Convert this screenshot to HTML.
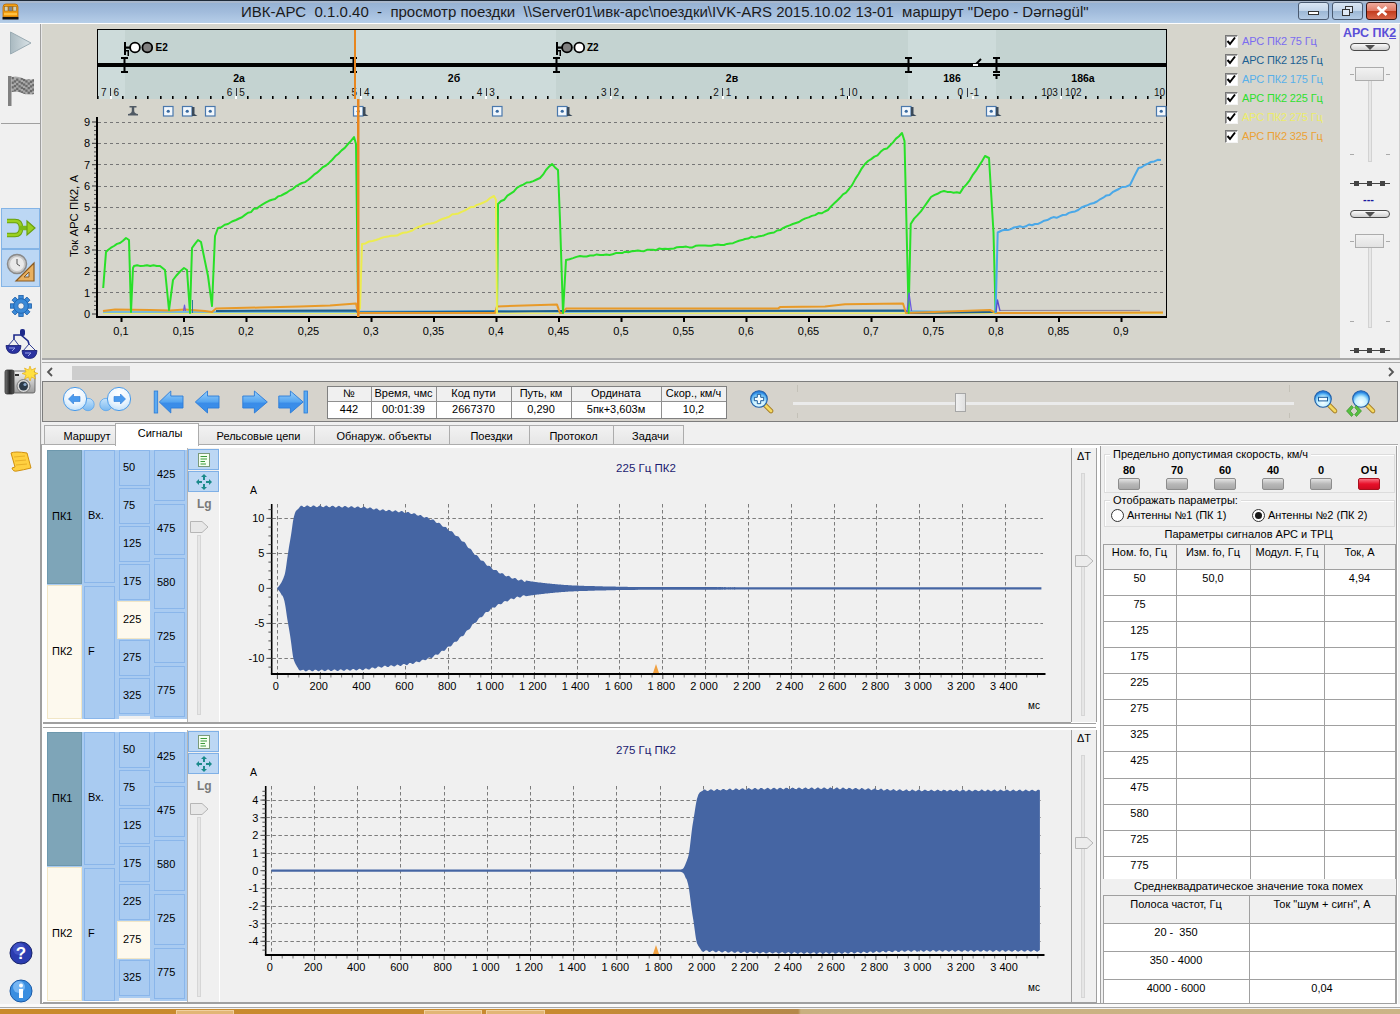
<!DOCTYPE html>
<html><head><meta charset="utf-8">
<style>
*{margin:0;padding:0;box-sizing:border-box}
html,body{width:1400px;height:1014px;overflow:hidden;background:#f0f0f0;font-family:"Liberation Sans",sans-serif;font-size:11px;color:#000}
.a{position:absolute}
.t{position:absolute;white-space:nowrap;line-height:1}
svg{position:absolute;overflow:visible}
</style></head><body>

<div class="a" style="left:0;top:0;width:1400px;height:23px;background:linear-gradient(#a9b8cc 0px,#a9b8cc 2px,#96b2d3 2px,#a2bcdc 50%,#b6cee8 100%);border-top:1px solid #1e2a38"></div>
<div class="a" style="left:0;top:23px;width:1400px;height:1px;background:#fdfdfd"></div>
<div class="t" style="left:241px;top:4px;font-size:15px;color:#1b1b1b;letter-spacing:0">ИВК-АРС&nbsp; 0.1.0.40&nbsp; -&nbsp; просмотр поездки&nbsp; \\Server01\ивк-арс\поездки\IVK-ARS 2015.10.02 13-01&nbsp; маршрут "Depo - Dərnəgül"</div>
<div class="a" style="left:1298px;top:2px;width:31px;height:18px;border:1px solid #4a5a70;border-radius:3px;background:linear-gradient(#d9e6f4,#c3d5e9 48%,#9db8d5 52%,#b4cbe4)"><div class="a" style="left:9px;top:8px;width:11px;height:4px;background:#fff;border:1px solid #333"></div></div>
<div class="a" style="left:1332px;top:2px;width:31px;height:18px;border:1px solid #4a5a70;border-radius:3px;background:linear-gradient(#d9e6f4,#c3d5e9 48%,#9db8d5 52%,#b4cbe4)"><div class="a" style="left:12px;top:3px;width:8px;height:7px;border:1.5px solid #333;background:#dfe9f5"></div><div class="a" style="left:9px;top:6px;width:8px;height:7px;border:1.5px solid #333;background:#dfe9f5"></div></div>
<div class="a" style="left:1366px;top:2px;width:31px;height:18px;border:1px solid #3a1410;border-radius:3px;background:linear-gradient(#eeaa9c,#e07a66 48%,#c23c1e 52%,#d8664a)"><svg class="a" style="left:9px;top:3px" width="12" height="10"><path d="M1.5 1 L10.5 9 M10.5 1 L1.5 9" stroke="#fff" stroke-width="2.6"/></svg></div>
<svg class="a" style="left:2px;top:3px" width="17" height="17" viewBox="0 0 17 17"><path d="M1 4 Q1 1 4 1 L13 1 Q16 1 16 4 L16 14 L1 14 Z" fill="#f5a010" stroke="#b86a08" stroke-width="0.8"/><rect x="2.5" y="3.5" width="3.5" height="4.5" fill="#d8d0b0" stroke="#8a5a10" stroke-width="0.5"/><rect x="6.8" y="3.5" width="3.5" height="4.5" fill="#808890" stroke="#8a5a10" stroke-width="0.5"/><rect x="11" y="3.5" width="3.5" height="4.5" fill="#d8d0b0" stroke="#8a5a10" stroke-width="0.5"/><rect x="2" y="10" width="13" height="2" fill="#ffc040"/><rect x="0.5" y="14" width="16" height="2.5" fill="#111"/></svg>
<div class="a" style="left:0;top:24px;width:40px;height:990px;background:#f0f0f0"></div>
<div class="a" style="left:40px;top:24px;width:1px;height:984px;background:#a0a0a0"></div><div class="a" style="left:41px;top:24px;width:1px;height:984px;background:#e8e8e8"></div>
<div class="a" style="left:1px;top:123px;width:39px;height:1px;background:#a0a0a0"></div>
<svg class="a" style="left:10px;top:31px" width="22" height="24" viewBox="0 0 22 24"><defs><linearGradient id="pl" x1="0" x2="1"><stop offset="0" stop-color="#a9b9c0"/><stop offset="1" stop-color="#dbe4e8"/></linearGradient></defs><path d="M0.5 1 L21 12 L0.5 23 Z" fill="url(#pl)" stroke="#9aabb3"/></svg>
<svg class="a" style="left:8px;top:76px" width="27" height="31" viewBox="0 0 27 31"><defs><clipPath id="fc"><path d="M3.5 1 Q9 -0.5 14 2 Q19 4.5 26 3 L26 18 Q19 19.5 14 17 Q9 14.5 3.5 16 Z"/></clipPath></defs><rect x="0" y="0" width="3.5" height="30" fill="#808080"/><g clip-path="url(#fc)"><rect x="3" y="0" width="24" height="20" fill="#a9a9a9"/><rect x="3.5" y="1.0" width="2.3" height="2.3" fill="#6a6a6a"/><rect x="8.1" y="2.5" width="2.3" height="2.3" fill="#6a6a6a"/><rect x="12.7" y="1.5" width="2.3" height="2.3" fill="#6a6a6a"/><rect x="17.3" y="-0.3" width="2.3" height="2.3" fill="#6a6a6a"/><rect x="21.9" y="0.1" width="2.3" height="2.3" fill="#6a6a6a"/><rect x="5.8" y="4.3" width="2.3" height="2.3" fill="#6a6a6a"/><rect x="10.4" y="4.6" width="2.3" height="2.3" fill="#6a6a6a"/><rect x="15.0" y="2.8" width="2.3" height="2.3" fill="#6a6a6a"/><rect x="19.6" y="1.8" width="2.3" height="2.3" fill="#6a6a6a"/><rect x="24.2" y="3.3" width="2.3" height="2.3" fill="#6a6a6a"/><rect x="3.5" y="5.6" width="2.3" height="2.3" fill="#6a6a6a"/><rect x="8.1" y="7.1" width="2.3" height="2.3" fill="#6a6a6a"/><rect x="12.7" y="6.1" width="2.3" height="2.3" fill="#6a6a6a"/><rect x="17.3" y="4.3" width="2.3" height="2.3" fill="#6a6a6a"/><rect x="21.9" y="4.7" width="2.3" height="2.3" fill="#6a6a6a"/><rect x="5.8" y="8.9" width="2.3" height="2.3" fill="#6a6a6a"/><rect x="10.4" y="9.2" width="2.3" height="2.3" fill="#6a6a6a"/><rect x="15.0" y="7.4" width="2.3" height="2.3" fill="#6a6a6a"/><rect x="19.6" y="6.4" width="2.3" height="2.3" fill="#6a6a6a"/><rect x="24.2" y="7.9" width="2.3" height="2.3" fill="#6a6a6a"/><rect x="3.5" y="10.2" width="2.3" height="2.3" fill="#6a6a6a"/><rect x="8.1" y="11.7" width="2.3" height="2.3" fill="#6a6a6a"/><rect x="12.7" y="10.7" width="2.3" height="2.3" fill="#6a6a6a"/><rect x="17.3" y="8.9" width="2.3" height="2.3" fill="#6a6a6a"/><rect x="21.9" y="9.3" width="2.3" height="2.3" fill="#6a6a6a"/><rect x="5.8" y="13.5" width="2.3" height="2.3" fill="#6a6a6a"/><rect x="10.4" y="13.8" width="2.3" height="2.3" fill="#6a6a6a"/><rect x="15.0" y="12.0" width="2.3" height="2.3" fill="#6a6a6a"/><rect x="19.6" y="11.0" width="2.3" height="2.3" fill="#6a6a6a"/><rect x="24.2" y="12.5" width="2.3" height="2.3" fill="#6a6a6a"/><rect x="3.5" y="14.8" width="2.3" height="2.3" fill="#6a6a6a"/><rect x="8.1" y="16.3" width="2.3" height="2.3" fill="#6a6a6a"/><rect x="12.7" y="15.3" width="2.3" height="2.3" fill="#6a6a6a"/><rect x="17.3" y="13.5" width="2.3" height="2.3" fill="#6a6a6a"/><rect x="21.9" y="13.9" width="2.3" height="2.3" fill="#6a6a6a"/><rect x="5.8" y="18.1" width="2.3" height="2.3" fill="#6a6a6a"/><rect x="10.4" y="18.4" width="2.3" height="2.3" fill="#6a6a6a"/><rect x="15.0" y="16.6" width="2.3" height="2.3" fill="#6a6a6a"/><rect x="19.6" y="15.6" width="2.3" height="2.3" fill="#6a6a6a"/><rect x="24.2" y="17.1" width="2.3" height="2.3" fill="#6a6a6a"/></g></svg>
<div class="a" style="left:1px;top:208px;width:39px;height:41px;background:#bcd7f4;border:1px solid #84b4e6"></div>
<div class="a" style="left:1px;top:249px;width:39px;height:38px;background:#bcd7f4;border:1px solid #84b4e6"></div>
<svg class="a" style="left:5px;top:213px" width="32" height="30" viewBox="0 0 32 30"><path d="M2 8 L10 8 Q16 8 16 15 Q16 22 10 22 L2 22" fill="none" stroke="#6aa010" stroke-width="4.5"/><path d="M2 8 L10 8 Q16 8 16 15 Q16 22 10 22 L2 22" fill="none" stroke="#9ad020" stroke-width="2.5"/><path d="M15 15 L24 15" stroke="#7ab818" stroke-width="4.5"/><path d="M22 8 L30 15 L22 22 Z" fill="#9ad020" stroke="#6aa010" stroke-width="1.2"/></svg>
<svg class="a" style="left:6px;top:253px" width="30" height="30" viewBox="0 0 30 30"><circle cx="11" cy="11" r="9.5" fill="#c8c8c8" stroke="#8a8a8a" stroke-width="1.5"/><circle cx="11" cy="11" r="7" fill="#eaeaea"/><path d="M11 6 L11 11 L14 13" stroke="#555" stroke-width="1" fill="none"/><path d="M28 10 L28 28 L10 28 Z" fill="#e8b060" stroke="#8a5a20" stroke-width="1.2"/><path d="M23 19 L23 24 L18 24 Z" fill="#bcd7f4" stroke="#8a5a20" stroke-width="1"/></svg>
<svg class="a" style="left:10px;top:295px" width="22" height="22" viewBox="-11 -11 22 22"><g fill="#3a8ad8" stroke="#1d5ea8" stroke-width="0.8"><rect x="-2.2" y="-10.5" width="4.4" height="5" transform="rotate(0)"/><rect x="-2.2" y="-10.5" width="4.4" height="5" transform="rotate(45)"/><rect x="-2.2" y="-10.5" width="4.4" height="5" transform="rotate(90)"/><rect x="-2.2" y="-10.5" width="4.4" height="5" transform="rotate(135)"/><rect x="-2.2" y="-10.5" width="4.4" height="5" transform="rotate(180)"/><rect x="-2.2" y="-10.5" width="4.4" height="5" transform="rotate(225)"/><rect x="-2.2" y="-10.5" width="4.4" height="5" transform="rotate(270)"/><rect x="-2.2" y="-10.5" width="4.4" height="5" transform="rotate(315)"/><circle r="7.3"/></g><circle r="3.2" fill="#f0f0f0" stroke="#1d5ea8" stroke-width="0.8"/></svg>
<svg class="a" style="left:0;top:320px" width="42" height="50" viewBox="0 320 42 50"><rect x="20" y="329" width="5" height="7" rx="2" fill="#1e2a8a"/><path d="M14 339 L14 335 L21 335 L28 341 L29 344" fill="none" stroke="#1e2a8a" stroke-width="1.6"/><path d="M14 339 L7 347 M14 339 L20 347 M29 344 L23 351 M29 344 L36 351" stroke="#1e2a8a" stroke-width="0.9"/><path d="M6 345.5 L21 345.5 Q20.5 353.5 13.5 353.5 Q6.5 353.5 6 345.5 Z" fill="#2a32a0" stroke="#141c70" stroke-width="0.8"/><path d="M22 350.5 L37 350.5 Q36.5 358.5 29.5 358.5 Q22.5 358.5 22 350.5 Z" fill="#2a32a0" stroke="#141c70" stroke-width="0.8"/><path d="M9 348 L15 348 L12 351" fill="none" stroke="#9aa4e8" stroke-width="1"/><path d="M25 353 L31 353 L28 356" fill="none" stroke="#9aa4e8" stroke-width="1"/></svg>
<svg class="a" style="left:0;top:362px" width="42" height="36" viewBox="0 362 42 36"><defs><linearGradient id="cbody" x1="0" y1="0" x2="0" y2="1"><stop offset="0" stop-color="#f0f0f0"/><stop offset="0.5" stop-color="#c8c8c8"/><stop offset="1" stop-color="#9a9a9a"/></linearGradient><linearGradient id="cgrip" x1="0" y1="0" x2="1" y2="0"><stop offset="0" stop-color="#777"/><stop offset="0.5" stop-color="#2a2a2a"/><stop offset="1" stop-color="#555"/></linearGradient></defs><rect x="12" y="371" width="23" height="22" rx="2" fill="url(#cbody)" stroke="#555" stroke-width="0.8"/><rect x="5" y="370" width="9" height="24" rx="2" fill="url(#cgrip)" stroke="#333" stroke-width="0.8"/><rect x="15" y="374" width="4" height="2" fill="#333"/><circle cx="23.5" cy="386" r="6.5" fill="#d8d8d8" stroke="#666" stroke-width="0.8"/><circle cx="23.5" cy="386" r="4.5" fill="#2c3a48"/><circle cx="25" cy="384.5" r="1.6" fill="#8aa8c8"/><path d="M30 366 L31.5 370 L35.5 368 L34 372 L38 373.5 L34 375 L35.5 379 L31.5 377 L30 381 L28.5 377 L24.5 379 L26 375 L22 373.5 L26 372 L24.5 368 L28.5 370 Z" fill="#ffe040" stroke="#e0a810" stroke-width="0.6"/></svg>
<svg class="a" style="left:9px;top:450px" width="24" height="24" viewBox="0 0 24 24"><path d="M2 3 Q6 1 18 3 L22 18 Q14 20 8 21 Q4 22 3 18 L6 17 Z" fill="#ffd040" stroke="#d09010" stroke-width="1"/><path d="M5 7 L16 6 M6 11 L17 10 M7 15 L18 14" stroke="#e8b028" stroke-width="1"/></svg>
<svg class="a" style="left:9px;top:941px" width="24" height="24" viewBox="0 0 24 24"><circle cx="12" cy="12" r="11" fill="#2b3cb0" stroke="#18246a"/><circle cx="10" cy="8" r="6" fill="#5868d8" opacity="0.5"/><text x="12" y="18" font-size="17" font-weight="bold" fill="#fff" text-anchor="middle" font-family="Liberation Sans">?</text></svg>
<svg class="a" style="left:9px;top:979px" width="24" height="24" viewBox="0 0 24 24"><circle cx="12" cy="12" r="11" fill="#3a8ee0" stroke="#1a5aa8"/><circle cx="10" cy="8" r="6" fill="#9ed0ff" opacity="0.6"/><circle cx="12" cy="6.5" r="2" fill="#fff"/><rect x="10" y="10" width="4" height="9" fill="#fff"/></svg>
<div class="a" style="left:42px;top:24px;width:1298px;height:334px;background:#d6d5cc"></div>
<div class="a" style="left:1340px;top:24px;width:60px;height:334px;background:#f0f0f0"></div>
<div class="a" style="left:42px;top:358px;width:1358px;height:2px;background:#a9a9a9"></div>
<div class="a" style="left:42px;top:362px;width:1358px;height:1px;background:#a9a9a9"></div>
<div class="a" style="left:42px;top:363px;width:1358px;height:18px;background:#f0f0f0"></div>
<div class="a" style="left:72px;top:366px;width:58px;height:14px;background:#cdcdcd"></div>
<div class="a" style="left:42px;top:381px;width:1356px;height:41px;background:#d6d3cc;border:1px solid #7d7d7d"></div>
<svg class="a" style="left:46px;top:367px" width="8" height="10"><path d="M6 1 L2 5 L6 9" fill="none" stroke="#555" stroke-width="1.8"/></svg>
<svg class="a" style="left:1387px;top:367px" width="8" height="10"><path d="M2 1 L6 5 L2 9" fill="none" stroke="#555" stroke-width="1.8"/></svg>
<svg class="a" style="left:0;top:0" width="1" height="1"><defs><radialGradient id="cgL" cx="0.5" cy="0.25" r="0.8"><stop offset="0" stop-color="#ffffff"/><stop offset="0.6" stop-color="#eaf4fd"/><stop offset="1" stop-color="#b8dcfa"/></radialGradient><linearGradient id="bgL" x1="0" y1="0" x2="0" y2="1"><stop offset="0" stop-color="#c8e4fb"/><stop offset="1" stop-color="#78b8f0"/></linearGradient></defs><circle cx="88" cy="404.5" r="6.2" fill="url(#bgL)" stroke="#5aa4ec" stroke-width="0.8"/><circle cx="75" cy="399" r="11.6" fill="url(#cgL)" stroke="#4a9ae8" stroke-width="1"/><path d="M68.5 399 L73.5 394 L73.5 396.5 L80 396.5 L80 401.5 L73.5 401.5 L73.5 404 Z" fill="#4a9aee" stroke="#2a7ad8" stroke-width="0.6"/></svg>
<svg class="a" style="left:0;top:0" width="1" height="1"><defs><radialGradient id="cgR" cx="0.5" cy="0.25" r="0.8"><stop offset="0" stop-color="#ffffff"/><stop offset="0.6" stop-color="#eaf4fd"/><stop offset="1" stop-color="#b8dcfa"/></radialGradient><linearGradient id="bgR" x1="0" y1="0" x2="0" y2="1"><stop offset="0" stop-color="#c8e4fb"/><stop offset="1" stop-color="#78b8f0"/></linearGradient></defs><circle cx="106" cy="404.5" r="6.2" fill="url(#bgR)" stroke="#5aa4ec" stroke-width="0.8"/><circle cx="119" cy="399" r="11.6" fill="url(#cgR)" stroke="#4a9ae8" stroke-width="1"/><path d="M125.5 399 L120.5 394 L120.5 396.5 L114 396.5 L114 401.5 L120.5 401.5 L120.5 404 Z" fill="#4a9aee" stroke="#2a7ad8" stroke-width="0.6"/></svg>
<svg class="a" style="left:0;top:0" width="1" height="1"><defs><linearGradient id="ag1" x1="0" y1="0" x2="0" y2="1"><stop offset="0" stop-color="#9ad0fa"/><stop offset="0.5" stop-color="#54a4f0"/><stop offset="0.55" stop-color="#3a8ce8"/><stop offset="1" stop-color="#3a90ea"/></linearGradient></defs><path d="M159.3 402 L170.8 391 L170.8 396 L183 396 L183 408 L170.8 408 L170.8 413 Z" fill="url(#ag1)" stroke="#2a7ad8" stroke-width="0.9" stroke-linejoin="miter"/><rect x="154.2" y="391" width="3.5" height="22" fill="#5aaaf2" stroke="#2a7ad8" stroke-width="0.8"/></svg>
<svg class="a" style="left:0;top:0" width="1" height="1"><defs><linearGradient id="ag2" x1="0" y1="0" x2="0" y2="1"><stop offset="0" stop-color="#9ad0fa"/><stop offset="0.5" stop-color="#54a4f0"/><stop offset="0.55" stop-color="#3a8ce8"/><stop offset="1" stop-color="#3a90ea"/></linearGradient></defs><path d="M195.3 402 L207.5 391 L207.5 396 L219 396 L219 408 L207.5 408 L207.5 413 Z" fill="url(#ag2)" stroke="#2a7ad8" stroke-width="0.9" stroke-linejoin="miter"/></svg>
<svg class="a" style="left:0;top:0" width="1" height="1"><defs><linearGradient id="ag3" x1="0" y1="0" x2="0" y2="1"><stop offset="0" stop-color="#9ad0fa"/><stop offset="0.5" stop-color="#54a4f0"/><stop offset="0.55" stop-color="#3a8ce8"/><stop offset="1" stop-color="#3a90ea"/></linearGradient></defs><path d="M267.3 402 L254.4 391 L254.4 396 L242.8 396 L242.8 408 L254.4 408 L254.4 413 Z" fill="url(#ag3)" stroke="#2a7ad8" stroke-width="0.9" stroke-linejoin="miter"/></svg>
<svg class="a" style="left:0;top:0" width="1" height="1"><defs><linearGradient id="ag4" x1="0" y1="0" x2="0" y2="1"><stop offset="0" stop-color="#9ad0fa"/><stop offset="0.5" stop-color="#54a4f0"/><stop offset="0.55" stop-color="#3a8ce8"/><stop offset="1" stop-color="#3a90ea"/></linearGradient></defs><path d="M303.2 402 L290.4 391 L290.4 396 L278.8 396 L278.8 408 L290.4 408 L290.4 413 Z" fill="url(#ag4)" stroke="#2a7ad8" stroke-width="0.9" stroke-linejoin="miter"/><rect x="304" y="391" width="3.5" height="22" fill="#5aaaf2" stroke="#2a7ad8" stroke-width="0.8"/></svg>
<div class="a" style="left:327px;top:386px;width:400px;height:33px;background:#fff;border:1px solid #808080"></div>
<div class="a" style="left:328px;top:387px;width:398px;height:14px;background:#f0f0f0"></div>
<div class="a" style="left:328px;top:401px;width:398px;height:1px;background:#909090"></div>
<div class="a" style="left:371px;top:387px;width:1px;height:31px;background:#909090"></div>
<div class="a" style="left:436px;top:387px;width:1px;height:31px;background:#909090"></div>
<div class="a" style="left:511px;top:387px;width:1px;height:31px;background:#909090"></div>
<div class="a" style="left:571px;top:387px;width:1px;height:31px;background:#909090"></div>
<div class="a" style="left:661px;top:387px;width:1px;height:31px;background:#909090"></div>
<div class="t" style="left:327px;width:44px;text-align:center;top:388px;font-size:11px">№</div>
<div class="t" style="left:327px;width:44px;text-align:center;top:404px;font-size:11px">442</div>
<div class="t" style="left:371px;width:65px;text-align:center;top:388px;font-size:11px">Время, чмс</div>
<div class="t" style="left:371px;width:65px;text-align:center;top:404px;font-size:11px">00:01:39</div>
<div class="t" style="left:436px;width:75px;text-align:center;top:388px;font-size:11px">Код пути</div>
<div class="t" style="left:436px;width:75px;text-align:center;top:404px;font-size:11px">2667370</div>
<div class="t" style="left:511px;width:60px;text-align:center;top:388px;font-size:11px">Путь, км</div>
<div class="t" style="left:511px;width:60px;text-align:center;top:404px;font-size:11px">0,290</div>
<div class="t" style="left:571px;width:90px;text-align:center;top:388px;font-size:11px">Ордината</div>
<div class="t" style="left:571px;width:90px;text-align:center;top:404px;font-size:11px">5пк+3,603м</div>
<div class="t" style="left:661px;width:65px;text-align:center;top:388px;font-size:11px">Скор., км/ч</div>
<div class="t" style="left:661px;width:65px;text-align:center;top:404px;font-size:11px">10,2</div>
<svg class="a" style="left:750px;top:390px" width="28" height="28" viewBox="0 0 28 28"><defs><radialGradient id="mgp" cx="0.5" cy="0.7" r="0.6"><stop offset="0" stop-color="#f4feff"/><stop offset="0.55" stop-color="#c6f0ff"/><stop offset="0.85" stop-color="#58b4f4"/><stop offset="1" stop-color="#2a84e0"/></radialGradient></defs><path d="M14.5 14.5 L21 21" stroke="#a8802a" stroke-width="4.6" stroke-linecap="round"/><path d="M14.5 14.5 L21 21" stroke="#f4d860" stroke-width="2.8" stroke-linecap="round"/><circle cx="9" cy="9" r="8.3" fill="url(#mgp)" stroke="#1e5ea8" stroke-width="1.1"/><path d="M7.3 4.3 L10.7 4.3 L10.7 7.3 L13.7 7.3 L13.7 10.7 L10.7 10.7 L10.7 13.7 L7.3 13.7 L7.3 10.7 L4.3 10.7 L4.3 7.3 L7.3 7.3 Z" fill="#f4fdff" stroke="#1a5a9a" stroke-width="1"/></svg>
<svg class="a" style="left:1314px;top:390px" width="28" height="28" viewBox="0 0 28 28"><defs><radialGradient id="mgm" cx="0.5" cy="0.7" r="0.6"><stop offset="0" stop-color="#f4feff"/><stop offset="0.55" stop-color="#c6f0ff"/><stop offset="0.85" stop-color="#58b4f4"/><stop offset="1" stop-color="#2a84e0"/></radialGradient></defs><path d="M14.5 14.5 L21 21" stroke="#a8802a" stroke-width="4.6" stroke-linecap="round"/><path d="M14.5 14.5 L21 21" stroke="#f4d860" stroke-width="2.8" stroke-linecap="round"/><circle cx="9" cy="9" r="8.3" fill="url(#mgm)" stroke="#1e5ea8" stroke-width="1.1"/><rect x="4.5" y="7.3" width="9" height="3.6" fill="#f4fdff" stroke="#1a5a9a" stroke-width="1"/></svg>
<svg class="a" style="left:1352px;top:390px" width="28" height="28" viewBox="0 0 28 28"><defs><radialGradient id="mgf" cx="0.5" cy="0.7" r="0.6"><stop offset="0" stop-color="#f4feff"/><stop offset="0.55" stop-color="#c6f0ff"/><stop offset="0.85" stop-color="#58b4f4"/><stop offset="1" stop-color="#2a84e0"/></radialGradient></defs><path d="M14.5 14.5 L21 21" stroke="#a8802a" stroke-width="4.6" stroke-linecap="round"/><path d="M14.5 14.5 L21 21" stroke="#f4d860" stroke-width="2.8" stroke-linecap="round"/><circle cx="9" cy="9" r="8.3" fill="url(#mgf)" stroke="#1e5ea8" stroke-width="1.1"/></svg>
<svg class="a" style="left:1346px;top:405px" width="16" height="12" viewBox="0 0 16 12"><path d="M5.5 0.5 L0.5 6 L5.5 11.5 L7.3 9.6 L4.2 6 L7.3 2.4 Z" fill="#58c040" stroke="#2a8a20" stroke-width="0.6"/><path d="M10.5 0.5 L15.5 6 L10.5 11.5 L8.7 9.6 L11.8 6 L8.7 2.4 Z" fill="#58c040" stroke="#2a8a20" stroke-width="0.6"/></svg>
<div class="a" style="left:793px;top:402px;width:501px;height:3px;background:#ebebeb"></div>
<div class="a" style="left:797px;top:385px;width:1px;height:7px;background:#c4c1b8"></div>
<div class="a" style="left:797px;top:413px;width:1px;height:5px;background:#c4c1b8"></div>
<div class="a" style="left:1289px;top:385px;width:1px;height:7px;background:#c4c1b8"></div>
<div class="a" style="left:1289px;top:413px;width:1px;height:5px;background:#c4c1b8"></div>
<div class="a" style="left:955px;top:393px;width:11px;height:19px;background:linear-gradient(90deg,#f0f0f0,#e0e0e0);border:1px solid #a6a6a6"></div>
<div class="a" style="left:41px;top:444px;width:1357px;height:560px;background:#ffffff;border-left:1px solid #a0a0a0;border-top:1px solid #acacac"></div>
<svg class="a" style="left:0;top:0" width="1400" height="360" viewBox="0 0 1400 360"><rect x="98" y="30" width="27" height="69" fill="#cddbda"/><rect x="125" y="30" width="230" height="69" fill="#c4d3d1"/><rect x="355" y="30" width="201" height="69" fill="#cddbda"/><rect x="556" y="30" width="352" height="69" fill="#c4d3d1"/><rect x="908" y="30" width="88" height="69" fill="#cddbda"/><rect x="996" y="30" width="170" height="69" fill="#c4d3d1"/><rect x="97" y="29" width="1070" height="1" fill="#000"/><rect x="97" y="29" width="1" height="70" fill="#000"/><rect x="1166" y="29" width="1" height="288" fill="#000"/><rect x="98" y="63" width="1068" height="4" fill="#000"/><rect x="123.5" y="57" width="2" height="16" fill="#000"/><rect x="121" y="57" width="7" height="2" fill="#000"/><rect x="121" y="71" width="7" height="2" fill="#000"/><rect x="352.5" y="57" width="2" height="16" fill="#000"/><rect x="350" y="57" width="7" height="2" fill="#000"/><rect x="350" y="71" width="7" height="2" fill="#000"/><rect x="555.5" y="57" width="2" height="16" fill="#000"/><rect x="553" y="57" width="7" height="2" fill="#000"/><rect x="553" y="71" width="7" height="2" fill="#000"/><rect x="907.5" y="57" width="2" height="16" fill="#000"/><rect x="905" y="57" width="7" height="2" fill="#000"/><rect x="905" y="71" width="7" height="2" fill="#000"/><rect x="995.5" y="57" width="2" height="16" fill="#000"/><rect x="993" y="57" width="7" height="2" fill="#000"/><rect x="993" y="71" width="7" height="2" fill="#000"/><rect x="993" y="74" width="7" height="2" fill="#000"/><rect x="995.5" y="74" width="2" height="5" fill="#000"/><path d="M975 65 L981 59" stroke="#000" stroke-width="2"/><rect x="973" y="64" width="5" height="2" fill="#fff"/><rect x="97" y="96" width="1.6" height="3" fill="#000"/><rect x="110" y="96" width="1.6" height="3" fill="#000"/><rect x="122" y="96" width="1.6" height="3" fill="#000"/><rect x="135" y="96" width="1.6" height="3" fill="#000"/><rect x="147" y="96" width="1.6" height="3" fill="#000"/><rect x="160" y="96" width="1.6" height="3" fill="#000"/><rect x="172" y="96" width="1.6" height="3" fill="#000"/><rect x="185" y="96" width="1.6" height="3" fill="#000"/><rect x="197" y="96" width="1.6" height="3" fill="#000"/><rect x="210" y="96" width="1.6" height="3" fill="#000"/><rect x="222" y="96" width="1.6" height="3" fill="#000"/><rect x="235" y="96" width="1.6" height="3" fill="#000"/><rect x="247" y="96" width="1.6" height="3" fill="#000"/><rect x="260" y="96" width="1.6" height="3" fill="#000"/><rect x="272" y="96" width="1.6" height="3" fill="#000"/><rect x="285" y="96" width="1.6" height="3" fill="#000"/><rect x="297" y="96" width="1.6" height="3" fill="#000"/><rect x="310" y="96" width="1.6" height="3" fill="#000"/><rect x="322" y="96" width="1.6" height="3" fill="#000"/><rect x="335" y="96" width="1.6" height="3" fill="#000"/><rect x="347" y="96" width="1.6" height="3" fill="#000"/><rect x="360" y="96" width="1.6" height="3" fill="#000"/><rect x="372" y="96" width="1.6" height="3" fill="#000"/><rect x="385" y="96" width="1.6" height="3" fill="#000"/><rect x="397" y="96" width="1.6" height="3" fill="#000"/><rect x="410" y="96" width="1.6" height="3" fill="#000"/><rect x="422" y="96" width="1.6" height="3" fill="#000"/><rect x="435" y="96" width="1.6" height="3" fill="#000"/><rect x="447" y="96" width="1.6" height="3" fill="#000"/><rect x="460" y="96" width="1.6" height="3" fill="#000"/><rect x="472" y="96" width="1.6" height="3" fill="#000"/><rect x="485" y="96" width="1.6" height="3" fill="#000"/><rect x="497" y="96" width="1.6" height="3" fill="#000"/><rect x="510" y="96" width="1.6" height="3" fill="#000"/><rect x="522" y="96" width="1.6" height="3" fill="#000"/><rect x="535" y="96" width="1.6" height="3" fill="#000"/><rect x="547" y="96" width="1.6" height="3" fill="#000"/><rect x="560" y="96" width="1.6" height="3" fill="#000"/><rect x="572" y="96" width="1.6" height="3" fill="#000"/><rect x="585" y="96" width="1.6" height="3" fill="#000"/><rect x="597" y="96" width="1.6" height="3" fill="#000"/><rect x="610" y="96" width="1.6" height="3" fill="#000"/><rect x="622" y="96" width="1.6" height="3" fill="#000"/><rect x="635" y="96" width="1.6" height="3" fill="#000"/><rect x="647" y="96" width="1.6" height="3" fill="#000"/><rect x="660" y="96" width="1.6" height="3" fill="#000"/><rect x="672" y="96" width="1.6" height="3" fill="#000"/><rect x="685" y="96" width="1.6" height="3" fill="#000"/><rect x="697" y="96" width="1.6" height="3" fill="#000"/><rect x="710" y="96" width="1.6" height="3" fill="#000"/><rect x="722" y="96" width="1.6" height="3" fill="#000"/><rect x="735" y="96" width="1.6" height="3" fill="#000"/><rect x="747" y="96" width="1.6" height="3" fill="#000"/><rect x="760" y="96" width="1.6" height="3" fill="#000"/><rect x="772" y="96" width="1.6" height="3" fill="#000"/><rect x="785" y="96" width="1.6" height="3" fill="#000"/><rect x="797" y="96" width="1.6" height="3" fill="#000"/><rect x="810" y="96" width="1.6" height="3" fill="#000"/><rect x="822" y="96" width="1.6" height="3" fill="#000"/><rect x="835" y="96" width="1.6" height="3" fill="#000"/><rect x="847" y="96" width="1.6" height="3" fill="#000"/><rect x="860" y="96" width="1.6" height="3" fill="#000"/><rect x="872" y="96" width="1.6" height="3" fill="#000"/><rect x="885" y="96" width="1.6" height="3" fill="#000"/><rect x="897" y="96" width="1.6" height="3" fill="#000"/><rect x="910" y="96" width="1.6" height="3" fill="#000"/><rect x="922" y="96" width="1.6" height="3" fill="#000"/><rect x="935" y="96" width="1.6" height="3" fill="#000"/><rect x="947" y="96" width="1.6" height="3" fill="#000"/><rect x="960" y="96" width="1.6" height="3" fill="#000"/><rect x="972" y="96" width="1.6" height="3" fill="#000"/><rect x="985" y="96" width="1.6" height="3" fill="#000"/><rect x="997" y="96" width="1.6" height="3" fill="#000"/><rect x="1010" y="96" width="1.6" height="3" fill="#000"/><rect x="1022" y="96" width="1.6" height="3" fill="#000"/><rect x="1035" y="96" width="1.6" height="3" fill="#000"/><rect x="1047" y="96" width="1.6" height="3" fill="#000"/><rect x="1060" y="96" width="1.6" height="3" fill="#000"/><rect x="1072" y="96" width="1.6" height="3" fill="#000"/><rect x="1085" y="96" width="1.6" height="3" fill="#000"/><rect x="1097" y="96" width="1.6" height="3" fill="#000"/><rect x="1110" y="96" width="1.6" height="3" fill="#000"/><rect x="1122" y="96" width="1.6" height="3" fill="#000"/><rect x="1135" y="96" width="1.6" height="3" fill="#000"/><rect x="1147" y="96" width="1.6" height="3" fill="#000"/><rect x="1160" y="96" width="1.6" height="3" fill="#000"/><rect x="124" y="42" width="2" height="13" fill="#000"/><rect x="124" y="46.5" width="6" height="2.2" fill="#000"/><rect x="126" y="50" width="3" height="1.5" fill="#000"/><rect x="127.5" y="50" width="1.5" height="6" fill="#000"/><circle cx="135" cy="47.5" r="4.9" fill="#fff" stroke="#000" stroke-width="1.8"/><circle cx="147.3" cy="47.5" r="4.9" fill="#808080" stroke="#000" stroke-width="1.8"/><rect x="556" y="42" width="2" height="13" fill="#000"/><rect x="556" y="46.5" width="6" height="2.2" fill="#000"/><rect x="558" y="50" width="3" height="1.5" fill="#000"/><rect x="559.5" y="50" width="1.5" height="6" fill="#000"/><circle cx="567" cy="47.5" r="4.9" fill="#808080" stroke="#000" stroke-width="1.8"/><circle cx="579.3" cy="47.5" r="4.9" fill="#fff" stroke="#000" stroke-width="1.8"/><text x="155.5" y="51" font-size="10" font-weight="bold" font-family="Liberation Sans">E2</text><text x="587" y="51" font-size="10" font-weight="bold" font-family="Liberation Sans">Z2</text><text x="239" y="82" font-size="10.5" font-weight="bold" text-anchor="middle" font-family="Liberation Sans">2а</text><text x="454" y="82" font-size="10.5" font-weight="bold" text-anchor="middle" font-family="Liberation Sans">2б</text><text x="732" y="82" font-size="10.5" font-weight="bold" text-anchor="middle" font-family="Liberation Sans">2в</text><text x="952" y="82" font-size="10.5" font-weight="bold" text-anchor="middle" font-family="Liberation Sans">186</text><text x="1083" y="82" font-size="10.5" font-weight="bold" text-anchor="middle" font-family="Liberation Sans">186а</text><text x="106.5" y="96" font-size="10" text-anchor="end" font-family="Liberation Sans" fill="#111">7</text><text x="113.5" y="96" font-size="10" text-anchor="start" font-family="Liberation Sans" fill="#111">6</text><rect x="110" y="88" width="1" height="9" fill="#303440"/><text x="232.2" y="96" font-size="10" text-anchor="end" font-family="Liberation Sans" fill="#111">6</text><text x="239.2" y="96" font-size="10" text-anchor="start" font-family="Liberation Sans" fill="#111">5</text><rect x="236" y="88" width="1" height="9" fill="#303440"/><text x="357.0" y="96" font-size="10" text-anchor="end" font-family="Liberation Sans" fill="#111">5</text><text x="364.0" y="96" font-size="10" text-anchor="start" font-family="Liberation Sans" fill="#111">4</text><rect x="360" y="88" width="1" height="9" fill="#303440"/><text x="482.2" y="96" font-size="10" text-anchor="end" font-family="Liberation Sans" fill="#111">4</text><text x="489.2" y="96" font-size="10" text-anchor="start" font-family="Liberation Sans" fill="#111">3</text><rect x="486" y="88" width="1" height="9" fill="#303440"/><text x="606.5" y="96" font-size="10" text-anchor="end" font-family="Liberation Sans" fill="#111">3</text><text x="613.5" y="96" font-size="10" text-anchor="start" font-family="Liberation Sans" fill="#111">2</text><rect x="610" y="88" width="1" height="9" fill="#303440"/><text x="718.8" y="96" font-size="10" text-anchor="end" font-family="Liberation Sans" fill="#111">2</text><text x="725.8" y="96" font-size="10" text-anchor="start" font-family="Liberation Sans" fill="#111">1</text><rect x="722" y="88" width="1" height="9" fill="#303440"/><text x="845.1" y="96" font-size="10" text-anchor="end" font-family="Liberation Sans" fill="#111">1</text><text x="852.1" y="96" font-size="10" text-anchor="start" font-family="Liberation Sans" fill="#111">0</text><rect x="849" y="88" width="1" height="9" fill="#303440"/><text x="963.1" y="96" font-size="10" text-anchor="end" font-family="Liberation Sans" fill="#111">0</text><text x="970.1" y="96" font-size="10" text-anchor="start" font-family="Liberation Sans" fill="#111">-1</text><rect x="967" y="88" width="1" height="9" fill="#303440"/><text x="1057.9" y="96" font-size="10" text-anchor="end" font-family="Liberation Sans" fill="#111">103</text><text x="1064.9" y="96" font-size="10" text-anchor="start" font-family="Liberation Sans" fill="#111">102</text><rect x="1061" y="88" width="1" height="9" fill="#303440"/><text x="1154" y="96" font-size="10" font-family="Liberation Sans" fill="#111">10</text><rect x="110" y="96" width="2" height="3" fill="#fff"/><rect x="235" y="96" width="2" height="3" fill="#fff"/><rect x="360" y="96" width="2" height="3" fill="#fff"/><rect x="485" y="96" width="2" height="3" fill="#fff"/><rect x="610" y="96" width="2" height="3" fill="#fff"/><rect x="722" y="96" width="2" height="3" fill="#fff"/><rect x="848" y="96" width="2" height="3" fill="#fff"/><rect x="972" y="96" width="2" height="3" fill="#fff"/><rect x="1060" y="96" width="2" height="3" fill="#fff"/><path d="M129.5 106 L136.5 106 L136.5 107.5 L134.2 107.5 L134.2 111 Q134.5 113.5 138 114 L138 115.5 L128 115.5 L128 114 Q131.5 113.5 131.8 111 L131.8 107.5 L129.5 107.5 Z" fill="#505a64"/><rect x="163.5" y="106.5" width="9.5" height="9.5" fill="#f2f7fc" stroke="#4a78ac" stroke-width="1.2"/><circle cx="168.25" cy="111.25" r="1.6" fill="#3a6aa0"/><rect x="182.5" y="106.5" width="9.5" height="9.5" fill="#f2f7fc" stroke="#4a78ac" stroke-width="1.2"/><circle cx="187.25" cy="111.25" r="1.6" fill="#3a6aa0"/><path d="M192 107 L194.5 107 L194.5 114 L197.5 116 L192 116 Z" fill="#3a4a5a"/><rect x="205.5" y="106.5" width="9.5" height="9.5" fill="#f2f7fc" stroke="#4a78ac" stroke-width="1.2"/><circle cx="210.25" cy="111.25" r="1.6" fill="#3a6aa0"/><rect x="353.5" y="106.5" width="9.5" height="9.5" fill="#f2f7fc" stroke="#4a78ac" stroke-width="1.2"/><circle cx="358.25" cy="111.25" r="1.6" fill="#3a6aa0"/><path d="M363 107 L365.5 107 L365.5 114 L368.5 116 L363 116 Z" fill="#3a4a5a"/><rect x="492.5" y="106.5" width="9.5" height="9.5" fill="#f2f7fc" stroke="#4a78ac" stroke-width="1.2"/><circle cx="497.25" cy="111.25" r="1.6" fill="#3a6aa0"/><rect x="557.5" y="106.5" width="9.5" height="9.5" fill="#f2f7fc" stroke="#4a78ac" stroke-width="1.2"/><circle cx="562.25" cy="111.25" r="1.6" fill="#3a6aa0"/><path d="M567 107 L569.5 107 L569.5 114 L572.5 116 L567 116 Z" fill="#3a4a5a"/><rect x="901.5" y="106.5" width="9.5" height="9.5" fill="#f2f7fc" stroke="#4a78ac" stroke-width="1.2"/><circle cx="906.25" cy="111.25" r="1.6" fill="#3a6aa0"/><path d="M911 107 L913.5 107 L913.5 114 L916.5 116 L911 116 Z" fill="#3a4a5a"/><rect x="986.5" y="106.5" width="9.5" height="9.5" fill="#f2f7fc" stroke="#4a78ac" stroke-width="1.2"/><circle cx="991.25" cy="111.25" r="1.6" fill="#3a6aa0"/><path d="M996 107 L998.5 107 L998.5 114 L1001.5 116 L996 116 Z" fill="#3a4a5a"/><rect x="1156.5" y="106.5" width="9.5" height="9.5" fill="#f2f7fc" stroke="#4a78ac" stroke-width="1.2"/><circle cx="1161.25" cy="111.25" r="1.6" fill="#3a6aa0"/><line x1="98" y1="292.5" x2="1165" y2="292.5" stroke="#767676" stroke-width="1" stroke-dasharray="3 3"/><line x1="98" y1="271.5" x2="1165" y2="271.5" stroke="#767676" stroke-width="1" stroke-dasharray="3 3"/><line x1="98" y1="250.5" x2="1165" y2="250.5" stroke="#767676" stroke-width="1" stroke-dasharray="3 3"/><line x1="98" y1="228.5" x2="1165" y2="228.5" stroke="#767676" stroke-width="1" stroke-dasharray="3 3"/><line x1="98" y1="207.5" x2="1165" y2="207.5" stroke="#767676" stroke-width="1" stroke-dasharray="3 3"/><line x1="98" y1="186.5" x2="1165" y2="186.5" stroke="#767676" stroke-width="1" stroke-dasharray="3 3"/><line x1="98" y1="164.5" x2="1165" y2="164.5" stroke="#767676" stroke-width="1" stroke-dasharray="3 3"/><line x1="98" y1="143.5" x2="1165" y2="143.5" stroke="#767676" stroke-width="1" stroke-dasharray="3 3"/><line x1="98" y1="122.5" x2="1165" y2="122.5" stroke="#767676" stroke-width="1" stroke-dasharray="3 3"/><rect x="96" y="117" width="2" height="201" fill="#000"/><rect x="96" y="316" width="1071" height="2" fill="#000"/><rect x="92" y="313.5" width="4" height="1" fill="#333"/><text x="90" y="318.0" font-size="11" text-anchor="end" font-family="Liberation Sans">0</text><rect x="94" y="309.2" width="2" height="1" fill="#555"/><rect x="94" y="305.0" width="2" height="1" fill="#555"/><rect x="94" y="300.7" width="2" height="1" fill="#555"/><rect x="94" y="296.4" width="2" height="1" fill="#555"/><rect x="92" y="292.2" width="4" height="1" fill="#333"/><text x="90" y="296.7" font-size="11" text-anchor="end" font-family="Liberation Sans">1</text><rect x="94" y="287.9" width="2" height="1" fill="#555"/><rect x="94" y="283.6" width="2" height="1" fill="#555"/><rect x="94" y="279.4" width="2" height="1" fill="#555"/><rect x="94" y="275.1" width="2" height="1" fill="#555"/><rect x="92" y="270.8" width="4" height="1" fill="#333"/><text x="90" y="275.3" font-size="11" text-anchor="end" font-family="Liberation Sans">2</text><rect x="94" y="266.6" width="2" height="1" fill="#555"/><rect x="94" y="262.3" width="2" height="1" fill="#555"/><rect x="94" y="258.0" width="2" height="1" fill="#555"/><rect x="94" y="253.8" width="2" height="1" fill="#555"/><rect x="92" y="249.5" width="4" height="1" fill="#333"/><text x="90" y="254.0" font-size="11" text-anchor="end" font-family="Liberation Sans">3</text><rect x="94" y="245.2" width="2" height="1" fill="#555"/><rect x="94" y="241.0" width="2" height="1" fill="#555"/><rect x="94" y="236.7" width="2" height="1" fill="#555"/><rect x="94" y="232.4" width="2" height="1" fill="#555"/><rect x="92" y="228.2" width="4" height="1" fill="#333"/><text x="90" y="232.7" font-size="11" text-anchor="end" font-family="Liberation Sans">4</text><rect x="94" y="223.9" width="2" height="1" fill="#555"/><rect x="94" y="219.6" width="2" height="1" fill="#555"/><rect x="94" y="215.4" width="2" height="1" fill="#555"/><rect x="94" y="211.1" width="2" height="1" fill="#555"/><rect x="92" y="206.8" width="4" height="1" fill="#333"/><text x="90" y="211.3" font-size="11" text-anchor="end" font-family="Liberation Sans">5</text><rect x="94" y="202.6" width="2" height="1" fill="#555"/><rect x="94" y="198.3" width="2" height="1" fill="#555"/><rect x="94" y="194.0" width="2" height="1" fill="#555"/><rect x="94" y="189.8" width="2" height="1" fill="#555"/><rect x="92" y="185.5" width="4" height="1" fill="#333"/><text x="90" y="190.0" font-size="11" text-anchor="end" font-family="Liberation Sans">6</text><rect x="94" y="181.2" width="2" height="1" fill="#555"/><rect x="94" y="177.0" width="2" height="1" fill="#555"/><rect x="94" y="172.7" width="2" height="1" fill="#555"/><rect x="94" y="168.4" width="2" height="1" fill="#555"/><rect x="92" y="164.2" width="4" height="1" fill="#333"/><text x="90" y="168.7" font-size="11" text-anchor="end" font-family="Liberation Sans">7</text><rect x="94" y="159.9" width="2" height="1" fill="#555"/><rect x="94" y="155.6" width="2" height="1" fill="#555"/><rect x="94" y="151.4" width="2" height="1" fill="#555"/><rect x="94" y="147.1" width="2" height="1" fill="#555"/><rect x="92" y="142.8" width="4" height="1" fill="#333"/><text x="90" y="147.3" font-size="11" text-anchor="end" font-family="Liberation Sans">8</text><rect x="94" y="138.6" width="2" height="1" fill="#555"/><rect x="94" y="134.3" width="2" height="1" fill="#555"/><rect x="94" y="130.0" width="2" height="1" fill="#555"/><rect x="94" y="125.8" width="2" height="1" fill="#555"/><rect x="92" y="121.5" width="4" height="1" fill="#333"/><text x="90" y="126.0" font-size="11" text-anchor="end" font-family="Liberation Sans">9</text><rect x="120.5" y="318" width="2" height="4" fill="#000"/><text x="121.0" y="335" font-size="11" text-anchor="middle" font-family="Liberation Sans">0,1</text><rect x="183.0" y="318" width="2" height="4" fill="#000"/><text x="183.5" y="335" font-size="11" text-anchor="middle" font-family="Liberation Sans">0,15</text><rect x="245.5" y="318" width="2" height="4" fill="#000"/><text x="246.0" y="335" font-size="11" text-anchor="middle" font-family="Liberation Sans">0,2</text><rect x="308.0" y="318" width="2" height="4" fill="#000"/><text x="308.5" y="335" font-size="11" text-anchor="middle" font-family="Liberation Sans">0,25</text><rect x="370.5" y="318" width="2" height="4" fill="#000"/><text x="371.0" y="335" font-size="11" text-anchor="middle" font-family="Liberation Sans">0,3</text><rect x="433.0" y="318" width="2" height="4" fill="#000"/><text x="433.5" y="335" font-size="11" text-anchor="middle" font-family="Liberation Sans">0,35</text><rect x="495.5" y="318" width="2" height="4" fill="#000"/><text x="496.0" y="335" font-size="11" text-anchor="middle" font-family="Liberation Sans">0,4</text><rect x="558.0" y="318" width="2" height="4" fill="#000"/><text x="558.5" y="335" font-size="11" text-anchor="middle" font-family="Liberation Sans">0,45</text><rect x="620.5" y="318" width="2" height="4" fill="#000"/><text x="621.0" y="335" font-size="11" text-anchor="middle" font-family="Liberation Sans">0,5</text><rect x="683.0" y="318" width="2" height="4" fill="#000"/><text x="683.5" y="335" font-size="11" text-anchor="middle" font-family="Liberation Sans">0,55</text><rect x="745.5" y="318" width="2" height="4" fill="#000"/><text x="746.0" y="335" font-size="11" text-anchor="middle" font-family="Liberation Sans">0,6</text><rect x="808.0" y="318" width="2" height="4" fill="#000"/><text x="808.5" y="335" font-size="11" text-anchor="middle" font-family="Liberation Sans">0,65</text><rect x="870.5" y="318" width="2" height="4" fill="#000"/><text x="871.0" y="335" font-size="11" text-anchor="middle" font-family="Liberation Sans">0,7</text><rect x="933.0" y="318" width="2" height="4" fill="#000"/><text x="933.5" y="335" font-size="11" text-anchor="middle" font-family="Liberation Sans">0,75</text><rect x="995.5" y="318" width="2" height="4" fill="#000"/><text x="996.0" y="335" font-size="11" text-anchor="middle" font-family="Liberation Sans">0,8</text><rect x="1058.0" y="318" width="2" height="4" fill="#000"/><text x="1058.5" y="335" font-size="11" text-anchor="middle" font-family="Liberation Sans">0,85</text><rect x="1120.5" y="318" width="2" height="4" fill="#000"/><text x="1121.0" y="335" font-size="11" text-anchor="middle" font-family="Liberation Sans">0,9</text><text x="0" y="0" font-size="11.4" font-family="Liberation Sans" text-anchor="middle" transform="translate(78,216) rotate(-90)">Ток АРС ПК2, А</text><polyline points="103.0,313.2 1163.0,313.2" fill="none" stroke="#ecec6a" stroke-width="1.6" stroke-linejoin="round"/><polyline points="103.0,312.0 356.0,312.0 358.0,311.4 497.0,310.7 566.0,312.0 905.0,311.0 996.0,312.0" fill="none" stroke="#5ab0e8" stroke-width="1.4" stroke-linejoin="round"/><polyline points="216.0,311.0 356.0,310.5 358.0,312.5 497.0,311.5 557.0,311.0 566.0,311.0 905.0,310.5 908.0,313.0 996.0,312.0" fill="none" stroke="#1d5e8e" stroke-width="2" stroke-linejoin="round"/><polyline points="1000.0,310.4 1140.0,310.4" fill="none" stroke="#8a8098" stroke-width="1" stroke-linejoin="round"/><polyline points="103.0,311.0 115.0,309.5 150.0,310.0 170.0,310.5 185.0,309.5 205.0,311.0 212.0,312.0 216.0,308.6 260.0,307.5 300.0,306.5 330.0,305.5 356.0,303.6 358.0,313.0 495.0,313.0 497.0,306.4 557.0,304.6 560.0,313.0 563.0,313.0 566.0,308.6 778.0,308.6 780.0,307.1 825.0,306.5 845.0,304.3 903.0,303.5 906.0,313.0 990.0,310.0 996.0,313.0 1163.0,312.6" fill="none" stroke="#e89a28" stroke-width="2" stroke-linejoin="round"/><polyline points="103.2,288.0 106.0,252.0 108.0,250.0 111.0,247.7 114.0,246.0 117.0,243.9 120.0,243.0 123.0,240.8 126.0,238.0 129.0,240.0 131.0,312.0 133.0,268.0 134.0,266.0 137.2,265.2 140.5,266.1 143.8,265.8 147.0,265.2 150.2,266.0 153.5,265.2 156.8,265.9 160.0,266.0 165.0,270.0 169.0,310.0 173.0,280.0 176.7,275.2 180.3,271.3 184.0,268.0 187.0,270.0 190.0,313.0 192.0,248.0 195.0,243.9 198.0,240.0 201.0,242.0 208.0,276.0 212.0,306.0 215.0,236.0 218.0,228.0 221.3,227.3 224.7,224.7 228.0,224.0 232.0,221.5 236.0,220.0 239.0,218.5 242.0,217.3 245.0,214.9 248.0,212.8 251.0,212.1 254.0,208.7 257.0,208.4 260.0,206.0 263.0,204.1 266.0,202.4 269.0,200.8 272.0,199.7 275.0,199.1 278.0,196.4 281.0,195.6 284.0,194.0 287.0,192.5 290.0,190.3 293.0,188.8 296.0,186.2 299.0,184.5 302.0,183.0 305.0,182.1 308.0,180.0 311.0,177.4 314.0,174.7 317.0,172.7 320.0,169.9 323.0,167.1 326.0,165.5 329.0,162.9 332.0,160.0 335.2,156.3 338.4,153.7 341.6,150.4 344.8,147.9 348.0,144.0 351.0,140.9 354.0,137.0 356.0,144.0 358.0,300.0 358.0,313.5" fill="none" stroke="#28e028" stroke-width="2" stroke-linejoin="round"/><polyline points="497.0,312.0 498.0,204.0 501.1,201.0 504.3,199.7 507.4,195.6 510.6,193.6 513.7,191.6 516.9,187.9 520.0,186.0 523.3,184.6 526.7,182.5 530.0,182.3 533.3,181.1 536.7,179.5 540.0,178.0 543.0,174.7 546.0,170.0 549.0,166.7 552.0,164.0 555.0,167.4 558.0,170.0 560.0,220.0 563.0,313.0 566.0,260.0 569.5,259.2 573.0,258.1 576.5,256.9 580.0,256.0 583.3,256.4 586.7,256.5 590.0,255.5 593.3,255.6 596.7,254.4 600.0,255.0 603.2,255.1 606.3,254.6 609.5,255.0 612.6,254.3 615.8,253.1 618.9,252.9 622.1,253.1 625.2,251.7 628.4,252.2 631.5,251.3 634.7,250.9 637.8,250.5 641.0,251.0 644.0,251.2 647.0,249.8 650.0,249.7 653.0,249.7 656.0,250.2 659.0,248.5 662.0,248.9 665.0,248.8 668.0,249.1 671.0,248.7 674.0,248.5 677.0,247.2 680.0,247.1 683.0,247.0 686.2,246.6 689.3,247.4 692.5,247.4 695.6,245.8 698.8,245.6 701.9,245.6 705.1,245.4 708.2,245.7 711.4,245.8 714.5,245.0 717.7,244.4 720.8,245.0 724.0,245.0 727.0,243.9 730.0,243.4 733.0,243.2 736.0,241.9 739.0,240.7 742.0,240.1 745.0,239.0 748.2,238.6 751.4,236.8 754.7,237.6 757.9,236.6 761.1,236.1 764.3,235.2 767.6,233.8 770.8,233.0 774.0,232.5 777.1,230.5 780.2,230.1 783.4,227.8 786.5,226.5 789.6,225.4 792.8,224.0 795.9,223.0 799.0,222.0 802.2,219.9 805.4,218.4 808.7,217.4 811.9,215.9 815.1,215.1 818.3,213.1 821.6,213.3 824.8,211.5 828.0,210.0 831.0,206.4 834.0,203.6 837.0,200.7 840.0,197.8 843.0,194.3 846.0,192.6 849.0,189.0 852.2,184.9 855.4,178.9 858.6,174.0 861.8,168.3 865.0,164.0 868.1,161.0 871.2,159.1 874.4,156.6 877.5,155.3 880.6,151.8 883.8,149.3 886.9,148.6 890.0,145.5 893.0,142.4 896.0,138.6 899.0,136.2 902.0,133.0 904.5,141.0 908.6,313.0 910.7,224.0 914.1,218.6 917.5,215.1 920.9,211.4 924.2,206.7 927.6,201.9 931.0,197.0 934.2,195.1 937.5,193.8 940.8,191.9 944.0,191.0 947.2,191.9 950.4,191.9 953.6,192.7 956.8,192.3 960.0,193.0 963.2,187.9 966.5,184.4 969.8,180.1 973.0,174.6 976.0,170.6 979.0,165.9 982.0,161.2 985.0,156.0 989.0,158.0 993.5,232.5 995.6,313.0" fill="none" stroke="#28e028" stroke-width="2" stroke-linejoin="round"/><polyline points="358.0,312.0 360.0,308.0 362.0,244.0 365.5,243.4 369.0,241.5 372.5,241.0 376.0,240.0 379.0,239.0 382.0,237.7 385.0,236.9 388.0,236.6 391.0,235.8 394.0,235.8 397.0,235.6 400.0,234.0 403.1,232.8 406.2,232.6 409.2,231.6 412.3,230.5 415.4,228.4 418.5,227.0 421.5,226.0 424.6,224.8 427.7,223.8 430.8,223.5 433.8,222.9 436.9,221.7 440.0,220.0 443.1,218.7 446.2,217.8 449.2,216.8 452.3,214.3 455.4,214.1 458.5,213.4 461.5,211.9 464.6,210.6 467.7,208.9 470.8,207.1 473.8,207.0 476.9,204.9 480.0,204.0 483.5,202.5 487.0,200.8 490.5,197.8 494.0,196.0 496.0,200.0 497.0,313.0" fill="none" stroke="#ecec50" stroke-width="2" stroke-linejoin="round"/><polyline points="995.6,313.0 997.7,232.5 1001.8,230.5 1004.8,229.7 1007.8,230.1 1010.9,229.1 1013.9,227.5 1016.9,226.9 1019.9,226.3 1022.9,227.1 1025.9,226.3 1029.0,224.5 1032.0,225.2 1035.0,224.0 1038.1,223.9 1041.2,222.3 1044.2,220.7 1047.3,220.1 1050.4,218.3 1053.5,217.1 1056.6,217.8 1059.7,216.3 1062.8,215.0 1065.8,214.8 1068.9,212.9 1072.0,212.0 1075.1,211.4 1078.2,210.0 1081.4,207.5 1084.5,206.3 1087.6,205.1 1090.8,203.7 1093.9,203.0 1097.0,201.5 1100.1,199.3 1103.2,197.7 1106.4,195.4 1109.5,195.0 1112.6,192.2 1115.8,190.5 1118.9,189.0 1122.0,187.0 1126.0,186.7 1130.0,185.0 1134.2,176.4 1138.5,168.0 1141.6,167.3 1144.8,165.0 1147.9,163.6 1151.0,162.0 1154.3,161.4 1157.7,159.8 1161.0,160.0" fill="none" stroke="#4aa8e8" stroke-width="2" stroke-linejoin="round"/><polyline points="907.0,312.0 909.0,293.0 911.5,311.0" fill="none" stroke="#6a5ae0" stroke-width="1.3" stroke-linejoin="round"/><polyline points="996.0,312.0 997.5,300.0 1000.0,311.0" fill="none" stroke="#5a4ad0" stroke-width="1.3" stroke-linejoin="round"/><polyline points="183.5,311.0 184.5,305.0 185.5,311.0" fill="none" stroke="#6a5ae0" stroke-width="1.2" stroke-linejoin="round"/><polyline points="192.5,313.0 192.5,300.0" fill="none" stroke="#2a7a9a" stroke-width="1.0" stroke-linejoin="round"/><rect x="354" y="30" width="2" height="69" fill="#e8861e"/><rect x="357" y="99" width="2.5" height="218" fill="#e8861e"/></svg>
<div class="a" style="left:1225px;top:35px;width:13px;height:13px;background:#fff;border:1px solid;border-color:#777 #f4f4f4 #f4f4f4 #777;box-shadow:inset 1px 1px 0 #a8a8a8"></div>
<svg class="a" style="left:1225px;top:35px" width="12" height="12"><path d="M2.5 6 L5 9 L10 2.5" fill="none" stroke="#000" stroke-width="2"/></svg>
<div class="t" style="left:1242px;top:36px;font-size:11px;letter-spacing:-0.15px;color:#7b6cf0">АРС ПК2 75 Гц</div>
<div class="a" style="left:1225px;top:54px;width:13px;height:13px;background:#fff;border:1px solid;border-color:#777 #f4f4f4 #f4f4f4 #777;box-shadow:inset 1px 1px 0 #a8a8a8"></div>
<svg class="a" style="left:1225px;top:54px" width="12" height="12"><path d="M2.5 6 L5 9 L10 2.5" fill="none" stroke="#000" stroke-width="2"/></svg>
<div class="t" style="left:1242px;top:55px;font-size:11px;letter-spacing:-0.15px;color:#1c5f92">АРС ПК2 125 Гц</div>
<div class="a" style="left:1225px;top:73px;width:13px;height:13px;background:#fff;border:1px solid;border-color:#777 #f4f4f4 #f4f4f4 #777;box-shadow:inset 1px 1px 0 #a8a8a8"></div>
<svg class="a" style="left:1225px;top:73px" width="12" height="12"><path d="M2.5 6 L5 9 L10 2.5" fill="none" stroke="#000" stroke-width="2"/></svg>
<div class="t" style="left:1242px;top:74px;font-size:11px;letter-spacing:-0.15px;color:#58b0ea">АРС ПК2 175 Гц</div>
<div class="a" style="left:1225px;top:92px;width:13px;height:13px;background:#fff;border:1px solid;border-color:#777 #f4f4f4 #f4f4f4 #777;box-shadow:inset 1px 1px 0 #a8a8a8"></div>
<svg class="a" style="left:1225px;top:92px" width="12" height="12"><path d="M2.5 6 L5 9 L10 2.5" fill="none" stroke="#000" stroke-width="2"/></svg>
<div class="t" style="left:1242px;top:93px;font-size:11px;letter-spacing:-0.15px;color:#2ee02e">АРС ПК2 225 Гц</div>
<div class="a" style="left:1225px;top:111px;width:13px;height:13px;background:#fff;border:1px solid;border-color:#777 #f4f4f4 #f4f4f4 #777;box-shadow:inset 1px 1px 0 #a8a8a8"></div>
<svg class="a" style="left:1225px;top:111px" width="12" height="12"><path d="M2.5 6 L5 9 L10 2.5" fill="none" stroke="#000" stroke-width="2"/></svg>
<div class="t" style="left:1242px;top:112px;font-size:11px;letter-spacing:-0.15px;color:#ecec6a">АРС ПК2 275 Гц</div>
<div class="a" style="left:1225px;top:130px;width:13px;height:13px;background:#fff;border:1px solid;border-color:#777 #f4f4f4 #f4f4f4 #777;box-shadow:inset 1px 1px 0 #a8a8a8"></div>
<svg class="a" style="left:1225px;top:130px" width="12" height="12"><path d="M2.5 6 L5 9 L10 2.5" fill="none" stroke="#000" stroke-width="2"/></svg>
<div class="t" style="left:1242px;top:131px;font-size:11px;letter-spacing:-0.15px;color:#eca234">АРС ПК2 325 Гц</div>
<div class="a" style="left:1399px;top:24px;width:1px;height:334px;background:#d0d0d0"></div>
<div class="t" style="left:1343px;top:27px;font-size:12.5px;font-weight:bold;color:#5b4fd8">АРС ПК<u>2</u></div>
<div class="a" style="left:1350px;top:43px;width:40px;height:8px;border:1px solid #4a4a4a;border-radius:4px;background:linear-gradient(#fafafa,#d0d0d0)"></div><svg class="a" style="left:1365px;top:45px" width="10" height="5"><path d="M0 0 L10 0 L5 5 Z" fill="#505050"/></svg>
<div class="a" style="left:1350px;top:210px;width:40px;height:8px;border:1px solid #4a4a4a;border-radius:4px;background:linear-gradient(#fafafa,#d0d0d0)"></div><svg class="a" style="left:1365px;top:212px" width="10" height="5"><path d="M0 0 L10 0 L5 5 Z" fill="#505050"/></svg>
<div class="a" style="left:1368px;top:80px;width:4px;height:82px;background:#e7e7e7;border:1px solid #d2d2d2"></div><div class="a" style="left:1350px;top:74px;width:4px;height:1px;background:#aaa"></div><div class="a" style="left:1386px;top:74px;width:4px;height:1px;background:#aaa"></div><div class="a" style="left:1350px;top:154px;width:4px;height:1px;background:#aaa"></div><div class="a" style="left:1386px;top:154px;width:4px;height:1px;background:#aaa"></div><div class="a" style="left:1355px;top:67px;width:29px;height:14px;background:linear-gradient(#f2f2f2,#e2e2e2);border:1px solid #acacac"></div>
<div class="a" style="left:1368px;top:247px;width:4px;height:81px;background:#e7e7e7;border:1px solid #d2d2d2"></div><div class="a" style="left:1350px;top:241px;width:4px;height:1px;background:#aaa"></div><div class="a" style="left:1386px;top:241px;width:4px;height:1px;background:#aaa"></div><div class="a" style="left:1350px;top:321px;width:4px;height:1px;background:#aaa"></div><div class="a" style="left:1386px;top:321px;width:4px;height:1px;background:#aaa"></div><div class="a" style="left:1355px;top:234px;width:29px;height:14px;background:linear-gradient(#f2f2f2,#e2e2e2);border:1px solid #acacac"></div>
<div class="a" style="left:1350px;top:183px;width:40px;height:1px;background:#444"></div><div class="a" style="left:1354px;top:181px;width:5px;height:5px;background:#444"></div><div class="a" style="left:1367px;top:181px;width:5px;height:5px;background:#444"></div><div class="a" style="left:1380px;top:181px;width:5px;height:5px;background:#444"></div>
<div class="a" style="left:1350px;top:350px;width:40px;height:1px;background:#444"></div><div class="a" style="left:1354px;top:348px;width:5px;height:5px;background:#444"></div><div class="a" style="left:1367px;top:348px;width:5px;height:5px;background:#444"></div><div class="a" style="left:1380px;top:348px;width:5px;height:5px;background:#444"></div>
<div class="t" style="left:1363px;top:194px;font-size:11px;color:#1a1aa0;font-weight:bold">---</div>
<div class="a" style="left:44px;top:425px;width:72px;height:20px;background:linear-gradient(#f2f2f2,#e6e6e6);border:1px solid #acacac"></div>
<div class="t" style="left:47px;width:80px;text-align:center;top:431px;font-size:11px">Маршрут</div>
<div class="a" style="left:198px;top:425px;width:117px;height:20px;background:linear-gradient(#f2f2f2,#e6e6e6);border:1px solid #acacac"></div>
<div class="t" style="left:200.5px;width:116px;text-align:center;top:431px;font-size:11px">Рельсовые цепи</div>
<div class="a" style="left:314px;top:425px;width:136px;height:20px;background:linear-gradient(#f2f2f2,#e6e6e6);border:1px solid #acacac"></div>
<div class="t" style="left:316.5px;width:135px;text-align:center;top:431px;font-size:11px">Обнаруж. объекты</div>
<div class="a" style="left:449px;top:425px;width:81px;height:20px;background:linear-gradient(#f2f2f2,#e6e6e6);border:1px solid #acacac"></div>
<div class="t" style="left:451.5px;width:80px;text-align:center;top:431px;font-size:11px">Поездки</div>
<div class="a" style="left:529px;top:425px;width:85px;height:20px;background:linear-gradient(#f2f2f2,#e6e6e6);border:1px solid #acacac"></div>
<div class="t" style="left:531.5px;width:84px;text-align:center;top:431px;font-size:11px">Протокол</div>
<div class="a" style="left:613px;top:425px;width:71px;height:20px;background:linear-gradient(#f2f2f2,#e6e6e6);border:1px solid #acacac"></div>
<div class="t" style="left:615.5px;width:70px;text-align:center;top:431px;font-size:11px">Задачи</div>
<div class="a" style="left:115px;top:423px;width:84px;height:23px;background:#fff;border:1px solid #acacac;border-bottom:none"></div>
<div class="t" style="left:118px;width:84px;text-align:center;top:428px;font-size:11px">Сигналы</div>
<div class="a" style="left:220px;top:448px;width:851px;height:274px;background:#f0f0f0"></div><div class="a" style="left:1071px;top:448px;width:1px;height:274px;background:#a0a0a0"></div><div class="a" style="left:1072px;top:448px;width:24px;height:274px;background:#f0f0f0"></div><div class="a" style="left:1096px;top:448px;width:1px;height:274px;background:#a0a0a0"></div><div class="a" style="left:187px;top:448px;width:33px;height:274px;background:#f0f0f0;border-left:1px solid #b4b4b4;border-right:1px solid #fff"></div><div class="a" style="left:47px;top:450px;width:140px;height:269px;background:#a9cbf1"></div><div class="a" style="left:47px;top:450px;width:35px;height:134px;background:#7ea5b8;border:1px solid #6d98ad"></div><div class="t" style="left:52px;top:511px;font-size:11px">ПК1</div><div class="a" style="left:47px;top:585px;width:35px;height:134px;background:#fdf9ee;border:1px solid #f1e6c6"></div><div class="t" style="left:52px;top:646px;font-size:11px">ПК2</div><div class="a" style="left:84px;top:450px;width:31px;height:133px;background:#a9cbf1;border:1px solid #8ab6ea"></div><div class="t" style="left:88px;top:510px;font-size:11px">Вх.</div><div class="a" style="left:84px;top:586px;width:31px;height:133px;background:#a9cbf1;border:1px solid #8ab6ea"></div><div class="t" style="left:88px;top:646px;font-size:11px">F</div><div class="a" style="left:115px;top:450px;width:4px;height:269px;background:#a9cbf1"></div><div class="a" style="left:119px;top:450px;width:31px;height:36px;background:#a9cbf1;border:1px solid #8ab6ea"></div><div class="t" style="left:123px;top:462px;font-size:11px">50</div><div class="a" style="left:119px;top:488px;width:31px;height:36px;background:#a9cbf1;border:1px solid #8ab6ea"></div><div class="t" style="left:123px;top:500px;font-size:11px">75</div><div class="a" style="left:119px;top:526px;width:31px;height:36px;background:#a9cbf1;border:1px solid #8ab6ea"></div><div class="t" style="left:123px;top:538px;font-size:11px">125</div><div class="a" style="left:119px;top:564px;width:31px;height:36px;background:#a9cbf1;border:1px solid #8ab6ea"></div><div class="t" style="left:123px;top:576px;font-size:11px">175</div><div class="a" style="left:117px;top:601px;width:35px;height:38px;background:#fdf9ee;border:1px solid #f1e6c6"></div><div class="t" style="left:123px;top:614px;font-size:11px">225</div><div class="a" style="left:119px;top:640px;width:31px;height:36px;background:#a9cbf1;border:1px solid #8ab6ea"></div><div class="t" style="left:123px;top:652px;font-size:11px">275</div><div class="a" style="left:119px;top:678px;width:31px;height:36px;background:#a9cbf1;border:1px solid #8ab6ea"></div><div class="t" style="left:123px;top:690px;font-size:11px">325</div><div class="a" style="left:150px;top:450px;width:4px;height:269px;background:#a9cbf1"></div><div class="a" style="left:154px;top:450px;width:31px;height:51px;background:#a9cbf1;border:1px solid #8ab6ea"></div><div class="t" style="left:157px;top:469px;font-size:11px">425</div><div class="a" style="left:154px;top:504px;width:31px;height:51px;background:#a9cbf1;border:1px solid #8ab6ea"></div><div class="t" style="left:157px;top:523px;font-size:11px">475</div><div class="a" style="left:154px;top:558px;width:31px;height:51px;background:#a9cbf1;border:1px solid #8ab6ea"></div><div class="t" style="left:157px;top:577px;font-size:11px">580</div><div class="a" style="left:154px;top:612px;width:31px;height:51px;background:#a9cbf1;border:1px solid #8ab6ea"></div><div class="t" style="left:157px;top:631px;font-size:11px">725</div><div class="a" style="left:154px;top:666px;width:31px;height:51px;background:#a9cbf1;border:1px solid #8ab6ea"></div><div class="t" style="left:157px;top:685px;font-size:11px">775</div><div class="a" style="left:119px;top:716px;width:31px;height:3px;background:#f0f0f0"></div><div class="a" style="left:188px;top:449px;width:31px;height:21px;background:#bcd7f4;border:1px solid #7fb0e6"></div><div class="a" style="left:188px;top:471px;width:31px;height:21px;background:#bcd7f4;border:1px solid #7fb0e6"></div><svg class="a" style="left:198px;top:453px" width="12" height="14"><rect x="0.5" y="0.5" width="11" height="13" fill="#f4fff0" stroke="#7a9a7a"/><path d="M2.5 3.5 L9 3.5 M2.5 6 L9 6 M2.5 8.5 L7 8.5 M2.5 11 L8 11" stroke="#3a9a3a" stroke-width="1"/></svg><svg class="a" style="left:196px;top:474px" width="16" height="16" viewBox="0 0 16 16"><g fill="#1a8a8a"><path d="M8 0 L11 3 L5 3 Z"/><path d="M8 16 L11 13 L5 13 Z"/><path d="M0 8 L3 5 L3 11 Z"/><path d="M16 8 L13 5 L13 11 Z"/><rect x="7" y="3" width="2" height="3"/><rect x="7" y="10" width="2" height="3"/><rect x="3" y="7" width="3" height="2"/><rect x="10" y="7" width="3" height="2"/></g></svg><div class="t" style="left:197px;top:498px;font-size:12px;font-weight:bold;color:#7a7a7a">Lg</div><div class="a" style="left:197px;top:535px;width:4px;height:180px;background:#e6e6e6;border:1px solid #d6d6d6"></div><svg class="a" style="left:190px;top:521px" width="20" height="13"><path d="M0.5 0.5 L12 0.5 L18 6 L12 11.5 L0.5 11.5 Z" fill="#e8e8e8" stroke="#b6b6b6"/></svg><div class="t" style="left:1077px;top:451px;font-size:11px">ΔT</div><div class="a" style="left:1081px;top:473px;width:4px;height:243px;background:#e6e6e6;border:1px solid #d6d6d6"></div><svg class="a" style="left:1075px;top:555px" width="20" height="13"><path d="M0.5 0.5 L12 0.5 L18 6 L12 11.5 L0.5 11.5 Z" fill="#ececec" stroke="#b6b6b6"/></svg>
<div class="a" style="left:220px;top:730px;width:851px;height:274px;background:#f0f0f0"></div><div class="a" style="left:1071px;top:730px;width:1px;height:274px;background:#a0a0a0"></div><div class="a" style="left:1072px;top:730px;width:24px;height:274px;background:#f0f0f0"></div><div class="a" style="left:1096px;top:730px;width:1px;height:274px;background:#a0a0a0"></div><div class="a" style="left:187px;top:730px;width:33px;height:274px;background:#f0f0f0;border-left:1px solid #b4b4b4;border-right:1px solid #fff"></div><div class="a" style="left:47px;top:732px;width:140px;height:269px;background:#a9cbf1"></div><div class="a" style="left:47px;top:732px;width:35px;height:134px;background:#7ea5b8;border:1px solid #6d98ad"></div><div class="t" style="left:52px;top:793px;font-size:11px">ПК1</div><div class="a" style="left:47px;top:867px;width:35px;height:134px;background:#fdf9ee;border:1px solid #f1e6c6"></div><div class="t" style="left:52px;top:928px;font-size:11px">ПК2</div><div class="a" style="left:84px;top:732px;width:31px;height:133px;background:#a9cbf1;border:1px solid #8ab6ea"></div><div class="t" style="left:88px;top:792px;font-size:11px">Вх.</div><div class="a" style="left:84px;top:868px;width:31px;height:133px;background:#a9cbf1;border:1px solid #8ab6ea"></div><div class="t" style="left:88px;top:928px;font-size:11px">F</div><div class="a" style="left:115px;top:732px;width:4px;height:269px;background:#a9cbf1"></div><div class="a" style="left:119px;top:732px;width:31px;height:36px;background:#a9cbf1;border:1px solid #8ab6ea"></div><div class="t" style="left:123px;top:744px;font-size:11px">50</div><div class="a" style="left:119px;top:770px;width:31px;height:36px;background:#a9cbf1;border:1px solid #8ab6ea"></div><div class="t" style="left:123px;top:782px;font-size:11px">75</div><div class="a" style="left:119px;top:808px;width:31px;height:36px;background:#a9cbf1;border:1px solid #8ab6ea"></div><div class="t" style="left:123px;top:820px;font-size:11px">125</div><div class="a" style="left:119px;top:846px;width:31px;height:36px;background:#a9cbf1;border:1px solid #8ab6ea"></div><div class="t" style="left:123px;top:858px;font-size:11px">175</div><div class="a" style="left:119px;top:884px;width:31px;height:36px;background:#a9cbf1;border:1px solid #8ab6ea"></div><div class="t" style="left:123px;top:896px;font-size:11px">225</div><div class="a" style="left:117px;top:921px;width:35px;height:38px;background:#fdf9ee;border:1px solid #f1e6c6"></div><div class="t" style="left:123px;top:934px;font-size:11px">275</div><div class="a" style="left:119px;top:960px;width:31px;height:36px;background:#a9cbf1;border:1px solid #8ab6ea"></div><div class="t" style="left:123px;top:972px;font-size:11px">325</div><div class="a" style="left:150px;top:732px;width:4px;height:269px;background:#a9cbf1"></div><div class="a" style="left:154px;top:732px;width:31px;height:51px;background:#a9cbf1;border:1px solid #8ab6ea"></div><div class="t" style="left:157px;top:751px;font-size:11px">425</div><div class="a" style="left:154px;top:786px;width:31px;height:51px;background:#a9cbf1;border:1px solid #8ab6ea"></div><div class="t" style="left:157px;top:805px;font-size:11px">475</div><div class="a" style="left:154px;top:840px;width:31px;height:51px;background:#a9cbf1;border:1px solid #8ab6ea"></div><div class="t" style="left:157px;top:859px;font-size:11px">580</div><div class="a" style="left:154px;top:894px;width:31px;height:51px;background:#a9cbf1;border:1px solid #8ab6ea"></div><div class="t" style="left:157px;top:913px;font-size:11px">725</div><div class="a" style="left:154px;top:948px;width:31px;height:51px;background:#a9cbf1;border:1px solid #8ab6ea"></div><div class="t" style="left:157px;top:967px;font-size:11px">775</div><div class="a" style="left:119px;top:998px;width:31px;height:3px;background:#f0f0f0"></div><div class="a" style="left:188px;top:731px;width:31px;height:21px;background:#bcd7f4;border:1px solid #7fb0e6"></div><div class="a" style="left:188px;top:753px;width:31px;height:21px;background:#bcd7f4;border:1px solid #7fb0e6"></div><svg class="a" style="left:198px;top:735px" width="12" height="14"><rect x="0.5" y="0.5" width="11" height="13" fill="#f4fff0" stroke="#7a9a7a"/><path d="M2.5 3.5 L9 3.5 M2.5 6 L9 6 M2.5 8.5 L7 8.5 M2.5 11 L8 11" stroke="#3a9a3a" stroke-width="1"/></svg><svg class="a" style="left:196px;top:756px" width="16" height="16" viewBox="0 0 16 16"><g fill="#1a8a8a"><path d="M8 0 L11 3 L5 3 Z"/><path d="M8 16 L11 13 L5 13 Z"/><path d="M0 8 L3 5 L3 11 Z"/><path d="M16 8 L13 5 L13 11 Z"/><rect x="7" y="3" width="2" height="3"/><rect x="7" y="10" width="2" height="3"/><rect x="3" y="7" width="3" height="2"/><rect x="10" y="7" width="3" height="2"/></g></svg><div class="t" style="left:197px;top:780px;font-size:12px;font-weight:bold;color:#7a7a7a">Lg</div><div class="a" style="left:197px;top:817px;width:4px;height:180px;background:#e6e6e6;border:1px solid #d6d6d6"></div><svg class="a" style="left:190px;top:803px" width="20" height="13"><path d="M0.5 0.5 L12 0.5 L18 6 L12 11.5 L0.5 11.5 Z" fill="#e8e8e8" stroke="#b6b6b6"/></svg><div class="t" style="left:1077px;top:733px;font-size:11px">ΔT</div><div class="a" style="left:1081px;top:755px;width:4px;height:243px;background:#e6e6e6;border:1px solid #d6d6d6"></div><svg class="a" style="left:1075px;top:837px" width="20" height="13"><path d="M0.5 0.5 L12 0.5 L18 6 L12 11.5 L0.5 11.5 Z" fill="#ececec" stroke="#b6b6b6"/></svg>
<svg class="a" style="left:0;top:0" width="1400" height="1014" viewBox="0 0 1400 1014"><text x="646" y="472" font-size="11.5" text-anchor="middle" fill="#1c1c70" font-family="Liberation Sans">225 Гц ПК2</text><text x="250" y="494" font-size="10.5" font-family="Liberation Sans">A</text><text x="1028" y="709" font-size="10" font-family="Liberation Sans">мс</text><line x1="272.4" y1="518.5" x2="1043" y2="518.5" stroke="#7c7c7c" stroke-width="1" stroke-dasharray="3.5 2.5"/><line x1="272.4" y1="553.5" x2="1043" y2="553.5" stroke="#7c7c7c" stroke-width="1" stroke-dasharray="3.5 2.5"/><line x1="272.4" y1="623.5" x2="1043" y2="623.5" stroke="#7c7c7c" stroke-width="1" stroke-dasharray="3.5 2.5"/><line x1="272.4" y1="658.5" x2="1043" y2="658.5" stroke="#7c7c7c" stroke-width="1" stroke-dasharray="3.5 2.5"/><line x1="277.5" y1="504" x2="277.5" y2="673" stroke="#7c7c7c" stroke-width="1" stroke-dasharray="3.5 2.5"/><line x1="320.5" y1="504" x2="320.5" y2="673" stroke="#7c7c7c" stroke-width="1" stroke-dasharray="3.5 2.5"/><line x1="363.5" y1="504" x2="363.5" y2="673" stroke="#7c7c7c" stroke-width="1" stroke-dasharray="3.5 2.5"/><line x1="405.5" y1="504" x2="405.5" y2="673" stroke="#7c7c7c" stroke-width="1" stroke-dasharray="3.5 2.5"/><line x1="448.5" y1="504" x2="448.5" y2="673" stroke="#7c7c7c" stroke-width="1" stroke-dasharray="3.5 2.5"/><line x1="491.5" y1="504" x2="491.5" y2="673" stroke="#7c7c7c" stroke-width="1" stroke-dasharray="3.5 2.5"/><line x1="534.5" y1="504" x2="534.5" y2="673" stroke="#7c7c7c" stroke-width="1" stroke-dasharray="3.5 2.5"/><line x1="577.5" y1="504" x2="577.5" y2="673" stroke="#7c7c7c" stroke-width="1" stroke-dasharray="3.5 2.5"/><line x1="619.5" y1="504" x2="619.5" y2="673" stroke="#7c7c7c" stroke-width="1" stroke-dasharray="3.5 2.5"/><line x1="662.5" y1="504" x2="662.5" y2="673" stroke="#7c7c7c" stroke-width="1" stroke-dasharray="3.5 2.5"/><line x1="705.5" y1="504" x2="705.5" y2="673" stroke="#7c7c7c" stroke-width="1" stroke-dasharray="3.5 2.5"/><line x1="748.5" y1="504" x2="748.5" y2="673" stroke="#7c7c7c" stroke-width="1" stroke-dasharray="3.5 2.5"/><line x1="791.5" y1="504" x2="791.5" y2="673" stroke="#7c7c7c" stroke-width="1" stroke-dasharray="3.5 2.5"/><line x1="834.5" y1="504" x2="834.5" y2="673" stroke="#7c7c7c" stroke-width="1" stroke-dasharray="3.5 2.5"/><line x1="876.5" y1="504" x2="876.5" y2="673" stroke="#7c7c7c" stroke-width="1" stroke-dasharray="3.5 2.5"/><line x1="919.5" y1="504" x2="919.5" y2="673" stroke="#7c7c7c" stroke-width="1" stroke-dasharray="3.5 2.5"/><line x1="962.5" y1="504" x2="962.5" y2="673" stroke="#7c7c7c" stroke-width="1" stroke-dasharray="3.5 2.5"/><line x1="1005.5" y1="504" x2="1005.5" y2="673" stroke="#7c7c7c" stroke-width="1" stroke-dasharray="3.5 2.5"/><path d="M277.4 587.3 L277.9 587.3 L278.4 586.7 L278.9 586.1 L279.4 585.5 L279.9 584.8 L280.4 584.1 L280.9 583.3 L281.4 582.4 L281.9 581.4 L282.4 580.4 L282.9 579.3 L283.4 578.2 L283.9 576.8 L284.4 575.4 L284.9 573.7 L285.4 571.2 L285.9 568.3 L286.4 564.8 L286.9 561.0 L287.4 557.4 L287.9 554.1 L288.4 550.8 L288.9 547.6 L289.4 544.6 L289.9 541.7 L290.4 538.8 L290.9 535.8 L291.4 532.5 L291.9 528.9 L292.4 525.2 L292.9 521.8 L293.4 519.0 L293.9 516.8 L294.4 514.9 L294.9 513.3 L295.4 512.1 L295.9 511.1 L296.4 510.5 L296.9 509.9 L297.4 509.6 L297.9 509.3 L298.4 508.7 L298.9 508.1 L299.4 507.4 L299.9 506.7 L300.4 506.2 L300.9 505.7 L301.4 505.7 L301.9 505.8 L302.4 506.1 L302.9 506.5 L303.4 506.9 L303.9 507.1 L304.4 507.0 L304.9 506.9 L305.4 506.5 L305.9 506.1 L306.4 505.8 L306.9 505.5 L307.4 505.4 L307.9 505.6 L308.4 505.9 L308.9 506.3 L309.4 506.6 L309.9 506.9 L310.4 507.1 L310.9 507.0 L311.4 506.7 L311.9 506.4 L312.4 506.0 L312.9 505.6 L313.4 505.4 L313.9 505.5 L314.4 505.8 L314.9 506.1 L315.4 506.4 L315.9 506.8 L316.4 507.0 L316.9 507.2 L317.4 507.0 L317.9 506.7 L318.4 506.3 L318.9 505.9 L319.4 505.6 L319.9 505.6 L320.4 505.6 L320.9 505.9 L321.4 506.2 L321.9 506.7 L322.4 507.0 L322.9 507.1 L323.4 507.2 L323.9 507.0 L324.4 506.6 L324.9 506.2 L325.4 505.9 L325.9 505.6 L326.4 505.6 L326.9 505.8 L327.4 506.1 L327.9 506.6 L328.4 506.9 L328.9 507.1 L329.4 507.3 L329.9 507.2 L330.4 506.9 L330.9 506.5 L331.4 506.1 L331.9 505.9 L332.4 505.7 L332.9 505.8 L333.4 506.0 L333.9 506.3 L334.4 506.7 L334.9 507.1 L335.4 507.4 L335.9 507.4 L336.4 507.2 L336.9 506.9 L337.4 506.5 L337.9 506.2 L338.4 505.9 L338.9 505.8 L339.4 505.9 L339.9 506.2 L340.4 506.7 L340.9 507.0 L341.4 507.3 L341.9 507.5 L342.4 507.4 L342.9 507.2 L343.4 506.8 L343.9 506.5 L344.4 506.1 L344.9 506.0 L345.4 506.1 L345.9 506.2 L346.4 506.6 L346.9 507.0 L347.4 507.3 L347.9 507.6 L348.4 507.7 L348.9 507.5 L349.4 507.2 L349.9 506.9 L350.4 506.5 L350.9 506.2 L351.4 506.2 L351.9 506.3 L352.4 506.5 L352.9 506.9 L353.4 507.3 L353.9 507.7 L354.4 507.8 L354.9 507.9 L355.4 507.7 L355.9 507.3 L356.4 506.9 L356.9 506.7 L357.4 506.4 L357.9 506.4 L358.4 506.5 L358.9 506.9 L359.4 507.3 L359.9 507.7 L360.4 508.0 L360.9 508.1 L361.4 507.9 L361.9 507.7 L362.4 507.4 L362.9 507.1 L363.4 506.7 L363.9 506.7 L364.4 506.7 L364.9 507.0 L365.4 507.4 L365.9 507.8 L366.4 508.2 L366.9 508.4 L367.4 508.6 L367.9 508.4 L368.4 508.2 L368.9 507.9 L369.4 507.6 L369.9 507.4 L370.4 507.5 L370.9 507.7 L371.4 508.0 L371.9 508.5 L372.4 508.9 L372.9 509.3 L373.4 509.5 L373.9 509.6 L374.4 509.4 L374.9 509.1 L375.4 508.8 L375.9 508.6 L376.4 508.5 L376.9 508.6 L377.4 508.8 L377.9 509.3 L378.4 509.8 L378.9 510.1 L379.4 510.4 L379.9 510.5 L380.4 510.5 L380.9 510.3 L381.4 509.9 L381.9 509.5 L382.4 509.4 L382.9 509.3 L383.4 509.5 L383.9 509.7 L384.4 510.2 L384.9 510.6 L385.4 510.9 L385.9 511.2 L386.4 511.1 L386.9 511.0 L387.4 510.6 L387.9 510.3 L388.4 510.1 L388.9 509.8 L389.4 509.9 L389.9 510.1 L390.4 510.5 L390.9 510.8 L391.4 511.2 L391.9 511.5 L392.4 511.7 L392.9 511.6 L393.4 511.5 L393.9 511.1 L394.4 510.7 L394.9 510.5 L395.4 510.3 L395.9 510.4 L396.4 510.7 L396.9 511.2 L397.4 511.6 L397.9 512.0 L398.4 512.2 L398.9 512.3 L399.4 512.2 L399.9 511.8 L400.4 511.5 L400.9 511.2 L401.4 511.0 L401.9 511.0 L402.4 511.2 L402.9 511.5 L403.4 512.0 L403.9 512.4 L404.4 512.8 L404.9 513.0 L405.4 513.0 L405.9 512.8 L406.4 512.5 L406.9 512.2 L407.4 511.9 L407.9 511.9 L408.4 511.9 L408.9 512.2 L409.4 512.7 L409.9 513.2 L410.4 513.6 L410.9 513.9 L411.4 514.1 L411.9 514.1 L412.4 513.8 L412.9 513.7 L413.4 513.3 L413.9 513.3 L414.4 513.3 L414.9 513.4 L415.4 513.8 L415.9 514.3 L416.4 514.8 L416.9 515.3 L417.4 515.5 L417.9 515.6 L418.4 515.7 L418.9 515.4 L419.4 515.2 L419.9 515.0 L420.4 514.9 L420.9 515.0 L421.4 515.4 L421.9 515.9 L422.4 516.4 L422.9 516.8 L423.4 517.3 L423.9 517.6 L424.4 517.7 L424.9 517.5 L425.4 517.3 L425.9 517.1 L426.4 516.9 L426.9 517.0 L427.4 517.2 L427.9 517.6 L428.4 518.1 L428.9 518.7 L429.4 519.3 L429.9 519.6 L430.4 519.9 L430.9 519.9 L431.4 519.8 L431.9 519.6 L432.4 519.4 L432.9 519.4 L433.4 519.6 L433.9 520.0 L434.4 520.6 L434.9 521.1 L435.4 521.8 L435.9 522.4 L436.4 522.8 L436.9 523.0 L437.4 523.0 L437.9 522.9 L438.4 522.8 L438.9 522.7 L439.4 522.9 L439.9 523.2 L440.4 523.7 L440.9 524.4 L441.4 525.1 L441.9 525.8 L442.4 526.3 L442.9 526.7 L443.4 526.8 L443.9 526.9 L444.4 526.9 L444.9 526.8 L445.4 526.9 L445.9 527.1 L446.4 527.5 L446.9 528.2 L447.4 528.9 L447.9 529.5 L448.4 530.2 L448.9 530.7 L449.4 531.1 L449.9 531.1 L450.4 531.2 L450.9 531.1 L451.4 531.2 L451.9 531.3 L452.4 531.7 L452.9 532.3 L453.4 533.0 L453.9 533.8 L454.4 534.5 L454.9 535.2 L455.4 535.6 L455.9 535.9 L456.4 536.1 L456.9 536.1 L457.4 536.2 L457.9 536.3 L458.4 536.5 L458.9 537.0 L459.4 537.8 L459.9 538.5 L460.4 539.3 L460.9 540.1 L461.4 540.8 L461.9 541.2 L462.4 541.5 L462.9 541.6 L463.4 541.7 L463.9 541.8 L464.4 542.1 L464.9 542.6 L465.4 543.2 L465.9 544.0 L466.4 545.0 L466.9 545.9 L467.4 546.7 L467.9 547.4 L468.4 548.0 L468.9 548.3 L469.4 548.5 L469.9 548.6 L470.4 548.8 L470.9 549.2 L471.4 549.8 L471.9 550.5 L472.4 551.4 L472.9 552.3 L473.4 553.2 L473.9 554.0 L474.4 554.4 L474.9 554.8 L475.4 555.0 L475.9 555.0 L476.4 555.1 L476.9 555.3 L477.4 555.7 L477.9 556.3 L478.4 556.9 L478.9 557.8 L479.4 558.5 L479.9 559.3 L480.4 560.0 L480.9 560.4 L481.4 560.6 L481.9 560.7 L482.4 560.8 L482.9 560.8 L483.4 561.1 L483.9 561.5 L484.4 562.0 L484.9 562.8 L485.4 563.6 L485.9 564.3 L486.4 565.0 L486.9 565.5 L487.4 565.8 L487.9 565.9 L488.4 565.8 L488.9 565.8 L489.4 565.9 L489.9 566.1 L490.4 566.6 L490.9 567.0 L491.4 567.8 L491.9 568.5 L492.4 569.1 L492.9 569.7 L493.4 569.9 L493.9 570.1 L494.4 570.0 L494.9 570.0 L495.4 569.9 L495.9 569.9 L496.4 570.0 L496.9 570.5 L497.4 571.1 L497.9 571.6 L498.4 572.4 L498.9 572.9 L499.4 573.3 L499.9 573.5 L500.4 573.5 L500.9 573.4 L501.4 573.3 L501.9 573.1 L502.4 573.2 L502.9 573.4 L503.4 573.8 L503.9 574.4 L504.4 575.0 L504.9 575.7 L505.4 576.1 L505.9 576.3 L506.4 576.4 L506.9 576.3 L507.4 576.1 L507.9 575.9 L508.4 575.8 L508.9 576.0 L509.4 576.2 L509.9 576.6 L510.4 577.2 L510.9 577.7 L511.4 578.3 L511.9 578.6 L512.4 578.8 L512.9 578.6 L513.4 578.5 L513.9 578.2 L514.4 578.0 L514.9 578.0 L515.4 578.0 L515.9 578.4 L516.4 578.8 L516.9 579.4 L517.4 579.9 L517.9 580.2 L518.4 580.4 L518.9 580.5 L519.4 580.3 L519.9 580.0 L520.4 579.7 L520.9 579.5 L521.4 579.5 L521.9 579.7 L522.4 580.0 L522.9 580.5 L523.4 581.0 L523.9 581.5 L524.4 581.8 L524.9 581.9 L525.4 581.7 L525.9 580.5 L526.4 580.6 L526.9 580.7 L527.4 580.8 L527.9 580.8 L528.4 581.0 L528.9 581.0 L529.4 581.1 L529.9 581.2 L530.4 581.3 L530.9 581.4 L531.4 581.5 L531.9 581.5 L532.4 581.6 L532.9 581.6 L533.4 581.7 L533.9 581.8 L534.4 581.8 L534.9 581.9 L535.4 582.0 L535.9 582.1 L536.4 582.1 L536.9 582.2 L537.4 582.2 L537.9 582.3 L538.4 582.4 L538.9 582.4 L539.4 582.5 L539.9 582.5 L540.4 582.6 L540.9 582.6 L541.4 582.7 L541.9 582.8 L542.4 582.8 L542.9 582.9 L543.4 582.9 L543.9 583.0 L544.4 583.0 L544.9 583.1 L545.4 583.2 L545.9 583.2 L546.4 583.3 L546.9 583.3 L547.4 583.4 L547.9 583.4 L548.4 583.5 L548.9 583.5 L549.4 583.6 L549.9 583.6 L550.4 583.7 L550.9 583.7 L551.4 583.8 L551.9 583.8 L552.4 583.9 L552.9 583.9 L553.4 584.0 L553.9 584.0 L554.4 584.1 L554.9 584.1 L555.4 584.2 L555.9 584.2 L556.4 584.3 L556.9 584.3 L557.4 584.3 L557.9 584.4 L558.4 584.4 L558.9 584.5 L559.4 584.5 L559.9 584.6 L560.4 584.6 L560.9 584.6 L561.4 584.7 L561.9 584.7 L562.4 584.7 L562.9 584.8 L563.4 584.8 L563.9 584.9 L564.4 584.9 L564.9 584.9 L565.4 585.0 L565.9 585.0 L566.4 585.0 L566.9 585.1 L567.4 585.1 L567.9 585.1 L568.4 585.2 L568.9 585.2 L569.4 585.2 L569.9 585.3 L570.4 585.3 L570.9 585.3 L571.4 585.3 L571.9 585.4 L572.4 585.4 L572.9 585.4 L573.4 585.4 L573.9 585.5 L574.4 585.5 L574.9 585.5 L575.4 585.5 L575.9 585.6 L576.4 585.6 L576.9 585.6 L577.4 585.6 L577.9 585.6 L578.4 585.6 L578.9 585.7 L579.4 585.7 L579.9 585.7 L580.4 585.7 L580.9 585.7 L581.4 585.8 L581.9 585.8 L582.4 585.8 L582.9 585.8 L583.4 585.8 L583.9 585.8 L584.4 585.9 L584.9 585.9 L585.4 585.9 L585.9 585.9 L586.4 585.9 L586.9 585.9 L587.4 585.9 L587.9 586.0 L588.4 586.0 L588.9 586.0 L589.4 586.0 L589.9 586.0 L590.4 586.0 L590.9 586.0 L591.4 586.0 L591.9 586.1 L592.4 586.1 L592.9 586.1 L593.4 586.1 L593.9 586.1 L594.4 586.1 L594.9 586.2 L595.4 586.2 L595.9 586.2 L596.4 586.2 L596.9 586.2 L597.4 586.2 L597.9 586.2 L598.4 586.3 L598.9 586.3 L599.4 586.3 L599.9 586.3 L600.4 586.3 L600.9 586.3 L601.4 586.3 L601.9 586.3 L602.4 586.3 L602.9 586.4 L603.4 586.4 L603.9 586.4 L604.4 586.4 L604.9 586.4 L605.4 586.4 L605.9 586.4 L606.4 586.5 L606.9 586.5 L607.4 586.5 L607.9 586.5 L608.4 586.5 L608.9 586.5 L609.4 586.5 L609.9 586.5 L610.4 586.5 L610.9 586.6 L611.4 586.6 L611.9 586.6 L612.4 586.6 L612.9 586.6 L613.4 586.6 L613.9 586.6 L614.4 586.6 L614.9 586.6 L615.4 586.6 L615.9 586.7 L616.4 586.7 L616.9 586.7 L617.4 586.7 L617.9 586.7 L618.4 586.7 L618.9 586.7 L619.4 586.7 L619.9 586.7 L620.4 586.7 L620.9 586.7 L621.4 586.7 L621.9 586.8 L622.4 586.8 L622.9 586.8 L623.4 586.8 L623.9 586.8 L624.4 586.8 L624.9 586.8 L625.4 586.8 L625.9 586.8 L626.4 586.8 L626.9 586.8 L627.4 586.8 L627.9 586.9 L628.4 586.9 L628.9 586.9 L629.4 586.9 L629.9 586.9 L630.4 586.9 L630.9 586.9 L631.4 586.9 L631.9 586.9 L632.4 586.9 L632.9 586.9 L633.4 586.9 L633.9 586.9 L634.4 586.9 L634.9 586.9 L635.4 586.9 L635.9 587.0 L636.4 586.9 L636.9 587.0 L637.4 586.9 L637.9 587.0 L638.4 587.0 L638.9 587.0 L639.4 587.0 L639.9 587.0 L640.4 587.0 L640.9 587.0 L641.4 587.0 L641.9 587.0 L642.4 587.0 L642.9 587.0 L643.4 587.0 L643.9 587.0 L644.4 587.0 L644.9 587.0 L645.4 587.0 L645.9 587.0 L646.4 587.0 L646.9 587.0 L647.4 587.0 L647.9 587.0 L648.4 587.0 L648.9 587.0 L649.4 587.0 L649.9 587.0 L650.4 587.0 L650.9 587.0 L651.4 587.0 L651.9 587.0 L652.4 587.0 L652.9 587.0 L653.4 587.0 L653.9 587.0 L654.4 587.0 L654.9 587.0 L655.4 587.0 L655.9 587.0 L656.4 587.0 L656.9 587.0 L657.4 587.0 L657.9 587.0 L658.4 587.1 L658.9 587.0 L659.4 587.0 L659.9 587.0 L660.4 587.0 L660.9 587.1 L661.4 587.1 L661.9 587.0 L662.4 587.0 L662.9 587.0 L663.4 587.0 L663.9 587.0 L664.4 587.0 L664.9 587.1 L665.4 587.0 L665.9 587.1 L666.4 587.1 L666.9 587.0 L667.4 587.0 L667.9 587.1 L668.4 587.1 L668.9 587.1 L669.4 587.1 L669.9 587.1 L670.4 587.0 L670.9 587.1 L671.4 587.1 L671.9 587.1 L672.4 587.1 L672.9 587.1 L673.4 587.1 L673.9 587.1 L674.4 587.1 L674.9 587.1 L675.4 587.1 L675.9 587.1 L676.4 587.1 L676.9 587.1 L677.4 587.1 L677.9 587.1 L678.4 587.1 L678.9 587.1 L679.4 587.1 L679.9 587.1 L680.4 587.1 L680.9 587.1 L681.4 587.1 L681.9 587.1 L682.4 587.1 L682.9 587.1 L683.4 587.1 L683.9 587.1 L684.4 587.1 L684.9 587.1 L685.4 587.1 L685.9 587.1 L686.4 587.1 L686.9 587.1 L687.4 587.1 L687.9 587.1 L688.4 587.1 L688.9 587.1 L689.4 587.1 L689.9 587.1 L690.4 587.1 L690.9 587.1 L691.4 587.1 L691.9 587.1 L692.4 587.1 L692.9 587.1 L693.4 587.1 L693.9 587.1 L694.4 587.1 L694.9 587.1 L695.4 587.1 L695.9 587.1 L696.4 587.1 L696.9 587.1 L697.4 587.1 L697.9 587.1 L698.4 587.1 L698.9 587.1 L699.4 587.1 L699.9 587.1 L700.4 587.1 L700.9 587.1 L701.4 587.1 L701.9 587.1 L702.4 587.1 L702.9 587.1 L703.4 587.1 L703.9 587.1 L704.4 587.1 L704.9 587.1 L705.4 587.1 L705.9 587.1 L706.4 587.1 L706.9 587.1 L707.4 587.1 L707.9 587.1 L708.4 587.1 L708.9 587.1 L709.4 587.1 L709.9 587.1 L710.4 587.1 L710.9 587.1 L711.4 587.1 L711.9 587.1 L712.4 587.1 L712.9 587.1 L713.4 587.1 L713.9 587.1 L714.4 587.1 L714.9 587.1 L715.4 587.1 L715.9 587.1 L716.4 587.1 L716.9 587.1 L717.4 587.1 L717.9 587.2 L718.4 587.1 L718.9 587.1 L719.4 587.1 L719.9 587.1 L720.4 587.1 L720.9 587.1 L721.4 587.1 L721.9 587.2 L722.4 587.1 L722.9 587.1 L723.4 587.2 L723.9 587.2 L724.4 587.1 L724.9 587.1 L725.4 587.1 L725.9 587.2 L726.4 587.2 L726.9 587.2 L727.4 587.2 L727.9 587.2 L728.4 587.2 L728.9 587.1 L729.4 587.2 L729.9 587.2 L730.4 587.1 L730.9 587.2 L731.4 587.2 L731.9 587.2 L732.4 587.2 L732.9 587.1 L733.4 587.2 L733.9 587.2 L734.4 587.1 L734.9 587.1 L735.4 587.2 L735.9 587.2 L736.4 587.2 L736.9 587.2 L737.4 587.2 L737.9 587.2 L738.4 587.2 L738.9 587.2 L739.4 587.2 L739.9 587.2 L740.4 587.2 L740.9 587.2 L741.4 587.2 L741.9 587.2 L742.4 587.2 L742.9 587.2 L743.4 587.2 L743.9 587.2 L744.4 587.2 L744.9 587.2 L745.4 587.2 L745.9 587.2 L746.4 587.2 L746.9 587.2 L747.4 587.2 L747.9 587.2 L748.4 587.2 L748.9 587.2 L749.4 587.2 L749.9 587.2 L750.4 587.2 L750.9 587.2 L751.4 587.2 L751.9 587.2 L752.4 587.2 L752.9 587.2 L753.4 587.2 L753.9 587.2 L754.4 587.2 L754.9 587.2 L755.4 587.2 L755.9 587.2 L756.4 587.2 L756.9 587.2 L757.4 587.2 L757.9 587.2 L758.4 587.2 L758.9 587.2 L759.4 587.2 L759.9 587.2 L760.4 587.2 L760.9 587.2 L761.4 587.2 L761.9 587.2 L762.4 587.2 L762.9 587.2 L763.4 587.2 L763.9 587.2 L764.4 587.2 L764.9 587.2 L765.4 587.2 L765.9 587.2 L766.4 587.2 L766.9 587.2 L767.4 587.2 L767.9 587.2 L768.4 587.2 L768.9 587.2 L769.4 587.2 L769.9 587.2 L770.4 587.2 L770.9 587.2 L771.4 587.2 L771.9 587.2 L772.4 587.2 L772.9 587.2 L773.4 587.2 L773.9 587.2 L774.4 587.2 L774.9 587.2 L775.4 587.2 L775.9 587.2 L776.4 587.2 L776.9 587.2 L777.4 587.2 L777.9 587.2 L778.4 587.2 L778.9 587.2 L779.4 587.2 L779.9 587.2 L780.4 587.2 L780.9 587.2 L781.4 587.2 L781.9 587.2 L782.4 587.2 L782.9 587.2 L783.4 587.2 L783.9 587.2 L784.4 587.2 L784.9 587.2 L785.4 587.2 L785.9 587.2 L786.4 587.2 L786.9 587.2 L787.4 587.2 L787.9 587.2 L788.4 587.2 L788.9 587.2 L789.4 587.2 L789.9 587.2 L790.4 587.2 L790.9 587.2 L791.4 587.2 L791.9 587.2 L792.4 587.2 L792.9 587.2 L793.4 587.2 L793.9 587.2 L794.4 587.2 L794.9 587.2 L795.4 587.2 L795.9 587.2 L796.4 587.2 L796.9 587.2 L797.4 587.2 L797.9 587.2 L798.4 587.2 L798.9 587.2 L799.4 587.2 L799.9 587.2 L800.4 587.2 L800.9 587.2 L801.4 587.2 L801.9 587.2 L802.4 587.2 L802.9 587.2 L803.4 587.2 L803.9 587.2 L804.4 587.2 L804.9 587.2 L805.4 587.2 L805.9 587.2 L806.4 587.2 L806.9 587.2 L807.4 587.2 L807.9 587.2 L808.4 587.2 L808.9 587.2 L809.4 587.2 L809.9 587.2 L810.4 587.2 L810.9 587.2 L811.4 587.2 L811.9 587.2 L812.4 587.2 L812.9 587.2 L813.4 587.2 L813.9 587.2 L814.4 587.2 L814.9 587.2 L815.4 587.2 L815.9 587.2 L816.4 587.2 L816.9 587.2 L817.4 587.2 L817.9 587.2 L818.4 587.2 L818.9 587.2 L819.4 587.2 L819.9 587.2 L820.4 587.2 L820.9 587.2 L821.4 587.2 L821.9 587.2 L822.4 587.2 L822.9 587.2 L823.4 587.3 L823.9 587.2 L824.4 587.2 L824.9 587.2 L825.4 587.2 L825.9 587.2 L826.4 587.2 L826.9 587.2 L827.4 587.2 L827.9 587.2 L828.4 587.2 L828.9 587.2 L829.4 587.2 L829.9 587.2 L830.4 587.2 L830.9 587.2 L831.4 587.2 L831.9 587.2 L832.4 587.2 L832.9 587.3 L833.4 587.3 L833.9 587.3 L834.4 587.2 L834.9 587.2 L835.4 587.3 L835.9 587.2 L836.4 587.3 L836.9 587.2 L837.4 587.3 L837.9 587.2 L838.4 587.3 L838.9 587.3 L839.4 587.2 L839.9 587.3 L840.4 587.2 L840.9 587.3 L841.4 587.2 L841.9 587.2 L842.4 587.2 L842.9 587.3 L843.4 587.2 L843.9 587.3 L844.4 587.3 L844.9 587.3 L845.4 587.2 L845.9 587.3 L846.4 587.3 L846.9 587.3 L847.4 587.3 L847.9 587.3 L848.4 587.3 L848.9 587.3 L849.4 587.3 L849.9 587.3 L850.4 587.3 L850.9 587.3 L851.4 587.3 L851.9 587.3 L852.4 587.2 L852.9 587.3 L853.4 587.2 L853.9 587.3 L854.4 587.2 L854.9 587.2 L855.4 587.2 L855.9 587.2 L856.4 587.3 L856.9 587.3 L857.4 587.3 L857.9 587.3 L858.4 587.3 L858.9 587.3 L859.4 587.3 L859.9 587.3 L860.4 587.3 L860.9 587.3 L861.4 587.3 L861.9 587.3 L862.4 587.3 L862.9 587.3 L863.4 587.3 L863.9 587.3 L864.4 587.3 L864.9 587.3 L865.4 587.3 L865.9 587.3 L866.4 587.3 L866.9 587.3 L867.4 587.3 L867.9 587.3 L868.4 587.3 L868.9 587.3 L869.4 587.3 L869.9 587.3 L870.4 587.3 L870.9 587.3 L871.4 587.3 L871.9 587.3 L872.4 587.3 L872.9 587.3 L873.4 587.3 L873.9 587.3 L874.4 587.3 L874.9 587.3 L875.4 587.3 L875.9 587.3 L876.4 587.3 L876.9 587.3 L877.4 587.3 L877.9 587.3 L878.4 587.3 L878.9 587.3 L879.4 587.3 L879.9 587.3 L880.4 587.3 L880.9 587.3 L881.4 587.3 L881.9 587.3 L882.4 587.3 L882.9 587.3 L883.4 587.3 L883.9 587.3 L884.4 587.3 L884.9 587.3 L885.4 587.3 L885.9 587.3 L886.4 587.3 L886.9 587.3 L887.4 587.3 L887.9 587.3 L888.4 587.3 L888.9 587.3 L889.4 587.3 L889.9 587.3 L890.4 587.3 L890.9 587.3 L891.4 587.3 L891.9 587.3 L892.4 587.3 L892.9 587.3 L893.4 587.3 L893.9 587.3 L894.4 587.3 L894.9 587.3 L895.4 587.3 L895.9 587.3 L896.4 587.3 L896.9 587.3 L897.4 587.3 L897.9 587.3 L898.4 587.3 L898.9 587.3 L899.4 587.3 L899.9 587.3 L900.4 587.3 L900.9 587.3 L901.4 587.3 L901.9 587.3 L902.4 587.3 L902.9 587.3 L903.4 587.3 L903.9 587.3 L904.4 587.3 L904.9 587.3 L905.4 587.3 L905.9 587.3 L906.4 587.3 L906.9 587.3 L907.4 587.3 L907.9 587.3 L908.4 587.3 L908.9 587.3 L909.4 587.3 L909.9 587.3 L910.4 587.3 L910.9 587.3 L911.4 587.3 L911.9 587.3 L912.4 587.3 L912.9 587.3 L913.4 587.3 L913.9 587.3 L914.4 587.3 L914.9 587.3 L915.4 587.3 L915.9 587.3 L916.4 587.3 L916.9 587.3 L917.4 587.3 L917.9 587.3 L918.4 587.3 L918.9 587.3 L919.4 587.3 L919.9 587.3 L920.4 587.3 L920.9 587.3 L921.4 587.3 L921.9 587.3 L922.4 587.3 L922.9 587.3 L923.4 587.3 L923.9 587.3 L924.4 587.3 L924.9 587.3 L925.4 587.3 L925.9 587.3 L926.4 587.3 L926.9 587.3 L927.4 587.3 L927.9 587.3 L928.4 587.3 L928.9 587.3 L929.4 587.3 L929.9 587.3 L930.4 587.3 L930.9 587.3 L931.4 587.3 L931.9 587.3 L932.4 587.3 L932.9 587.3 L933.4 587.3 L933.9 587.3 L934.4 587.3 L934.9 587.3 L935.4 587.3 L935.9 587.3 L936.4 587.3 L936.9 587.3 L937.4 587.3 L937.9 587.3 L938.4 587.3 L938.9 587.3 L939.4 587.3 L939.9 587.3 L940.4 587.3 L940.9 587.3 L941.4 587.3 L941.9 587.3 L942.4 587.3 L942.9 587.3 L943.4 587.3 L943.9 587.3 L944.4 587.3 L944.9 587.3 L945.4 587.3 L945.9 587.3 L946.4 587.3 L946.9 587.3 L947.4 587.3 L947.9 587.3 L948.4 587.3 L948.9 587.3 L949.4 587.3 L949.9 587.3 L950.4 587.3 L950.9 587.3 L951.4 587.3 L951.9 587.3 L952.4 587.3 L952.9 587.3 L953.4 587.3 L953.9 587.3 L954.4 587.3 L954.9 587.3 L955.4 587.3 L955.9 587.3 L956.4 587.3 L956.9 587.3 L957.4 587.3 L957.9 587.3 L958.4 587.3 L958.9 587.3 L959.4 587.3 L959.9 587.3 L960.4 587.3 L960.9 587.3 L961.4 587.3 L961.9 587.3 L962.4 587.3 L962.9 587.3 L963.4 587.3 L963.9 587.3 L964.4 587.3 L964.9 587.3 L965.4 587.3 L965.9 587.3 L966.4 587.3 L966.9 587.3 L967.4 587.3 L967.9 587.3 L968.4 587.3 L968.9 587.3 L969.4 587.3 L969.9 587.3 L970.4 587.3 L970.9 587.3 L971.4 587.3 L971.9 587.3 L972.4 587.3 L972.9 587.3 L973.4 587.3 L973.9 587.3 L974.4 587.3 L974.9 587.3 L975.4 587.3 L975.9 587.3 L976.4 587.3 L976.9 587.3 L977.4 587.3 L977.9 587.3 L978.4 587.3 L978.9 587.3 L979.4 587.3 L979.9 587.3 L980.4 587.3 L980.9 587.3 L981.4 587.3 L981.9 587.3 L982.4 587.3 L982.9 587.3 L983.4 587.3 L983.9 587.3 L984.4 587.3 L984.9 587.3 L985.4 587.3 L985.9 587.3 L986.4 587.3 L986.9 587.3 L987.4 587.3 L987.9 587.3 L988.4 587.3 L988.9 587.3 L989.4 587.3 L989.9 587.3 L990.4 587.3 L990.9 587.3 L991.4 587.3 L991.9 587.3 L992.4 587.3 L992.9 587.3 L993.4 587.3 L993.9 587.3 L994.4 587.3 L994.9 587.3 L995.4 587.3 L995.9 587.3 L996.4 587.3 L996.9 587.3 L997.4 587.3 L997.9 587.3 L998.4 587.3 L998.9 587.3 L999.4 587.3 L999.9 587.3 L1000.4 587.3 L1000.9 587.3 L1001.4 587.3 L1001.9 587.3 L1002.4 587.3 L1002.9 587.3 L1003.4 587.3 L1003.9 587.3 L1004.4 587.3 L1004.9 587.3 L1005.4 587.3 L1005.9 587.3 L1006.4 587.3 L1006.9 587.3 L1007.4 587.3 L1007.9 587.3 L1008.4 587.3 L1008.9 587.3 L1009.4 587.3 L1009.9 587.3 L1010.4 587.3 L1010.9 587.3 L1011.4 587.3 L1011.9 587.3 L1012.4 587.3 L1012.9 587.3 L1013.4 587.3 L1013.9 587.3 L1014.4 587.3 L1014.9 587.3 L1015.4 587.3 L1015.9 587.3 L1016.4 587.3 L1016.9 587.3 L1017.4 587.3 L1017.9 587.3 L1018.4 587.3 L1018.9 587.3 L1019.4 587.3 L1019.9 587.3 L1020.4 587.3 L1020.9 587.3 L1021.4 587.3 L1021.9 587.3 L1022.4 587.3 L1022.9 587.3 L1023.4 587.3 L1023.9 587.3 L1024.4 587.3 L1024.9 587.3 L1025.4 587.3 L1025.9 587.3 L1026.4 587.3 L1026.9 587.3 L1027.4 587.3 L1027.9 587.3 L1028.4 587.3 L1028.9 587.3 L1029.4 587.3 L1029.9 587.3 L1030.4 587.3 L1030.9 587.3 L1031.4 587.3 L1031.9 587.3 L1032.4 587.3 L1032.9 587.3 L1033.4 587.3 L1033.9 587.3 L1034.4 587.3 L1034.9 587.3 L1035.4 587.3 L1035.9 587.3 L1036.4 587.3 L1036.9 587.3 L1037.4 587.3 L1037.9 587.3 L1038.4 587.3 L1038.9 587.3 L1039.4 587.3 L1039.9 587.3 L1040.4 587.3 L1040.9 587.3 L1041.4 587.3 L1041.4 589.5 L1040.9 589.5 L1040.4 589.5 L1039.9 589.5 L1039.4 589.5 L1038.9 589.5 L1038.4 589.5 L1037.9 589.5 L1037.4 589.5 L1036.9 589.5 L1036.4 589.5 L1035.9 589.5 L1035.4 589.5 L1034.9 589.5 L1034.4 589.5 L1033.9 589.5 L1033.4 589.5 L1032.9 589.5 L1032.4 589.5 L1031.9 589.5 L1031.4 589.5 L1030.9 589.5 L1030.4 589.5 L1029.9 589.5 L1029.4 589.5 L1028.9 589.5 L1028.4 589.5 L1027.9 589.5 L1027.4 589.5 L1026.9 589.5 L1026.4 589.5 L1025.9 589.5 L1025.4 589.5 L1024.9 589.5 L1024.4 589.5 L1023.9 589.5 L1023.4 589.5 L1022.9 589.5 L1022.4 589.5 L1021.9 589.5 L1021.4 589.5 L1020.9 589.5 L1020.4 589.5 L1019.9 589.5 L1019.4 589.5 L1018.9 589.5 L1018.4 589.5 L1017.9 589.5 L1017.4 589.5 L1016.9 589.5 L1016.4 589.5 L1015.9 589.5 L1015.4 589.5 L1014.9 589.5 L1014.4 589.5 L1013.9 589.5 L1013.4 589.5 L1012.9 589.5 L1012.4 589.5 L1011.9 589.5 L1011.4 589.5 L1010.9 589.5 L1010.4 589.5 L1009.9 589.5 L1009.4 589.5 L1008.9 589.5 L1008.4 589.5 L1007.9 589.5 L1007.4 589.5 L1006.9 589.5 L1006.4 589.5 L1005.9 589.5 L1005.4 589.5 L1004.9 589.5 L1004.4 589.5 L1003.9 589.5 L1003.4 589.5 L1002.9 589.5 L1002.4 589.5 L1001.9 589.5 L1001.4 589.5 L1000.9 589.5 L1000.4 589.5 L999.9 589.5 L999.4 589.5 L998.9 589.5 L998.4 589.5 L997.9 589.5 L997.4 589.5 L996.9 589.5 L996.4 589.5 L995.9 589.5 L995.4 589.5 L994.9 589.5 L994.4 589.5 L993.9 589.5 L993.4 589.5 L992.9 589.5 L992.4 589.5 L991.9 589.5 L991.4 589.5 L990.9 589.5 L990.4 589.5 L989.9 589.5 L989.4 589.5 L988.9 589.5 L988.4 589.5 L987.9 589.5 L987.4 589.5 L986.9 589.5 L986.4 589.5 L985.9 589.5 L985.4 589.5 L984.9 589.5 L984.4 589.5 L983.9 589.5 L983.4 589.5 L982.9 589.5 L982.4 589.5 L981.9 589.5 L981.4 589.5 L980.9 589.5 L980.4 589.5 L979.9 589.5 L979.4 589.5 L978.9 589.5 L978.4 589.5 L977.9 589.5 L977.4 589.5 L976.9 589.5 L976.4 589.5 L975.9 589.5 L975.4 589.5 L974.9 589.5 L974.4 589.5 L973.9 589.5 L973.4 589.5 L972.9 589.5 L972.4 589.5 L971.9 589.5 L971.4 589.5 L970.9 589.5 L970.4 589.5 L969.9 589.5 L969.4 589.5 L968.9 589.5 L968.4 589.5 L967.9 589.5 L967.4 589.5 L966.9 589.5 L966.4 589.5 L965.9 589.5 L965.4 589.5 L964.9 589.5 L964.4 589.5 L963.9 589.5 L963.4 589.5 L962.9 589.5 L962.4 589.5 L961.9 589.5 L961.4 589.5 L960.9 589.5 L960.4 589.5 L959.9 589.5 L959.4 589.5 L958.9 589.5 L958.4 589.5 L957.9 589.5 L957.4 589.5 L956.9 589.5 L956.4 589.5 L955.9 589.5 L955.4 589.5 L954.9 589.5 L954.4 589.5 L953.9 589.5 L953.4 589.5 L952.9 589.5 L952.4 589.5 L951.9 589.5 L951.4 589.5 L950.9 589.5 L950.4 589.5 L949.9 589.5 L949.4 589.5 L948.9 589.5 L948.4 589.5 L947.9 589.5 L947.4 589.5 L946.9 589.5 L946.4 589.5 L945.9 589.5 L945.4 589.5 L944.9 589.5 L944.4 589.5 L943.9 589.5 L943.4 589.5 L942.9 589.5 L942.4 589.5 L941.9 589.5 L941.4 589.5 L940.9 589.5 L940.4 589.5 L939.9 589.5 L939.4 589.5 L938.9 589.5 L938.4 589.5 L937.9 589.5 L937.4 589.5 L936.9 589.5 L936.4 589.5 L935.9 589.5 L935.4 589.5 L934.9 589.5 L934.4 589.5 L933.9 589.5 L933.4 589.5 L932.9 589.5 L932.4 589.5 L931.9 589.5 L931.4 589.5 L930.9 589.5 L930.4 589.5 L929.9 589.5 L929.4 589.5 L928.9 589.5 L928.4 589.5 L927.9 589.5 L927.4 589.5 L926.9 589.5 L926.4 589.5 L925.9 589.5 L925.4 589.5 L924.9 589.5 L924.4 589.5 L923.9 589.5 L923.4 589.5 L922.9 589.5 L922.4 589.5 L921.9 589.5 L921.4 589.5 L920.9 589.5 L920.4 589.5 L919.9 589.5 L919.4 589.5 L918.9 589.5 L918.4 589.5 L917.9 589.5 L917.4 589.5 L916.9 589.5 L916.4 589.5 L915.9 589.5 L915.4 589.5 L914.9 589.5 L914.4 589.5 L913.9 589.5 L913.4 589.5 L912.9 589.5 L912.4 589.5 L911.9 589.5 L911.4 589.5 L910.9 589.5 L910.4 589.5 L909.9 589.5 L909.4 589.5 L908.9 589.5 L908.4 589.5 L907.9 589.5 L907.4 589.5 L906.9 589.5 L906.4 589.5 L905.9 589.5 L905.4 589.5 L904.9 589.5 L904.4 589.5 L903.9 589.5 L903.4 589.5 L902.9 589.5 L902.4 589.5 L901.9 589.5 L901.4 589.5 L900.9 589.5 L900.4 589.5 L899.9 589.5 L899.4 589.5 L898.9 589.5 L898.4 589.5 L897.9 589.5 L897.4 589.5 L896.9 589.5 L896.4 589.5 L895.9 589.5 L895.4 589.5 L894.9 589.5 L894.4 589.5 L893.9 589.5 L893.4 589.5 L892.9 589.5 L892.4 589.5 L891.9 589.5 L891.4 589.5 L890.9 589.5 L890.4 589.5 L889.9 589.5 L889.4 589.5 L888.9 589.5 L888.4 589.5 L887.9 589.5 L887.4 589.5 L886.9 589.5 L886.4 589.5 L885.9 589.5 L885.4 589.5 L884.9 589.5 L884.4 589.5 L883.9 589.5 L883.4 589.5 L882.9 589.5 L882.4 589.5 L881.9 589.5 L881.4 589.5 L880.9 589.5 L880.4 589.5 L879.9 589.5 L879.4 589.5 L878.9 589.5 L878.4 589.5 L877.9 589.5 L877.4 589.5 L876.9 589.5 L876.4 589.5 L875.9 589.5 L875.4 589.5 L874.9 589.5 L874.4 589.5 L873.9 589.5 L873.4 589.5 L872.9 589.5 L872.4 589.5 L871.9 589.5 L871.4 589.5 L870.9 589.5 L870.4 589.5 L869.9 589.5 L869.4 589.5 L868.9 589.5 L868.4 589.5 L867.9 589.5 L867.4 589.5 L866.9 589.5 L866.4 589.5 L865.9 589.5 L865.4 589.5 L864.9 589.5 L864.4 589.5 L863.9 589.5 L863.4 589.5 L862.9 589.5 L862.4 589.5 L861.9 589.5 L861.4 589.5 L860.9 589.5 L860.4 589.5 L859.9 589.5 L859.4 589.5 L858.9 589.5 L858.4 589.5 L857.9 589.5 L857.4 589.5 L856.9 589.5 L856.4 589.5 L855.9 589.6 L855.4 589.6 L854.9 589.6 L854.4 589.6 L853.9 589.5 L853.4 589.6 L852.9 589.5 L852.4 589.6 L851.9 589.5 L851.4 589.5 L850.9 589.5 L850.4 589.5 L849.9 589.5 L849.4 589.5 L848.9 589.5 L848.4 589.5 L847.9 589.5 L847.4 589.5 L846.9 589.5 L846.4 589.5 L845.9 589.5 L845.4 589.6 L844.9 589.5 L844.4 589.5 L843.9 589.5 L843.4 589.6 L842.9 589.5 L842.4 589.6 L841.9 589.6 L841.4 589.6 L840.9 589.5 L840.4 589.6 L839.9 589.5 L839.4 589.6 L838.9 589.5 L838.4 589.5 L837.9 589.6 L837.4 589.5 L836.9 589.6 L836.4 589.5 L835.9 589.6 L835.4 589.5 L834.9 589.6 L834.4 589.6 L833.9 589.5 L833.4 589.5 L832.9 589.5 L832.4 589.6 L831.9 589.6 L831.4 589.6 L830.9 589.6 L830.4 589.6 L829.9 589.6 L829.4 589.6 L828.9 589.6 L828.4 589.6 L827.9 589.6 L827.4 589.6 L826.9 589.6 L826.4 589.6 L825.9 589.6 L825.4 589.6 L824.9 589.6 L824.4 589.6 L823.9 589.6 L823.4 589.5 L822.9 589.6 L822.4 589.6 L821.9 589.6 L821.4 589.6 L820.9 589.6 L820.4 589.6 L819.9 589.6 L819.4 589.6 L818.9 589.6 L818.4 589.6 L817.9 589.6 L817.4 589.6 L816.9 589.6 L816.4 589.6 L815.9 589.6 L815.4 589.6 L814.9 589.6 L814.4 589.6 L813.9 589.6 L813.4 589.6 L812.9 589.6 L812.4 589.6 L811.9 589.6 L811.4 589.6 L810.9 589.6 L810.4 589.6 L809.9 589.6 L809.4 589.6 L808.9 589.6 L808.4 589.6 L807.9 589.6 L807.4 589.6 L806.9 589.6 L806.4 589.6 L805.9 589.6 L805.4 589.6 L804.9 589.6 L804.4 589.6 L803.9 589.6 L803.4 589.6 L802.9 589.6 L802.4 589.6 L801.9 589.6 L801.4 589.6 L800.9 589.6 L800.4 589.6 L799.9 589.6 L799.4 589.6 L798.9 589.6 L798.4 589.6 L797.9 589.6 L797.4 589.6 L796.9 589.6 L796.4 589.6 L795.9 589.6 L795.4 589.6 L794.9 589.6 L794.4 589.6 L793.9 589.6 L793.4 589.6 L792.9 589.6 L792.4 589.6 L791.9 589.6 L791.4 589.6 L790.9 589.6 L790.4 589.6 L789.9 589.6 L789.4 589.6 L788.9 589.6 L788.4 589.6 L787.9 589.6 L787.4 589.6 L786.9 589.6 L786.4 589.6 L785.9 589.6 L785.4 589.6 L784.9 589.6 L784.4 589.6 L783.9 589.6 L783.4 589.6 L782.9 589.6 L782.4 589.6 L781.9 589.6 L781.4 589.6 L780.9 589.6 L780.4 589.6 L779.9 589.6 L779.4 589.6 L778.9 589.6 L778.4 589.6 L777.9 589.6 L777.4 589.6 L776.9 589.6 L776.4 589.6 L775.9 589.6 L775.4 589.6 L774.9 589.6 L774.4 589.6 L773.9 589.6 L773.4 589.6 L772.9 589.6 L772.4 589.6 L771.9 589.6 L771.4 589.6 L770.9 589.6 L770.4 589.6 L769.9 589.6 L769.4 589.6 L768.9 589.6 L768.4 589.6 L767.9 589.6 L767.4 589.6 L766.9 589.6 L766.4 589.6 L765.9 589.6 L765.4 589.6 L764.9 589.6 L764.4 589.6 L763.9 589.6 L763.4 589.6 L762.9 589.6 L762.4 589.6 L761.9 589.6 L761.4 589.6 L760.9 589.6 L760.4 589.6 L759.9 589.6 L759.4 589.6 L758.9 589.6 L758.4 589.6 L757.9 589.6 L757.4 589.6 L756.9 589.6 L756.4 589.6 L755.9 589.6 L755.4 589.6 L754.9 589.6 L754.4 589.6 L753.9 589.6 L753.4 589.6 L752.9 589.6 L752.4 589.6 L751.9 589.6 L751.4 589.6 L750.9 589.6 L750.4 589.6 L749.9 589.6 L749.4 589.6 L748.9 589.6 L748.4 589.6 L747.9 589.6 L747.4 589.6 L746.9 589.6 L746.4 589.6 L745.9 589.6 L745.4 589.6 L744.9 589.6 L744.4 589.6 L743.9 589.6 L743.4 589.6 L742.9 589.6 L742.4 589.6 L741.9 589.6 L741.4 589.6 L740.9 589.6 L740.4 589.6 L739.9 589.6 L739.4 589.6 L738.9 589.6 L738.4 589.6 L737.9 589.6 L737.4 589.6 L736.9 589.6 L736.4 589.6 L735.9 589.6 L735.4 589.6 L734.9 589.7 L734.4 589.7 L733.9 589.6 L733.4 589.6 L732.9 589.7 L732.4 589.6 L731.9 589.6 L731.4 589.6 L730.9 589.6 L730.4 589.7 L729.9 589.6 L729.4 589.6 L728.9 589.7 L728.4 589.6 L727.9 589.6 L727.4 589.6 L726.9 589.6 L726.4 589.6 L725.9 589.6 L725.4 589.7 L724.9 589.7 L724.4 589.7 L723.9 589.6 L723.4 589.6 L722.9 589.7 L722.4 589.7 L721.9 589.6 L721.4 589.7 L720.9 589.7 L720.4 589.7 L719.9 589.7 L719.4 589.7 L718.9 589.7 L718.4 589.7 L717.9 589.6 L717.4 589.7 L716.9 589.7 L716.4 589.7 L715.9 589.7 L715.4 589.7 L714.9 589.7 L714.4 589.7 L713.9 589.7 L713.4 589.7 L712.9 589.7 L712.4 589.7 L711.9 589.7 L711.4 589.7 L710.9 589.7 L710.4 589.7 L709.9 589.7 L709.4 589.7 L708.9 589.7 L708.4 589.7 L707.9 589.7 L707.4 589.7 L706.9 589.7 L706.4 589.7 L705.9 589.7 L705.4 589.7 L704.9 589.7 L704.4 589.7 L703.9 589.7 L703.4 589.7 L702.9 589.7 L702.4 589.7 L701.9 589.7 L701.4 589.7 L700.9 589.7 L700.4 589.7 L699.9 589.7 L699.4 589.7 L698.9 589.7 L698.4 589.7 L697.9 589.7 L697.4 589.7 L696.9 589.7 L696.4 589.7 L695.9 589.7 L695.4 589.7 L694.9 589.7 L694.4 589.7 L693.9 589.7 L693.4 589.7 L692.9 589.7 L692.4 589.7 L691.9 589.7 L691.4 589.7 L690.9 589.7 L690.4 589.7 L689.9 589.7 L689.4 589.7 L688.9 589.7 L688.4 589.7 L687.9 589.7 L687.4 589.7 L686.9 589.7 L686.4 589.7 L685.9 589.7 L685.4 589.7 L684.9 589.7 L684.4 589.7 L683.9 589.7 L683.4 589.7 L682.9 589.7 L682.4 589.7 L681.9 589.7 L681.4 589.7 L680.9 589.7 L680.4 589.7 L679.9 589.7 L679.4 589.7 L678.9 589.7 L678.4 589.7 L677.9 589.7 L677.4 589.7 L676.9 589.7 L676.4 589.7 L675.9 589.7 L675.4 589.7 L674.9 589.7 L674.4 589.7 L673.9 589.7 L673.4 589.7 L672.9 589.7 L672.4 589.7 L671.9 589.7 L671.4 589.7 L670.9 589.7 L670.4 589.8 L669.9 589.7 L669.4 589.7 L668.9 589.7 L668.4 589.7 L667.9 589.7 L667.4 589.8 L666.9 589.8 L666.4 589.7 L665.9 589.7 L665.4 589.8 L664.9 589.7 L664.4 589.8 L663.9 589.8 L663.4 589.8 L662.9 589.8 L662.4 589.8 L661.9 589.8 L661.4 589.7 L660.9 589.7 L660.4 589.8 L659.9 589.8 L659.4 589.8 L658.9 589.8 L658.4 589.7 L657.9 589.8 L657.4 589.8 L656.9 589.8 L656.4 589.8 L655.9 589.8 L655.4 589.8 L654.9 589.8 L654.4 589.8 L653.9 589.8 L653.4 589.8 L652.9 589.8 L652.4 589.8 L651.9 589.8 L651.4 589.8 L650.9 589.8 L650.4 589.8 L649.9 589.8 L649.4 589.8 L648.9 589.8 L648.4 589.8 L647.9 589.8 L647.4 589.8 L646.9 589.8 L646.4 589.8 L645.9 589.8 L645.4 589.8 L644.9 589.8 L644.4 589.8 L643.9 589.8 L643.4 589.8 L642.9 589.8 L642.4 589.8 L641.9 589.8 L641.4 589.8 L640.9 589.8 L640.4 589.8 L639.9 589.8 L639.4 589.8 L638.9 589.8 L638.4 589.8 L637.9 589.8 L637.4 589.9 L636.9 589.8 L636.4 589.9 L635.9 589.8 L635.4 589.9 L634.9 589.9 L634.4 589.9 L633.9 589.9 L633.4 589.9 L632.9 589.9 L632.4 589.9 L631.9 589.9 L631.4 589.9 L630.9 589.9 L630.4 589.9 L629.9 589.9 L629.4 589.9 L628.9 589.9 L628.4 589.9 L627.9 589.9 L627.4 590.0 L626.9 590.0 L626.4 590.0 L625.9 590.0 L625.4 590.0 L624.9 590.0 L624.4 590.0 L623.9 590.0 L623.4 590.0 L622.9 590.0 L622.4 590.0 L621.9 590.0 L621.4 590.1 L620.9 590.1 L620.4 590.1 L619.9 590.1 L619.4 590.1 L618.9 590.1 L618.4 590.1 L617.9 590.1 L617.4 590.1 L616.9 590.1 L616.4 590.1 L615.9 590.1 L615.4 590.2 L614.9 590.2 L614.4 590.2 L613.9 590.2 L613.4 590.2 L612.9 590.2 L612.4 590.2 L611.9 590.2 L611.4 590.2 L610.9 590.2 L610.4 590.3 L609.9 590.3 L609.4 590.3 L608.9 590.3 L608.4 590.3 L607.9 590.3 L607.4 590.3 L606.9 590.3 L606.4 590.3 L605.9 590.4 L605.4 590.4 L604.9 590.4 L604.4 590.4 L603.9 590.4 L603.4 590.4 L602.9 590.4 L602.4 590.5 L601.9 590.5 L601.4 590.5 L600.9 590.5 L600.4 590.5 L599.9 590.5 L599.4 590.5 L598.9 590.5 L598.4 590.5 L597.9 590.6 L597.4 590.6 L596.9 590.6 L596.4 590.6 L595.9 590.6 L595.4 590.6 L594.9 590.6 L594.4 590.7 L593.9 590.7 L593.4 590.7 L592.9 590.7 L592.4 590.7 L591.9 590.7 L591.4 590.8 L590.9 590.8 L590.4 590.8 L589.9 590.8 L589.4 590.8 L588.9 590.8 L588.4 590.8 L587.9 590.8 L587.4 590.9 L586.9 590.9 L586.4 590.9 L585.9 590.9 L585.4 590.9 L584.9 590.9 L584.4 590.9 L583.9 591.0 L583.4 591.0 L582.9 591.0 L582.4 591.0 L581.9 591.0 L581.4 591.0 L580.9 591.1 L580.4 591.1 L579.9 591.1 L579.4 591.1 L578.9 591.1 L578.4 591.2 L577.9 591.2 L577.4 591.2 L576.9 591.2 L576.4 591.2 L575.9 591.2 L575.4 591.3 L574.9 591.3 L574.4 591.3 L573.9 591.3 L573.4 591.4 L572.9 591.4 L572.4 591.4 L571.9 591.4 L571.4 591.5 L570.9 591.5 L570.4 591.5 L569.9 591.5 L569.4 591.6 L568.9 591.6 L568.4 591.6 L567.9 591.7 L567.4 591.7 L566.9 591.7 L566.4 591.8 L565.9 591.8 L565.4 591.8 L564.9 591.9 L564.4 591.9 L563.9 591.9 L563.4 592.0 L562.9 592.0 L562.4 592.1 L561.9 592.1 L561.4 592.1 L560.9 592.2 L560.4 592.2 L559.9 592.2 L559.4 592.3 L558.9 592.3 L558.4 592.4 L557.9 592.4 L557.4 592.5 L556.9 592.5 L556.4 592.5 L555.9 592.6 L555.4 592.6 L554.9 592.7 L554.4 592.7 L553.9 592.8 L553.4 592.8 L552.9 592.9 L552.4 592.9 L551.9 593.0 L551.4 593.0 L550.9 593.1 L550.4 593.1 L549.9 593.2 L549.4 593.2 L548.9 593.3 L548.4 593.3 L547.9 593.4 L547.4 593.4 L546.9 593.5 L546.4 593.5 L545.9 593.6 L545.4 593.6 L544.9 593.7 L544.4 593.8 L543.9 593.8 L543.4 593.9 L542.9 593.9 L542.4 594.0 L541.9 594.0 L541.4 594.1 L540.9 594.2 L540.4 594.2 L539.9 594.3 L539.4 594.3 L538.9 594.4 L538.4 594.4 L537.9 594.5 L537.4 594.6 L536.9 594.6 L536.4 594.7 L535.9 594.7 L535.4 594.8 L534.9 594.9 L534.4 595.0 L533.9 595.0 L533.4 595.1 L532.9 595.2 L532.4 595.2 L531.9 595.3 L531.4 595.3 L530.9 595.4 L530.4 595.5 L529.9 595.6 L529.4 595.7 L528.9 595.8 L528.4 595.8 L527.9 596.0 L527.4 596.0 L526.9 596.1 L526.4 596.2 L525.9 596.3 L525.4 596.0 L524.9 595.6 L524.4 595.4 L523.9 595.2 L523.4 595.2 L522.9 595.4 L522.4 595.8 L521.9 596.2 L521.4 596.8 L520.9 597.2 L520.4 597.5 L519.9 597.6 L519.4 597.4 L518.9 597.2 L518.4 597.0 L517.9 596.7 L517.4 596.6 L516.9 596.7 L516.4 597.0 L515.9 597.5 L515.4 598.1 L514.9 598.5 L514.4 599.0 L513.9 599.2 L513.4 599.2 L512.9 599.1 L512.4 598.8 L511.9 598.6 L511.4 598.5 L510.9 598.6 L510.4 598.8 L509.9 599.2 L509.4 599.8 L508.9 600.3 L508.4 600.8 L507.9 601.2 L507.4 601.5 L506.9 601.5 L506.4 601.3 L505.9 601.2 L505.4 600.9 L504.9 600.9 L504.4 601.2 L503.9 601.5 L503.4 602.0 L502.9 602.6 L502.4 603.2 L501.9 603.8 L501.4 604.1 L500.9 604.3 L500.4 604.3 L499.9 604.2 L499.4 604.0 L498.9 604.0 L498.4 604.0 L497.9 604.4 L497.4 604.8 L496.9 605.4 L496.4 606.1 L495.9 606.7 L495.4 607.2 L494.9 607.5 L494.4 607.7 L493.9 607.6 L493.4 607.6 L492.9 607.5 L492.4 607.5 L491.9 607.7 L491.4 608.1 L490.9 608.8 L490.4 609.4 L489.9 610.2 L489.4 610.9 L488.9 611.4 L488.4 611.8 L487.9 611.9 L487.4 611.9 L486.9 611.9 L486.4 611.9 L485.9 612.1 L485.4 612.5 L484.9 613.1 L484.4 613.8 L483.9 614.6 L483.4 615.4 L482.9 616.2 L482.4 616.6 L481.9 616.9 L481.4 617.2 L480.9 617.2 L480.4 617.3 L479.9 617.5 L479.4 617.8 L478.9 618.2 L478.4 618.9 L477.9 619.7 L477.4 620.5 L476.9 621.4 L476.4 622.0 L475.9 622.5 L475.4 622.8 L474.9 622.9 L474.4 623.0 L473.9 623.1 L473.4 623.4 L472.9 623.8 L472.4 624.5 L471.9 625.3 L471.4 626.2 L470.9 627.2 L470.4 628.0 L469.9 628.7 L469.4 629.2 L468.9 629.5 L468.4 629.7 L467.9 629.9 L467.4 630.2 L466.9 630.5 L466.4 631.1 L465.9 631.8 L465.4 632.6 L464.9 633.6 L464.4 634.4 L463.9 635.2 L463.4 635.8 L462.9 636.1 L462.4 636.3 L461.9 636.3 L461.4 636.3 L460.9 636.6 L460.4 636.9 L459.9 637.4 L459.4 638.1 L458.9 639.0 L458.4 639.8 L457.9 640.5 L457.4 641.1 L456.9 641.5 L456.4 641.7 L455.9 641.8 L455.4 641.8 L454.9 641.8 L454.4 642.0 L453.9 642.3 L453.4 642.9 L452.9 643.6 L452.4 644.4 L451.9 645.2 L451.4 645.7 L450.9 646.3 L450.4 646.5 L449.9 646.6 L449.4 646.5 L448.9 646.5 L448.4 646.6 L447.9 646.8 L447.4 647.1 L446.9 647.7 L446.4 648.4 L445.9 649.2 L445.4 649.8 L444.9 650.4 L444.4 650.7 L443.9 650.8 L443.4 650.9 L442.9 650.7 L442.4 650.7 L441.9 650.8 L441.4 651.1 L440.9 651.5 L440.4 652.2 L439.9 652.8 L439.4 653.5 L438.9 654.1 L438.4 654.5 L437.9 654.8 L437.4 654.8 L436.9 654.7 L436.4 654.6 L435.9 654.5 L435.4 654.6 L434.9 654.9 L434.4 655.3 L433.9 655.9 L433.4 656.6 L432.9 657.2 L432.4 657.6 L431.9 657.9 L431.4 657.9 L430.9 657.9 L430.4 657.7 L429.9 657.5 L429.4 657.4 L428.9 657.5 L428.4 657.8 L427.9 658.2 L427.4 658.8 L426.9 659.3 L426.4 659.8 L425.9 660.1 L425.4 660.3 L424.9 660.3 L424.4 660.0 L423.9 659.8 L423.4 659.7 L422.9 659.7 L422.4 659.7 L421.9 660.0 L421.4 660.5 L420.9 661.1 L420.4 661.6 L419.9 662.0 L419.4 662.2 L418.9 662.3 L418.4 662.1 L417.9 662.0 L417.4 661.7 L416.9 661.5 L416.4 661.5 L415.9 661.7 L415.4 662.1 L414.9 662.5 L414.4 663.0 L413.9 663.4 L413.4 663.8 L412.9 663.9 L412.4 663.9 L411.9 663.6 L411.4 663.4 L410.9 663.1 L410.4 663.0 L409.9 663.0 L409.4 663.1 L408.9 663.6 L408.4 664.1 L407.9 664.5 L407.4 664.9 L406.9 665.2 L406.4 665.1 L405.9 665.0 L405.4 664.6 L404.9 664.3 L404.4 664.1 L403.9 664.0 L403.4 664.0 L402.9 664.3 L402.4 664.7 L401.9 665.2 L401.4 665.6 L400.9 665.9 L400.4 666.0 L399.9 665.9 L399.4 665.6 L398.9 665.3 L398.4 665.0 L397.9 664.7 L397.4 664.6 L396.9 664.8 L396.4 665.2 L395.9 665.6 L395.4 666.0 L394.9 666.3 L394.4 666.6 L393.9 666.5 L393.4 666.3 L392.9 666.0 L392.4 665.7 L391.9 665.4 L391.4 665.2 L390.9 665.3 L390.4 665.4 L389.9 665.8 L389.4 666.2 L388.9 666.7 L388.4 666.9 L387.9 667.1 L387.4 667.1 L386.9 666.7 L386.4 666.5 L385.9 666.0 L385.4 665.8 L384.9 665.7 L384.4 665.8 L383.9 666.1 L383.4 666.5 L382.9 666.9 L382.4 667.3 L381.9 667.6 L381.4 667.7 L380.9 667.5 L380.4 667.2 L379.9 666.9 L379.4 666.7 L378.9 666.5 L378.4 666.4 L377.9 666.6 L377.4 667.0 L376.9 667.5 L376.4 667.9 L375.9 668.3 L375.4 668.5 L374.9 668.6 L374.4 668.4 L373.9 668.1 L373.4 667.8 L372.9 667.6 L372.4 667.5 L371.9 667.5 L371.4 667.8 L370.9 668.2 L370.4 668.7 L369.9 669.2 L369.4 669.5 L368.9 669.5 L368.4 669.5 L367.9 669.4 L367.4 668.9 L366.9 668.7 L366.4 668.5 L365.9 668.4 L365.4 668.5 L364.9 668.8 L364.4 669.3 L363.9 669.6 L363.4 670.1 L362.9 670.2 L362.4 670.2 L361.9 670.0 L361.4 669.7 L360.9 669.3 L360.4 669.0 L359.9 668.8 L359.4 668.8 L358.9 668.9 L358.4 669.3 L357.9 669.7 L357.4 670.1 L356.9 670.3 L356.4 670.5 L355.9 670.4 L355.4 670.1 L354.9 669.7 L354.4 669.4 L353.9 669.1 L353.4 669.0 L352.9 669.1 L352.4 669.3 L351.9 669.6 L351.4 670.1 L350.9 670.5 L350.4 670.6 L349.9 670.6 L349.4 670.5 L348.9 670.2 L348.4 669.8 L347.9 669.5 L347.4 669.3 L346.9 669.2 L346.4 669.3 L345.9 669.6 L345.4 670.0 L344.9 670.4 L344.4 670.7 L343.9 670.8 L343.4 670.8 L342.9 670.6 L342.4 670.2 L341.9 669.8 L341.4 669.6 L340.9 669.4 L340.4 669.3 L339.9 669.6 L339.4 670.0 L338.9 670.4 L338.4 670.7 L337.9 670.9 L337.4 671.0 L336.9 670.8 L336.4 670.5 L335.9 670.2 L335.4 669.8 L334.9 669.5 L334.4 669.5 L333.9 669.6 L333.4 669.9 L332.9 670.2 L332.4 670.6 L331.9 670.9 L331.4 671.1 L330.9 671.1 L330.4 670.9 L329.9 670.5 L329.4 670.1 L328.9 669.8 L328.4 669.6 L327.9 669.5 L327.4 669.8 L326.9 670.1 L326.4 670.5 L325.9 670.8 L325.4 671.1 L324.9 671.2 L324.4 671.1 L323.9 670.8 L323.4 670.4 L322.9 670.2 L322.4 669.7 L321.9 669.6 L321.4 669.7 L320.9 669.9 L320.4 670.3 L319.9 670.6 L319.4 671.0 L318.9 671.3 L318.4 671.2 L317.9 671.1 L317.4 670.7 L316.9 670.3 L316.4 670.0 L315.9 669.8 L315.4 669.7 L314.9 669.8 L314.4 670.1 L313.9 670.5 L313.4 671.0 L312.9 671.3 L312.4 671.3 L311.9 671.3 L311.4 671.0 L310.9 670.6 L310.4 670.3 L309.9 670.0 L309.4 669.8 L308.9 669.8 L308.4 670.0 L307.9 670.3 L307.4 670.7 L306.9 671.1 L306.4 671.3 L305.9 671.4 L305.4 671.3 L304.9 670.9 L304.4 670.5 L303.9 670.1 L303.4 669.8 L302.9 669.7 L302.4 669.9 L301.9 670.0 L301.4 670.3 L300.9 670.6 L300.4 670.6 L299.9 670.5 L299.4 670.2 L298.9 669.7 L298.4 669.0 L297.9 668.1 L297.4 667.3 L296.9 666.6 L296.4 665.6 L295.9 664.7 L295.4 663.8 L294.9 662.8 L294.4 661.6 L293.9 660.2 L293.4 658.4 L292.9 655.9 L292.4 652.5 L291.9 648.7 L291.4 644.7 L290.9 640.9 L290.4 637.5 L289.9 634.3 L289.4 631.3 L288.9 628.3 L288.4 625.4 L287.9 622.6 L287.4 619.7 L286.9 616.5 L286.4 612.9 L285.9 609.5 L285.4 606.3 L284.9 603.4 L284.4 601.1 L283.9 599.3 L283.4 597.7 L282.9 596.6 L282.4 595.6 L281.9 595.4 L281.4 594.4 L280.9 593.5 L280.4 592.7 L279.9 592.0 L279.4 591.3 L278.9 590.7 L278.4 590.1 L277.9 589.5 L277.4 589.5 Z" fill="#4565a3"/><rect x="270.9" y="504" width="1.6" height="170" fill="#000"/><rect x="270.9" y="673" width="774.6" height="2" fill="#000"/><rect x="266.4" y="517.9" width="5" height="1" fill="#555"/><text x="264.4" y="522.4" font-size="11" text-anchor="end" font-family="Liberation Sans">10</text><rect x="266.4" y="552.9" width="5" height="1" fill="#555"/><text x="264.4" y="557.4" font-size="11" text-anchor="end" font-family="Liberation Sans">5</text><rect x="266.4" y="587.9" width="5" height="1" fill="#555"/><text x="264.4" y="592.4" font-size="11" text-anchor="end" font-family="Liberation Sans">0</text><rect x="266.4" y="622.9" width="5" height="1" fill="#555"/><text x="264.4" y="627.4" font-size="11" text-anchor="end" font-family="Liberation Sans">-5</text><rect x="266.4" y="657.9" width="5" height="1" fill="#555"/><text x="264.4" y="662.4" font-size="11" text-anchor="end" font-family="Liberation Sans">-10</text><rect x="268.4" y="666.6" width="3" height="1" fill="#555"/><rect x="268.4" y="657.9" width="3" height="1" fill="#555"/><rect x="268.4" y="649.1" width="3" height="1" fill="#555"/><rect x="268.4" y="640.4" width="3" height="1" fill="#555"/><rect x="268.4" y="631.6" width="3" height="1" fill="#555"/><rect x="268.4" y="622.9" width="3" height="1" fill="#555"/><rect x="268.4" y="614.1" width="3" height="1" fill="#555"/><rect x="268.4" y="605.4" width="3" height="1" fill="#555"/><rect x="268.4" y="596.6" width="3" height="1" fill="#555"/><rect x="268.4" y="587.9" width="3" height="1" fill="#555"/><rect x="268.4" y="579.1" width="3" height="1" fill="#555"/><rect x="268.4" y="570.4" width="3" height="1" fill="#555"/><rect x="268.4" y="561.6" width="3" height="1" fill="#555"/><rect x="268.4" y="552.9" width="3" height="1" fill="#555"/><rect x="268.4" y="544.1" width="3" height="1" fill="#555"/><rect x="268.4" y="535.4" width="3" height="1" fill="#555"/><rect x="268.4" y="526.6" width="3" height="1" fill="#555"/><rect x="268.4" y="517.9" width="3" height="1" fill="#555"/><rect x="268.4" y="509.1" width="3" height="1" fill="#555"/><rect x="276.9" y="675" width="1" height="4" fill="#555"/><text x="275.9" y="690" font-size="11" text-anchor="middle" font-family="Liberation Sans">0</text><rect x="287.6" y="675" width="1" height="2.5" fill="#777"/><rect x="298.3" y="675" width="1" height="2.5" fill="#777"/><rect x="309.0" y="675" width="1" height="2.5" fill="#777"/><rect x="319.7" y="675" width="1" height="4" fill="#555"/><text x="318.7" y="690" font-size="11" text-anchor="middle" font-family="Liberation Sans">200</text><rect x="330.4" y="675" width="1" height="2.5" fill="#777"/><rect x="341.1" y="675" width="1" height="2.5" fill="#777"/><rect x="351.8" y="675" width="1" height="2.5" fill="#777"/><rect x="362.5" y="675" width="1" height="4" fill="#555"/><text x="361.5" y="690" font-size="11" text-anchor="middle" font-family="Liberation Sans">400</text><rect x="373.2" y="675" width="1" height="2.5" fill="#777"/><rect x="383.9" y="675" width="1" height="2.5" fill="#777"/><rect x="394.7" y="675" width="1" height="2.5" fill="#777"/><rect x="405.4" y="675" width="1" height="4" fill="#555"/><text x="404.4" y="690" font-size="11" text-anchor="middle" font-family="Liberation Sans">600</text><rect x="416.1" y="675" width="1" height="2.5" fill="#777"/><rect x="426.8" y="675" width="1" height="2.5" fill="#777"/><rect x="437.5" y="675" width="1" height="2.5" fill="#777"/><rect x="448.2" y="675" width="1" height="4" fill="#555"/><text x="447.2" y="690" font-size="11" text-anchor="middle" font-family="Liberation Sans">800</text><rect x="458.9" y="675" width="1" height="2.5" fill="#777"/><rect x="469.6" y="675" width="1" height="2.5" fill="#777"/><rect x="480.3" y="675" width="1" height="2.5" fill="#777"/><rect x="491.0" y="675" width="1" height="4" fill="#555"/><text x="490.0" y="690" font-size="11" text-anchor="middle" font-family="Liberation Sans">1 000</text><rect x="501.7" y="675" width="1" height="2.5" fill="#777"/><rect x="512.4" y="675" width="1" height="2.5" fill="#777"/><rect x="523.1" y="675" width="1" height="2.5" fill="#777"/><rect x="533.8" y="675" width="1" height="4" fill="#555"/><text x="532.8" y="690" font-size="11" text-anchor="middle" font-family="Liberation Sans">1 200</text><rect x="544.5" y="675" width="1" height="2.5" fill="#777"/><rect x="555.2" y="675" width="1" height="2.5" fill="#777"/><rect x="565.9" y="675" width="1" height="2.5" fill="#777"/><rect x="576.6" y="675" width="1" height="4" fill="#555"/><text x="575.6" y="690" font-size="11" text-anchor="middle" font-family="Liberation Sans">1 400</text><rect x="587.3" y="675" width="1" height="2.5" fill="#777"/><rect x="598.0" y="675" width="1" height="2.5" fill="#777"/><rect x="608.8" y="675" width="1" height="2.5" fill="#777"/><rect x="619.5" y="675" width="1" height="4" fill="#555"/><text x="618.5" y="690" font-size="11" text-anchor="middle" font-family="Liberation Sans">1 600</text><rect x="630.2" y="675" width="1" height="2.5" fill="#777"/><rect x="640.9" y="675" width="1" height="2.5" fill="#777"/><rect x="651.6" y="675" width="1" height="2.5" fill="#777"/><rect x="662.3" y="675" width="1" height="4" fill="#555"/><text x="661.3" y="690" font-size="11" text-anchor="middle" font-family="Liberation Sans">1 800</text><rect x="673.0" y="675" width="1" height="2.5" fill="#777"/><rect x="683.7" y="675" width="1" height="2.5" fill="#777"/><rect x="694.4" y="675" width="1" height="2.5" fill="#777"/><rect x="705.1" y="675" width="1" height="4" fill="#555"/><text x="704.1" y="690" font-size="11" text-anchor="middle" font-family="Liberation Sans">2 000</text><rect x="715.8" y="675" width="1" height="2.5" fill="#777"/><rect x="726.5" y="675" width="1" height="2.5" fill="#777"/><rect x="737.2" y="675" width="1" height="2.5" fill="#777"/><rect x="747.9" y="675" width="1" height="4" fill="#555"/><text x="746.9" y="690" font-size="11" text-anchor="middle" font-family="Liberation Sans">2 200</text><rect x="758.6" y="675" width="1" height="2.5" fill="#777"/><rect x="769.3" y="675" width="1" height="2.5" fill="#777"/><rect x="780.0" y="675" width="1" height="2.5" fill="#777"/><rect x="790.7" y="675" width="1" height="4" fill="#555"/><text x="789.7" y="690" font-size="11" text-anchor="middle" font-family="Liberation Sans">2 400</text><rect x="801.4" y="675" width="1" height="2.5" fill="#777"/><rect x="812.1" y="675" width="1" height="2.5" fill="#777"/><rect x="822.9" y="675" width="1" height="2.5" fill="#777"/><rect x="833.6" y="675" width="1" height="4" fill="#555"/><text x="832.6" y="690" font-size="11" text-anchor="middle" font-family="Liberation Sans">2 600</text><rect x="844.3" y="675" width="1" height="2.5" fill="#777"/><rect x="855.0" y="675" width="1" height="2.5" fill="#777"/><rect x="865.7" y="675" width="1" height="2.5" fill="#777"/><rect x="876.4" y="675" width="1" height="4" fill="#555"/><text x="875.4" y="690" font-size="11" text-anchor="middle" font-family="Liberation Sans">2 800</text><rect x="887.1" y="675" width="1" height="2.5" fill="#777"/><rect x="897.8" y="675" width="1" height="2.5" fill="#777"/><rect x="908.5" y="675" width="1" height="2.5" fill="#777"/><rect x="919.2" y="675" width="1" height="4" fill="#555"/><text x="918.2" y="690" font-size="11" text-anchor="middle" font-family="Liberation Sans">3 000</text><rect x="929.9" y="675" width="1" height="2.5" fill="#777"/><rect x="940.6" y="675" width="1" height="2.5" fill="#777"/><rect x="951.3" y="675" width="1" height="2.5" fill="#777"/><rect x="962.0" y="675" width="1" height="4" fill="#555"/><text x="961.0" y="690" font-size="11" text-anchor="middle" font-family="Liberation Sans">3 200</text><rect x="972.7" y="675" width="1" height="2.5" fill="#777"/><rect x="983.4" y="675" width="1" height="2.5" fill="#777"/><rect x="994.1" y="675" width="1" height="2.5" fill="#777"/><rect x="1004.8" y="675" width="1" height="4" fill="#555"/><text x="1003.8" y="690" font-size="11" text-anchor="middle" font-family="Liberation Sans">3 400</text><rect x="1015.5" y="675" width="1" height="2.5" fill="#777"/><rect x="1026.2" y="675" width="1" height="2.5" fill="#777"/><rect x="1037.0" y="675" width="1" height="2.5" fill="#777"/><path d="M656 664 L659 673 L653 673 Z" fill="#f0a040"/></svg>
<svg class="a" style="left:0;top:0" width="1400" height="1014" viewBox="0 0 1400 1014"><text x="646" y="754" font-size="11.5" text-anchor="middle" fill="#1c1c70" font-family="Liberation Sans">275 Гц ПК2</text><text x="250" y="776" font-size="10.5" font-family="Liberation Sans">A</text><text x="1028" y="991" font-size="10" font-family="Liberation Sans">мс</text><line x1="266.4" y1="800.5" x2="1041" y2="800.5" stroke="#7c7c7c" stroke-width="1" stroke-dasharray="3.5 2.5"/><line x1="266.4" y1="817.5" x2="1041" y2="817.5" stroke="#7c7c7c" stroke-width="1" stroke-dasharray="3.5 2.5"/><line x1="266.4" y1="835.5" x2="1041" y2="835.5" stroke="#7c7c7c" stroke-width="1" stroke-dasharray="3.5 2.5"/><line x1="266.4" y1="853.5" x2="1041" y2="853.5" stroke="#7c7c7c" stroke-width="1" stroke-dasharray="3.5 2.5"/><line x1="266.4" y1="888.5" x2="1041" y2="888.5" stroke="#7c7c7c" stroke-width="1" stroke-dasharray="3.5 2.5"/><line x1="266.4" y1="906.5" x2="1041" y2="906.5" stroke="#7c7c7c" stroke-width="1" stroke-dasharray="3.5 2.5"/><line x1="266.4" y1="923.5" x2="1041" y2="923.5" stroke="#7c7c7c" stroke-width="1" stroke-dasharray="3.5 2.5"/><line x1="266.4" y1="941.5" x2="1041" y2="941.5" stroke="#7c7c7c" stroke-width="1" stroke-dasharray="3.5 2.5"/><line x1="271.5" y1="786" x2="271.5" y2="954" stroke="#7c7c7c" stroke-width="1" stroke-dasharray="3.5 2.5"/><line x1="314.5" y1="786" x2="314.5" y2="954" stroke="#7c7c7c" stroke-width="1" stroke-dasharray="3.5 2.5"/><line x1="357.5" y1="786" x2="357.5" y2="954" stroke="#7c7c7c" stroke-width="1" stroke-dasharray="3.5 2.5"/><line x1="400.5" y1="786" x2="400.5" y2="954" stroke="#7c7c7c" stroke-width="1" stroke-dasharray="3.5 2.5"/><line x1="444.5" y1="786" x2="444.5" y2="954" stroke="#7c7c7c" stroke-width="1" stroke-dasharray="3.5 2.5"/><line x1="487.5" y1="786" x2="487.5" y2="954" stroke="#7c7c7c" stroke-width="1" stroke-dasharray="3.5 2.5"/><line x1="530.5" y1="786" x2="530.5" y2="954" stroke="#7c7c7c" stroke-width="1" stroke-dasharray="3.5 2.5"/><line x1="573.5" y1="786" x2="573.5" y2="954" stroke="#7c7c7c" stroke-width="1" stroke-dasharray="3.5 2.5"/><line x1="616.5" y1="786" x2="616.5" y2="954" stroke="#7c7c7c" stroke-width="1" stroke-dasharray="3.5 2.5"/><line x1="660.5" y1="786" x2="660.5" y2="954" stroke="#7c7c7c" stroke-width="1" stroke-dasharray="3.5 2.5"/><line x1="703.5" y1="786" x2="703.5" y2="954" stroke="#7c7c7c" stroke-width="1" stroke-dasharray="3.5 2.5"/><line x1="746.5" y1="786" x2="746.5" y2="954" stroke="#7c7c7c" stroke-width="1" stroke-dasharray="3.5 2.5"/><line x1="789.5" y1="786" x2="789.5" y2="954" stroke="#7c7c7c" stroke-width="1" stroke-dasharray="3.5 2.5"/><line x1="832.5" y1="786" x2="832.5" y2="954" stroke="#7c7c7c" stroke-width="1" stroke-dasharray="3.5 2.5"/><line x1="875.5" y1="786" x2="875.5" y2="954" stroke="#7c7c7c" stroke-width="1" stroke-dasharray="3.5 2.5"/><line x1="919.5" y1="786" x2="919.5" y2="954" stroke="#7c7c7c" stroke-width="1" stroke-dasharray="3.5 2.5"/><line x1="962.5" y1="786" x2="962.5" y2="954" stroke="#7c7c7c" stroke-width="1" stroke-dasharray="3.5 2.5"/><line x1="1005.5" y1="786" x2="1005.5" y2="954" stroke="#7c7c7c" stroke-width="1" stroke-dasharray="3.5 2.5"/><path d="M271.4 869.6 L271.9 869.6 L272.4 869.6 L272.9 869.6 L273.4 869.6 L273.9 869.6 L274.4 869.6 L274.9 869.6 L275.4 869.6 L275.9 869.6 L276.4 869.6 L276.9 869.6 L277.4 869.6 L277.9 869.6 L278.4 869.6 L278.9 869.6 L279.4 869.6 L279.9 869.6 L280.4 869.6 L280.9 869.6 L281.4 869.6 L281.9 869.6 L282.4 869.6 L282.9 869.6 L283.4 869.6 L283.9 869.6 L284.4 869.6 L284.9 869.6 L285.4 869.6 L285.9 869.6 L286.4 869.6 L286.9 869.6 L287.4 869.6 L287.9 869.6 L288.4 869.6 L288.9 869.6 L289.4 869.6 L289.9 869.6 L290.4 869.6 L290.9 869.6 L291.4 869.6 L291.9 869.6 L292.4 869.6 L292.9 869.6 L293.4 869.6 L293.9 869.6 L294.4 869.6 L294.9 869.6 L295.4 869.6 L295.9 869.6 L296.4 869.6 L296.9 869.6 L297.4 869.6 L297.9 869.6 L298.4 869.6 L298.9 869.6 L299.4 869.6 L299.9 869.6 L300.4 869.6 L300.9 869.6 L301.4 869.6 L301.9 869.6 L302.4 869.6 L302.9 869.6 L303.4 869.6 L303.9 869.6 L304.4 869.6 L304.9 869.6 L305.4 869.6 L305.9 869.6 L306.4 869.6 L306.9 869.6 L307.4 869.6 L307.9 869.6 L308.4 869.6 L308.9 869.6 L309.4 869.6 L309.9 869.6 L310.4 869.6 L310.9 869.6 L311.4 869.6 L311.9 869.6 L312.4 869.6 L312.9 869.6 L313.4 869.6 L313.9 869.6 L314.4 869.6 L314.9 869.6 L315.4 869.6 L315.9 869.6 L316.4 869.6 L316.9 869.6 L317.4 869.6 L317.9 869.6 L318.4 869.6 L318.9 869.6 L319.4 869.6 L319.9 869.6 L320.4 869.6 L320.9 869.6 L321.4 869.6 L321.9 869.6 L322.4 869.6 L322.9 869.6 L323.4 869.6 L323.9 869.6 L324.4 869.6 L324.9 869.6 L325.4 869.6 L325.9 869.6 L326.4 869.6 L326.9 869.6 L327.4 869.6 L327.9 869.6 L328.4 869.6 L328.9 869.6 L329.4 869.6 L329.9 869.6 L330.4 869.6 L330.9 869.6 L331.4 869.6 L331.9 869.6 L332.4 869.6 L332.9 869.6 L333.4 869.6 L333.9 869.6 L334.4 869.6 L334.9 869.6 L335.4 869.6 L335.9 869.6 L336.4 869.6 L336.9 869.6 L337.4 869.6 L337.9 869.6 L338.4 869.6 L338.9 869.6 L339.4 869.6 L339.9 869.6 L340.4 869.6 L340.9 869.6 L341.4 869.6 L341.9 869.6 L342.4 869.6 L342.9 869.6 L343.4 869.6 L343.9 869.6 L344.4 869.6 L344.9 869.6 L345.4 869.6 L345.9 869.6 L346.4 869.6 L346.9 869.6 L347.4 869.6 L347.9 869.6 L348.4 869.6 L348.9 869.6 L349.4 869.6 L349.9 869.6 L350.4 869.6 L350.9 869.6 L351.4 869.6 L351.9 869.6 L352.4 869.6 L352.9 869.6 L353.4 869.6 L353.9 869.6 L354.4 869.6 L354.9 869.6 L355.4 869.6 L355.9 869.6 L356.4 869.6 L356.9 869.6 L357.4 869.6 L357.9 869.6 L358.4 869.6 L358.9 869.6 L359.4 869.6 L359.9 869.6 L360.4 869.6 L360.9 869.6 L361.4 869.6 L361.9 869.6 L362.4 869.6 L362.9 869.6 L363.4 869.6 L363.9 869.6 L364.4 869.6 L364.9 869.6 L365.4 869.6 L365.9 869.6 L366.4 869.6 L366.9 869.6 L367.4 869.6 L367.9 869.6 L368.4 869.6 L368.9 869.6 L369.4 869.6 L369.9 869.6 L370.4 869.6 L370.9 869.6 L371.4 869.6 L371.9 869.6 L372.4 869.6 L372.9 869.6 L373.4 869.6 L373.9 869.6 L374.4 869.6 L374.9 869.6 L375.4 869.6 L375.9 869.6 L376.4 869.6 L376.9 869.6 L377.4 869.6 L377.9 869.6 L378.4 869.6 L378.9 869.6 L379.4 869.6 L379.9 869.6 L380.4 869.6 L380.9 869.6 L381.4 869.6 L381.9 869.6 L382.4 869.6 L382.9 869.6 L383.4 869.6 L383.9 869.6 L384.4 869.6 L384.9 869.6 L385.4 869.6 L385.9 869.6 L386.4 869.6 L386.9 869.6 L387.4 869.6 L387.9 869.6 L388.4 869.6 L388.9 869.6 L389.4 869.6 L389.9 869.6 L390.4 869.6 L390.9 869.6 L391.4 869.6 L391.9 869.6 L392.4 869.6 L392.9 869.6 L393.4 869.6 L393.9 869.6 L394.4 869.6 L394.9 869.6 L395.4 869.6 L395.9 869.6 L396.4 869.6 L396.9 869.6 L397.4 869.6 L397.9 869.6 L398.4 869.6 L398.9 869.6 L399.4 869.6 L399.9 869.6 L400.4 869.6 L400.9 869.6 L401.4 869.6 L401.9 869.6 L402.4 869.6 L402.9 869.6 L403.4 869.6 L403.9 869.6 L404.4 869.6 L404.9 869.6 L405.4 869.6 L405.9 869.6 L406.4 869.6 L406.9 869.6 L407.4 869.6 L407.9 869.6 L408.4 869.6 L408.9 869.6 L409.4 869.6 L409.9 869.6 L410.4 869.6 L410.9 869.6 L411.4 869.6 L411.9 869.6 L412.4 869.6 L412.9 869.6 L413.4 869.6 L413.9 869.6 L414.4 869.6 L414.9 869.6 L415.4 869.6 L415.9 869.6 L416.4 869.6 L416.9 869.6 L417.4 869.6 L417.9 869.6 L418.4 869.6 L418.9 869.6 L419.4 869.6 L419.9 869.6 L420.4 869.6 L420.9 869.6 L421.4 869.6 L421.9 869.6 L422.4 869.6 L422.9 869.6 L423.4 869.6 L423.9 869.6 L424.4 869.6 L424.9 869.6 L425.4 869.6 L425.9 869.6 L426.4 869.6 L426.9 869.6 L427.4 869.6 L427.9 869.6 L428.4 869.6 L428.9 869.6 L429.4 869.6 L429.9 869.6 L430.4 869.6 L430.9 869.6 L431.4 869.6 L431.9 869.6 L432.4 869.6 L432.9 869.6 L433.4 869.6 L433.9 869.6 L434.4 869.6 L434.9 869.6 L435.4 869.6 L435.9 869.6 L436.4 869.6 L436.9 869.6 L437.4 869.6 L437.9 869.6 L438.4 869.6 L438.9 869.6 L439.4 869.6 L439.9 869.6 L440.4 869.6 L440.9 869.6 L441.4 869.6 L441.9 869.6 L442.4 869.6 L442.9 869.6 L443.4 869.6 L443.9 869.6 L444.4 869.6 L444.9 869.6 L445.4 869.6 L445.9 869.6 L446.4 869.6 L446.9 869.6 L447.4 869.6 L447.9 869.6 L448.4 869.6 L448.9 869.6 L449.4 869.6 L449.9 869.6 L450.4 869.6 L450.9 869.6 L451.4 869.6 L451.9 869.6 L452.4 869.6 L452.9 869.6 L453.4 869.6 L453.9 869.6 L454.4 869.6 L454.9 869.6 L455.4 869.6 L455.9 869.6 L456.4 869.6 L456.9 869.6 L457.4 869.6 L457.9 869.6 L458.4 869.6 L458.9 869.6 L459.4 869.6 L459.9 869.6 L460.4 869.6 L460.9 869.6 L461.4 869.6 L461.9 869.6 L462.4 869.6 L462.9 869.6 L463.4 869.6 L463.9 869.6 L464.4 869.6 L464.9 869.6 L465.4 869.6 L465.9 869.6 L466.4 869.6 L466.9 869.6 L467.4 869.6 L467.9 869.6 L468.4 869.6 L468.9 869.6 L469.4 869.6 L469.9 869.6 L470.4 869.6 L470.9 869.6 L471.4 869.6 L471.9 869.6 L472.4 869.6 L472.9 869.6 L473.4 869.6 L473.9 869.6 L474.4 869.6 L474.9 869.6 L475.4 869.6 L475.9 869.6 L476.4 869.6 L476.9 869.6 L477.4 869.6 L477.9 869.6 L478.4 869.6 L478.9 869.6 L479.4 869.6 L479.9 869.6 L480.4 869.6 L480.9 869.6 L481.4 869.6 L481.9 869.6 L482.4 869.6 L482.9 869.6 L483.4 869.6 L483.9 869.6 L484.4 869.6 L484.9 869.6 L485.4 869.6 L485.9 869.6 L486.4 869.6 L486.9 869.6 L487.4 869.6 L487.9 869.6 L488.4 869.6 L488.9 869.6 L489.4 869.6 L489.9 869.6 L490.4 869.6 L490.9 869.6 L491.4 869.6 L491.9 869.6 L492.4 869.6 L492.9 869.6 L493.4 869.6 L493.9 869.6 L494.4 869.6 L494.9 869.6 L495.4 869.6 L495.9 869.6 L496.4 869.6 L496.9 869.6 L497.4 869.6 L497.9 869.6 L498.4 869.6 L498.9 869.6 L499.4 869.6 L499.9 869.6 L500.4 869.6 L500.9 869.6 L501.4 869.6 L501.9 869.6 L502.4 869.6 L502.9 869.6 L503.4 869.6 L503.9 869.6 L504.4 869.6 L504.9 869.6 L505.4 869.6 L505.9 869.6 L506.4 869.6 L506.9 869.6 L507.4 869.6 L507.9 869.6 L508.4 869.6 L508.9 869.6 L509.4 869.6 L509.9 869.6 L510.4 869.6 L510.9 869.6 L511.4 869.6 L511.9 869.6 L512.4 869.6 L512.9 869.6 L513.4 869.6 L513.9 869.6 L514.4 869.6 L514.9 869.6 L515.4 869.6 L515.9 869.6 L516.4 869.6 L516.9 869.6 L517.4 869.6 L517.9 869.6 L518.4 869.6 L518.9 869.6 L519.4 869.6 L519.9 869.6 L520.4 869.6 L520.9 869.6 L521.4 869.6 L521.9 869.6 L522.4 869.6 L522.9 869.6 L523.4 869.6 L523.9 869.6 L524.4 869.6 L524.9 869.6 L525.4 869.6 L525.9 869.6 L526.4 869.6 L526.9 869.6 L527.4 869.6 L527.9 869.6 L528.4 869.6 L528.9 869.6 L529.4 869.6 L529.9 869.6 L530.4 869.6 L530.9 869.6 L531.4 869.6 L531.9 869.6 L532.4 869.6 L532.9 869.6 L533.4 869.6 L533.9 869.6 L534.4 869.6 L534.9 869.6 L535.4 869.6 L535.9 869.6 L536.4 869.6 L536.9 869.6 L537.4 869.6 L537.9 869.6 L538.4 869.6 L538.9 869.6 L539.4 869.6 L539.9 869.6 L540.4 869.6 L540.9 869.6 L541.4 869.6 L541.9 869.6 L542.4 869.6 L542.9 869.6 L543.4 869.6 L543.9 869.6 L544.4 869.6 L544.9 869.6 L545.4 869.6 L545.9 869.6 L546.4 869.6 L546.9 869.6 L547.4 869.6 L547.9 869.6 L548.4 869.6 L548.9 869.6 L549.4 869.6 L549.9 869.6 L550.4 869.6 L550.9 869.6 L551.4 869.6 L551.9 869.6 L552.4 869.6 L552.9 869.6 L553.4 869.6 L553.9 869.6 L554.4 869.6 L554.9 869.6 L555.4 869.6 L555.9 869.6 L556.4 869.6 L556.9 869.6 L557.4 869.6 L557.9 869.6 L558.4 869.6 L558.9 869.6 L559.4 869.6 L559.9 869.6 L560.4 869.6 L560.9 869.6 L561.4 869.6 L561.9 869.6 L562.4 869.6 L562.9 869.6 L563.4 869.6 L563.9 869.6 L564.4 869.6 L564.9 869.6 L565.4 869.6 L565.9 869.6 L566.4 869.6 L566.9 869.6 L567.4 869.6 L567.9 869.6 L568.4 869.6 L568.9 869.6 L569.4 869.6 L569.9 869.6 L570.4 869.6 L570.9 869.6 L571.4 869.6 L571.9 869.6 L572.4 869.6 L572.9 869.6 L573.4 869.6 L573.9 869.6 L574.4 869.6 L574.9 869.6 L575.4 869.6 L575.9 869.6 L576.4 869.6 L576.9 869.6 L577.4 869.6 L577.9 869.6 L578.4 869.6 L578.9 869.6 L579.4 869.6 L579.9 869.6 L580.4 869.6 L580.9 869.6 L581.4 869.6 L581.9 869.6 L582.4 869.6 L582.9 869.6 L583.4 869.6 L583.9 869.6 L584.4 869.6 L584.9 869.6 L585.4 869.6 L585.9 869.6 L586.4 869.6 L586.9 869.6 L587.4 869.6 L587.9 869.6 L588.4 869.6 L588.9 869.6 L589.4 869.6 L589.9 869.6 L590.4 869.6 L590.9 869.6 L591.4 869.6 L591.9 869.6 L592.4 869.6 L592.9 869.6 L593.4 869.6 L593.9 869.6 L594.4 869.6 L594.9 869.6 L595.4 869.6 L595.9 869.6 L596.4 869.6 L596.9 869.6 L597.4 869.6 L597.9 869.6 L598.4 869.6 L598.9 869.6 L599.4 869.6 L599.9 869.6 L600.4 869.6 L600.9 869.6 L601.4 869.6 L601.9 869.6 L602.4 869.6 L602.9 869.6 L603.4 869.6 L603.9 869.6 L604.4 869.6 L604.9 869.6 L605.4 869.6 L605.9 869.6 L606.4 869.6 L606.9 869.6 L607.4 869.6 L607.9 869.6 L608.4 869.6 L608.9 869.6 L609.4 869.6 L609.9 869.6 L610.4 869.6 L610.9 869.6 L611.4 869.6 L611.9 869.6 L612.4 869.6 L612.9 869.6 L613.4 869.6 L613.9 869.6 L614.4 869.6 L614.9 869.6 L615.4 869.6 L615.9 869.6 L616.4 869.6 L616.9 869.6 L617.4 869.6 L617.9 869.6 L618.4 869.6 L618.9 869.6 L619.4 869.6 L619.9 869.6 L620.4 869.6 L620.9 869.6 L621.4 869.6 L621.9 869.6 L622.4 869.6 L622.9 869.6 L623.4 869.6 L623.9 869.6 L624.4 869.6 L624.9 869.6 L625.4 869.6 L625.9 869.6 L626.4 869.6 L626.9 869.6 L627.4 869.6 L627.9 869.6 L628.4 869.6 L628.9 869.6 L629.4 869.6 L629.9 869.6 L630.4 869.6 L630.9 869.6 L631.4 869.6 L631.9 869.6 L632.4 869.6 L632.9 869.6 L633.4 869.6 L633.9 869.6 L634.4 869.6 L634.9 869.6 L635.4 869.6 L635.9 869.6 L636.4 869.6 L636.9 869.6 L637.4 869.6 L637.9 869.6 L638.4 869.6 L638.9 869.6 L639.4 869.6 L639.9 869.6 L640.4 869.6 L640.9 869.6 L641.4 869.6 L641.9 869.6 L642.4 869.6 L642.9 869.6 L643.4 869.6 L643.9 869.6 L644.4 869.6 L644.9 869.6 L645.4 869.6 L645.9 869.6 L646.4 869.6 L646.9 869.6 L647.4 869.6 L647.9 869.6 L648.4 869.6 L648.9 869.6 L649.4 869.6 L649.9 869.6 L650.4 869.6 L650.9 869.6 L651.4 869.6 L651.9 869.6 L652.4 869.6 L652.9 869.6 L653.4 869.6 L653.9 869.6 L654.4 869.6 L654.9 869.6 L655.4 869.6 L655.9 869.6 L656.4 869.6 L656.9 869.6 L657.4 869.6 L657.9 869.6 L658.4 869.6 L658.9 869.6 L659.4 869.6 L659.9 869.6 L660.4 869.6 L660.9 869.6 L661.4 869.6 L661.9 869.6 L662.4 869.6 L662.9 869.6 L663.4 869.6 L663.9 869.6 L664.4 869.6 L664.9 869.6 L665.4 869.6 L665.9 869.6 L666.4 869.6 L666.9 869.6 L667.4 869.6 L667.9 869.6 L668.4 869.6 L668.9 869.6 L669.4 869.6 L669.9 869.6 L670.4 869.6 L670.9 869.6 L671.4 869.6 L671.9 869.6 L672.4 869.6 L672.9 869.6 L673.4 869.6 L673.9 869.6 L674.4 869.6 L674.9 869.6 L675.4 869.6 L675.9 869.6 L676.4 869.6 L676.9 869.6 L677.4 869.6 L677.9 869.6 L678.4 869.6 L678.9 869.6 L679.4 869.6 L679.9 869.6 L680.4 869.6 L680.9 869.5 L681.4 869.3 L681.9 869.2 L682.4 869.0 L682.9 868.7 L683.4 868.2 L683.9 867.5 L684.4 866.6 L684.9 865.5 L685.4 864.2 L685.9 862.9 L686.4 861.7 L686.9 860.4 L687.4 859.1 L687.9 857.7 L688.4 856.0 L688.9 853.7 L689.4 850.4 L689.9 846.8 L690.4 842.5 L690.9 838.2 L691.4 833.8 L691.9 829.7 L692.4 826.0 L692.9 822.9 L693.4 820.0 L693.9 816.8 L694.4 813.7 L694.9 810.6 L695.4 807.3 L695.9 804.2 L696.4 801.5 L696.9 799.1 L697.4 797.5 L697.9 796.0 L698.4 794.6 L698.9 793.8 L699.4 793.0 L699.9 792.3 L700.4 792.0 L700.9 791.8 L701.4 791.5 L701.9 791.1 L702.4 790.9 L702.9 790.4 L703.4 789.9 L703.9 789.8 L704.4 789.6 L704.9 789.6 L705.4 789.8 L705.9 790.3 L706.4 790.6 L706.9 790.8 L707.4 791.1 L707.9 791.0 L708.4 790.7 L708.9 790.5 L709.4 790.1 L709.9 789.8 L710.4 789.4 L710.9 789.3 L711.4 789.4 L711.9 789.5 L712.4 790.0 L712.9 790.3 L713.4 790.8 L713.9 790.7 L714.4 790.7 L714.9 790.5 L715.4 789.9 L715.9 789.7 L716.4 789.2 L716.9 788.9 L717.4 789.1 L717.9 789.2 L718.4 789.7 L718.9 789.9 L719.4 790.1 L719.9 790.3 L720.4 790.4 L720.9 790.3 L721.4 790.1 L721.9 789.5 L722.4 789.2 L722.9 788.9 L723.4 788.9 L723.9 789.0 L724.4 789.2 L724.9 789.5 L725.4 789.9 L725.9 790.1 L726.4 790.3 L726.9 790.2 L727.4 790.0 L727.9 789.8 L728.4 789.3 L728.9 789.0 L729.4 788.7 L729.9 788.6 L730.4 788.8 L730.9 789.1 L731.4 789.4 L731.9 789.9 L732.4 790.2 L732.9 790.0 L733.4 789.9 L733.9 789.8 L734.4 789.4 L734.9 788.8 L735.4 788.6 L735.9 788.4 L736.4 788.6 L736.9 788.7 L737.4 789.1 L737.9 789.3 L738.4 789.7 L738.9 789.9 L739.4 789.9 L739.9 789.7 L740.4 789.3 L740.9 789.1 L741.4 788.8 L741.9 788.5 L742.4 788.3 L742.9 788.5 L743.4 788.6 L743.9 789.0 L744.4 789.5 L744.9 789.6 L745.4 789.7 L745.9 789.8 L746.4 789.4 L746.9 789.0 L747.4 788.7 L747.9 788.5 L748.4 788.0 L748.9 788.3 L749.4 788.3 L749.9 788.7 L750.4 789.1 L750.9 789.3 L751.4 789.8 L751.9 789.6 L752.4 789.6 L752.9 789.3 L753.4 788.8 L753.9 788.6 L754.4 788.0 L754.9 787.9 L755.4 788.1 L755.9 788.2 L756.4 788.8 L756.9 789.1 L757.4 789.5 L757.9 789.5 L758.4 789.4 L758.9 789.4 L759.4 788.9 L759.9 788.5 L760.4 788.1 L760.9 788.0 L761.4 787.9 L761.9 788.0 L762.4 788.3 L762.9 788.7 L763.4 789.2 L763.9 789.3 L764.4 789.4 L764.9 789.4 L765.4 789.1 L765.9 788.8 L766.4 788.4 L766.9 788.1 L767.4 787.7 L767.9 788.0 L768.4 788.0 L768.9 788.4 L769.4 788.7 L769.9 789.3 L770.4 789.4 L770.9 789.5 L771.4 789.3 L771.9 789.0 L772.4 788.5 L772.9 788.1 L773.4 788.0 L773.9 787.8 L774.4 787.8 L774.9 788.2 L775.4 788.4 L775.9 788.8 L776.4 789.3 L776.9 789.4 L777.4 789.4 L777.9 789.1 L778.4 788.5 L778.9 788.3 L779.4 788.1 L779.9 787.8 L780.4 787.7 L780.9 787.9 L781.4 788.1 L781.9 788.7 L782.4 789.1 L782.9 789.1 L783.4 789.4 L783.9 789.3 L784.4 788.8 L784.9 788.5 L785.4 787.9 L785.9 787.7 L786.4 787.7 L786.9 787.9 L787.4 788.0 L787.9 788.2 L788.4 788.9 L788.9 789.1 L789.4 789.3 L789.9 789.1 L790.4 788.9 L790.9 788.5 L791.4 788.1 L791.9 787.9 L792.4 787.6 L792.9 787.7 L793.4 787.9 L793.9 788.1 L794.4 788.6 L794.9 788.9 L795.4 789.1 L795.9 789.1 L796.4 789.2 L796.9 788.9 L797.4 788.3 L797.9 788.1 L798.4 787.7 L798.9 787.6 L799.4 787.7 L799.9 787.8 L800.4 788.2 L800.9 788.6 L801.4 789.1 L801.9 789.0 L802.4 789.3 L802.9 789.0 L803.4 788.6 L803.9 788.3 L804.4 787.9 L804.9 787.7 L805.4 787.6 L805.9 787.6 L806.4 788.0 L806.9 788.3 L807.4 788.7 L807.9 789.0 L808.4 789.0 L808.9 789.0 L809.4 788.8 L809.9 788.4 L810.4 788.1 L810.9 787.8 L811.4 787.5 L811.9 787.6 L812.4 787.7 L812.9 788.0 L813.4 788.4 L813.9 789.0 L814.4 789.2 L814.9 789.2 L815.4 788.9 L815.9 788.6 L816.4 788.2 L816.9 787.9 L817.4 787.6 L817.9 787.4 L818.4 787.6 L818.9 788.0 L819.4 788.4 L819.9 788.6 L820.4 788.8 L820.9 789.2 L821.4 789.1 L821.9 788.8 L822.4 788.4 L822.9 788.1 L823.4 787.7 L823.9 787.5 L824.4 787.5 L824.9 787.7 L825.4 788.1 L825.9 788.4 L826.4 788.8 L826.9 789.1 L827.4 789.2 L827.9 789.1 L828.4 788.9 L828.9 788.3 L829.4 788.1 L829.9 787.6 L830.4 787.6 L830.9 787.6 L831.4 787.9 L831.9 788.1 L832.4 788.4 L832.9 788.8 L833.4 789.2 L833.9 789.2 L834.4 788.9 L834.9 788.5 L835.4 788.3 L835.9 787.9 L836.4 787.6 L836.9 787.6 L837.4 787.6 L837.9 787.9 L838.4 788.5 L838.9 788.8 L839.4 789.2 L839.9 789.2 L840.4 789.3 L840.9 789.0 L841.4 788.5 L841.9 788.3 L842.4 787.7 L842.9 787.5 L843.4 787.8 L843.9 787.8 L844.4 788.2 L844.9 788.7 L845.4 789.0 L845.9 789.1 L846.4 789.4 L846.9 789.0 L847.4 788.9 L847.9 788.6 L848.4 788.1 L848.9 787.8 L849.4 787.9 L849.9 787.9 L850.4 788.2 L850.9 788.6 L851.4 789.0 L851.9 789.3 L852.4 789.5 L852.9 789.4 L853.4 789.1 L853.9 788.8 L854.4 788.4 L854.9 788.0 L855.4 788.0 L855.9 787.9 L856.4 788.2 L856.9 788.3 L857.4 788.9 L857.9 789.1 L858.4 789.5 L858.9 789.5 L859.4 789.7 L859.9 789.3 L860.4 788.9 L860.9 788.4 L861.4 788.1 L861.9 788.1 L862.4 788.3 L862.9 788.4 L863.4 788.8 L863.9 789.3 L864.4 789.4 L864.9 789.7 L865.4 789.8 L865.9 789.6 L866.4 789.3 L866.9 789.0 L867.4 788.5 L867.9 788.4 L868.4 788.3 L868.9 788.5 L869.4 788.7 L869.9 789.3 L870.4 789.6 L870.9 790.0 L871.4 790.2 L871.9 790.0 L872.4 789.6 L872.9 789.4 L873.4 789.2 L873.9 788.8 L874.4 788.6 L874.9 788.6 L875.4 788.9 L875.9 789.3 L876.4 789.6 L876.9 790.0 L877.4 790.1 L877.9 790.1 L878.4 790.1 L878.9 789.9 L879.4 789.6 L879.9 789.2 L880.4 789.0 L880.9 788.6 L881.4 788.7 L881.9 789.1 L882.4 789.4 L882.9 790.0 L883.4 790.4 L883.9 790.6 L884.4 790.3 L884.9 790.3 L885.4 790.0 L885.9 789.6 L886.4 789.2 L886.9 789.0 L887.4 789.1 L887.9 789.3 L888.4 789.6 L888.9 790.0 L889.4 790.2 L889.9 790.5 L890.4 790.6 L890.9 790.5 L891.4 790.3 L891.9 790.1 L892.4 789.7 L892.9 789.2 L893.4 789.3 L893.9 789.1 L894.4 789.7 L894.9 789.9 L895.4 790.4 L895.9 790.6 L896.4 790.9 L896.9 791.0 L897.4 790.6 L897.9 790.3 L898.4 790.1 L898.9 789.6 L899.4 789.3 L899.9 789.4 L900.4 789.4 L900.9 789.7 L901.4 790.2 L901.9 790.5 L902.4 791.0 L902.9 791.1 L903.4 791.1 L903.9 790.7 L904.4 790.5 L904.9 790.2 L905.4 789.9 L905.9 789.4 L906.4 789.5 L906.9 789.6 L907.4 790.1 L907.9 790.6 L908.4 790.9 L908.9 791.1 L909.4 791.3 L909.9 791.1 L910.4 790.9 L910.9 790.3 L911.4 790.0 L911.9 789.6 L912.4 789.6 L912.9 789.8 L913.4 789.9 L913.9 790.4 L914.4 790.6 L914.9 791.1 L915.4 791.3 L915.9 791.2 L916.4 790.9 L916.9 790.6 L917.4 790.2 L917.9 790.0 L918.4 789.7 L918.9 789.6 L919.4 789.8 L919.9 790.1 L920.4 790.4 L920.9 790.9 L921.4 791.2 L921.9 791.2 L922.4 791.0 L922.9 791.0 L923.4 790.4 L923.9 790.0 L924.4 789.7 L924.9 789.8 L925.4 789.8 L925.9 790.0 L926.4 790.2 L926.9 790.8 L927.4 790.9 L927.9 791.1 L928.4 791.1 L928.9 791.1 L929.4 790.8 L929.9 790.4 L930.4 790.1 L930.9 789.8 L931.4 789.7 L931.9 789.7 L932.4 790.2 L932.9 790.6 L933.4 790.9 L933.9 791.0 L934.4 791.3 L934.9 791.2 L935.4 791.0 L935.9 790.5 L936.4 790.3 L936.9 790.0 L937.4 789.8 L937.9 789.6 L938.4 790.0 L938.9 790.1 L939.4 790.7 L939.9 790.8 L940.4 791.1 L940.9 791.1 L941.4 791.2 L941.9 791.0 L942.4 790.4 L942.9 790.1 L943.4 789.8 L943.9 789.8 L944.4 789.9 L944.9 790.1 L945.4 790.3 L945.9 790.6 L946.4 791.2 L946.9 791.2 L947.4 791.3 L947.9 791.1 L948.4 790.6 L948.9 790.2 L949.4 789.9 L949.9 789.8 L950.4 789.8 L950.9 790.0 L951.4 790.1 L951.9 790.6 L952.4 791.0 L952.9 791.1 L953.4 791.3 L953.9 791.1 L954.4 791.0 L954.9 790.5 L955.4 790.1 L955.9 789.9 L956.4 789.6 L956.9 789.8 L957.4 789.9 L957.9 790.3 L958.4 790.8 L958.9 791.1 L959.4 791.3 L959.9 791.4 L960.4 791.2 L960.9 790.7 L961.4 790.4 L961.9 790.1 L962.4 789.6 L962.9 789.7 L963.4 789.8 L963.9 790.0 L964.4 790.3 L964.9 790.8 L965.4 791.2 L965.9 791.4 L966.4 791.3 L966.9 791.0 L967.4 790.7 L967.9 790.3 L968.4 789.8 L968.9 789.7 L969.4 789.8 L969.9 790.0 L970.4 790.2 L970.9 790.7 L971.4 790.9 L971.9 791.2 L972.4 791.3 L972.9 791.2 L973.4 790.7 L973.9 790.5 L974.4 789.9 L974.9 789.7 L975.4 789.8 L975.9 789.9 L976.4 789.9 L976.9 790.5 L977.4 790.7 L977.9 791.1 L978.4 791.2 L978.9 791.1 L979.4 791.0 L979.9 790.7 L980.4 790.4 L980.9 789.8 L981.4 789.6 L981.9 789.5 L982.4 789.7 L982.9 790.1 L983.4 790.6 L983.9 791.0 L984.4 791.1 L984.9 791.3 L985.4 791.2 L985.9 790.9 L986.4 790.6 L986.9 790.3 L987.4 789.7 L987.9 789.6 L988.4 789.7 L988.9 790.0 L989.4 790.3 L989.9 790.8 L990.4 790.9 L990.9 791.2 L991.4 791.3 L991.9 791.0 L992.4 790.6 L992.9 790.4 L993.4 789.9 L993.9 789.7 L994.4 789.5 L994.9 789.7 L995.4 790.0 L995.9 790.5 L996.4 790.9 L996.9 791.2 L997.4 791.3 L997.9 791.2 L998.4 791.1 L998.9 790.6 L999.4 790.2 L999.9 789.7 L1000.4 789.6 L1000.9 789.7 L1001.4 790.0 L1001.9 790.3 L1002.4 790.5 L1002.9 791.1 L1003.4 791.1 L1003.9 791.3 L1004.4 791.0 L1004.9 790.7 L1005.4 790.5 L1005.9 790.0 L1006.4 789.8 L1006.9 789.7 L1007.4 789.8 L1007.9 790.0 L1008.4 790.3 L1008.9 790.8 L1009.4 791.0 L1009.9 791.2 L1010.4 791.3 L1010.9 791.0 L1011.4 790.7 L1011.9 790.3 L1012.4 789.9 L1012.9 789.8 L1013.4 789.6 L1013.9 789.7 L1014.4 790.3 L1014.9 790.6 L1015.4 791.0 L1015.9 791.3 L1016.4 791.2 L1016.9 791.1 L1017.4 790.9 L1017.9 790.6 L1018.4 790.0 L1018.9 789.9 L1019.4 789.8 L1019.9 789.6 L1020.4 789.8 L1020.9 790.2 L1021.4 790.7 L1021.9 790.9 L1022.4 791.4 L1022.9 791.1 L1023.4 791.2 L1023.9 790.7 L1024.4 790.5 L1024.9 789.9 L1025.4 789.6 L1025.9 789.7 L1026.4 789.7 L1026.9 790.2 L1027.4 790.6 L1027.9 790.8 L1028.4 791.1 L1028.9 791.3 L1029.4 791.3 L1029.9 790.9 L1030.4 790.6 L1030.9 790.2 L1031.4 789.9 L1031.9 789.7 L1032.4 789.7 L1032.9 789.9 L1033.4 790.2 L1033.9 790.8 L1034.4 791.0 L1034.9 791.1 L1035.4 791.2 L1035.9 791.2 L1036.4 790.9 L1036.9 790.3 L1037.4 790.0 L1037.9 789.8 L1038.4 789.8 L1038.9 789.7 L1039.4 790.1 L1039.9 790.5 L1039.9 950.1 L1039.4 950.3 L1038.9 950.8 L1038.4 951.1 L1037.9 951.5 L1037.4 951.7 L1036.9 951.8 L1036.4 951.5 L1035.9 951.1 L1035.4 950.9 L1034.9 950.6 L1034.4 950.2 L1033.9 950.0 L1033.4 950.3 L1032.9 950.6 L1032.4 951.0 L1031.9 951.3 L1031.4 951.6 L1030.9 951.7 L1030.4 951.6 L1029.9 951.5 L1029.4 951.0 L1028.9 950.7 L1028.4 950.3 L1027.9 950.2 L1027.4 950.1 L1026.9 950.2 L1026.4 950.8 L1025.9 951.0 L1025.4 951.6 L1024.9 951.7 L1024.4 951.6 L1023.9 951.6 L1023.4 951.2 L1022.9 951.0 L1022.4 950.4 L1021.9 950.3 L1021.4 950.1 L1020.9 950.3 L1020.4 950.6 L1019.9 950.9 L1019.4 951.1 L1018.9 951.5 L1018.4 951.8 L1017.9 951.6 L1017.4 951.5 L1016.9 951.2 L1016.4 950.8 L1015.9 950.3 L1015.4 950.1 L1014.9 950.1 L1014.4 950.2 L1013.9 950.8 L1013.4 951.1 L1012.9 951.3 L1012.4 951.7 L1011.9 951.7 L1011.4 951.6 L1010.9 951.4 L1010.4 950.9 L1009.9 950.7 L1009.4 950.4 L1008.9 950.1 L1008.4 950.2 L1007.9 950.4 L1007.4 950.7 L1006.9 951.1 L1006.4 951.5 L1005.9 951.7 L1005.4 951.6 L1004.9 951.7 L1004.4 951.3 L1003.9 950.8 L1003.4 950.5 L1002.9 950.1 L1002.4 950.3 L1001.9 950.2 L1001.4 950.4 L1000.9 950.9 L1000.4 951.4 L999.9 951.7 L999.4 951.7 L998.9 951.6 L998.4 951.3 L997.9 951.1 L997.4 950.6 L996.9 950.3 L996.4 950.1 L995.9 950.1 L995.4 950.4 L994.9 950.8 L994.4 951.2 L993.9 951.4 L993.4 951.8 L992.9 951.7 L992.4 951.7 L991.9 951.4 L991.4 950.8 L990.9 950.5 L990.4 950.4 L989.9 950.0 L989.4 950.2 L988.9 950.4 L988.4 950.8 L987.9 951.3 L987.4 951.7 L986.9 951.6 L986.4 951.6 L985.9 951.5 L985.4 951.1 L984.9 950.7 L984.4 950.5 L983.9 950.0 L983.4 950.1 L982.9 950.4 L982.4 950.7 L981.9 951.2 L981.4 951.5 L980.9 951.8 L980.4 951.6 L979.9 951.6 L979.4 951.4 L978.9 951.1 L978.4 950.6 L977.9 950.3 L977.4 950.2 L976.9 950.1 L976.4 950.5 L975.9 950.7 L975.4 951.1 L974.9 951.6 L974.4 951.8 L973.9 951.7 L973.4 951.7 L972.9 951.2 L972.4 950.8 L971.9 950.5 L971.4 950.2 L970.9 950.1 L970.4 950.3 L969.9 950.5 L969.4 950.8 L968.9 951.3 L968.4 951.7 L967.9 951.6 L967.4 951.6 L966.9 951.3 L966.4 950.9 L965.9 950.6 L965.4 950.3 L964.9 950.2 L964.4 950.3 L963.9 950.4 L963.4 950.7 L962.9 951.0 L962.4 951.6 L961.9 951.6 L961.4 951.7 L960.9 951.6 L960.4 951.2 L959.9 950.8 L959.4 950.5 L958.9 950.2 L958.4 950.1 L957.9 950.2 L957.4 950.5 L956.9 950.8 L956.4 951.3 L955.9 951.5 L955.4 951.7 L954.9 951.7 L954.4 951.4 L953.9 951.2 L953.4 950.7 L952.9 950.4 L952.4 950.1 L951.9 950.1 L951.4 950.4 L950.9 950.5 L950.4 950.9 L949.9 951.3 L949.4 951.7 L948.9 951.8 L948.4 951.7 L947.9 951.2 L947.4 950.9 L946.9 950.7 L946.4 950.2 L945.9 950.3 L945.4 950.2 L944.9 950.3 L944.4 950.6 L943.9 951.1 L943.4 951.5 L942.9 951.7 L942.4 951.7 L941.9 951.4 L941.4 951.2 L940.9 950.9 L940.4 950.6 L939.9 950.4 L939.4 950.1 L938.9 950.4 L938.4 950.5 L937.9 951.0 L937.4 951.2 L936.9 951.5 L936.4 951.7 L935.9 951.7 L935.4 951.4 L934.9 951.1 L934.4 950.6 L933.9 950.5 L933.4 950.1 L932.9 950.0 L932.4 950.2 L931.9 950.8 L931.4 951.0 L930.9 951.4 L930.4 951.5 L929.9 951.7 L929.4 951.6 L928.9 951.3 L928.4 951.0 L927.9 950.6 L927.4 950.4 L926.9 950.0 L926.4 950.3 L925.9 950.4 L925.4 950.7 L924.9 951.2 L924.4 951.6 L923.9 951.8 L923.4 951.8 L922.9 951.4 L922.4 951.3 L921.9 950.8 L921.4 950.4 L920.9 950.2 L920.4 950.3 L919.9 950.4 L919.4 950.7 L918.9 951.1 L918.4 951.4 L917.9 951.6 L917.4 951.8 L916.9 951.7 L916.4 951.5 L915.9 951.0 L915.4 950.6 L914.9 950.3 L914.4 950.3 L913.9 950.2 L913.4 950.5 L912.9 950.8 L912.4 951.2 L911.9 951.7 L911.4 951.7 L910.9 951.8 L910.4 951.5 L909.9 951.2 L909.4 950.8 L908.9 950.6 L908.4 950.3 L907.9 950.2 L907.4 950.4 L906.9 950.8 L906.4 951.1 L905.9 951.6 L905.4 951.6 L904.9 951.7 L904.4 951.7 L903.9 951.7 L903.4 951.2 L902.9 950.8 L902.4 950.5 L901.9 950.5 L901.4 950.5 L900.9 950.7 L900.4 951.0 L899.9 951.4 L899.4 951.9 L898.9 952.1 L898.4 952.0 L897.9 952.0 L897.4 951.7 L896.9 951.1 L896.4 950.8 L895.9 950.7 L895.4 950.5 L894.9 950.6 L894.4 950.8 L893.9 951.4 L893.4 951.6 L892.9 952.1 L892.4 952.2 L891.9 952.1 L891.4 952.1 L890.9 951.7 L890.4 951.4 L889.9 951.0 L889.4 950.9 L888.9 950.7 L888.4 950.9 L887.9 951.1 L887.4 951.5 L886.9 952.1 L886.4 952.4 L885.9 952.4 L885.4 952.3 L884.9 952.0 L884.4 951.9 L883.9 951.2 L883.4 950.9 L882.9 950.9 L882.4 951.2 L881.9 951.3 L881.4 951.8 L880.9 952.2 L880.4 952.3 L879.9 952.5 L879.4 952.5 L878.9 952.4 L878.4 952.3 L877.9 952.0 L877.4 951.6 L876.9 951.2 L876.4 951.1 L875.9 951.2 L875.4 951.5 L874.9 952.0 L874.4 952.4 L873.9 952.7 L873.4 952.7 L872.9 952.9 L872.4 952.8 L871.9 952.2 L871.4 951.8 L870.9 951.5 L870.4 951.4 L869.9 951.4 L869.4 951.8 L868.9 952.0 L868.4 952.5 L867.9 952.7 L867.4 953.2 L866.9 953.1 L866.4 953.0 L865.9 952.8 L865.4 952.4 L864.9 952.0 L864.4 951.9 L863.9 951.5 L863.4 951.7 L862.9 952.0 L862.4 952.3 L861.9 952.8 L861.4 953.3 L860.9 953.4 L860.4 953.3 L859.9 953.1 L859.4 952.6 L858.9 952.5 L858.4 952.1 L857.9 952.0 L857.4 951.8 L856.9 952.2 L856.4 952.2 L855.9 952.8 L855.4 953.1 L854.9 953.6 L854.4 953.6 L853.9 953.5 L853.4 953.2 L852.9 952.8 L852.4 952.3 L851.9 952.1 L851.4 951.9 L850.9 951.9 L850.4 952.2 L849.9 952.6 L849.4 952.9 L848.9 953.5 L848.4 953.6 L847.9 953.5 L847.4 953.5 L846.9 953.3 L846.4 952.7 L845.9 952.5 L845.4 952.2 L844.9 952.1 L844.4 952.3 L843.9 952.7 L843.4 952.9 L842.9 953.5 L842.4 953.8 L841.9 953.7 L841.4 953.7 L840.9 953.4 L840.4 953.0 L839.9 952.8 L839.4 952.3 L838.9 952.2 L838.4 952.2 L837.9 952.5 L837.4 952.9 L836.9 953.2 L836.4 953.6 L835.9 953.8 L835.4 953.7 L834.9 953.8 L834.4 953.4 L833.9 952.9 L833.4 952.5 L832.9 952.5 L832.4 952.4 L831.9 952.4 L831.4 952.6 L830.9 953.0 L830.4 953.3 L829.9 953.7 L829.4 953.8 L828.9 953.9 L828.4 953.5 L827.9 953.2 L827.4 952.8 L826.9 952.5 L826.4 952.3 L825.9 952.3 L825.4 952.3 L824.9 952.7 L824.4 953.2 L823.9 953.6 L823.4 953.8 L822.9 953.9 L822.4 953.9 L821.9 953.5 L821.4 953.1 L820.9 952.6 L820.4 952.6 L819.9 952.4 L819.4 952.2 L818.9 952.5 L818.4 952.9 L817.9 953.4 L817.4 953.6 L816.9 953.9 L816.4 953.9 L815.9 953.8 L815.4 953.4 L814.9 952.8 L814.4 952.4 L813.9 952.2 L813.4 952.4 L812.9 952.5 L812.4 952.7 L811.9 953.0 L811.4 953.5 L810.9 953.6 L810.4 953.8 L809.9 953.8 L809.4 953.6 L808.9 953.2 L808.4 952.9 L807.9 952.5 L807.4 952.3 L806.9 952.3 L806.4 952.5 L805.9 952.8 L805.4 953.2 L804.9 953.5 L804.4 953.7 L803.9 953.8 L803.4 953.8 L802.9 953.3 L802.4 952.9 L801.9 952.7 L801.4 952.2 L800.9 952.2 L800.4 952.4 L799.9 952.6 L799.4 952.8 L798.9 953.3 L798.4 953.7 L797.9 953.7 L797.4 953.9 L796.9 953.5 L796.4 953.1 L795.9 952.9 L795.4 952.5 L794.9 952.2 L794.4 952.1 L793.9 952.4 L793.4 952.6 L792.9 953.0 L792.4 953.4 L791.9 953.7 L791.4 953.9 L790.9 953.8 L790.4 953.4 L789.9 953.1 L789.4 952.5 L788.9 952.3 L788.4 952.0 L787.9 952.3 L787.4 952.4 L786.9 952.7 L786.4 953.1 L785.9 953.6 L785.4 953.8 L784.9 953.6 L784.4 953.6 L783.9 953.1 L783.4 952.7 L782.9 952.5 L782.4 952.0 L781.9 952.1 L781.4 952.4 L780.9 952.6 L780.4 952.9 L779.9 953.2 L779.4 953.4 L778.9 953.6 L778.4 953.7 L777.9 953.3 L777.4 952.9 L776.9 952.5 L776.4 952.2 L775.9 952.2 L775.4 952.2 L774.9 952.2 L774.4 952.7 L773.9 952.9 L773.4 953.2 L772.9 953.6 L772.4 953.6 L771.9 953.3 L771.4 953.0 L770.9 952.6 L770.4 952.4 L769.9 952.0 L769.4 952.1 L768.9 952.2 L768.4 952.5 L767.9 952.5 L767.4 953.2 L766.9 953.3 L766.4 953.5 L765.9 953.4 L765.4 953.2 L764.9 952.9 L764.4 952.6 L763.9 952.3 L763.4 951.9 L762.9 952.0 L762.4 952.2 L761.9 952.5 L761.4 952.8 L760.9 953.1 L760.4 953.5 L759.9 953.5 L759.4 953.4 L758.9 952.9 L758.4 952.8 L757.9 952.3 L757.4 951.9 L756.9 951.8 L756.4 951.8 L755.9 952.2 L755.4 952.4 L754.9 952.9 L754.4 953.3 L753.9 953.2 L753.4 953.3 L752.9 953.0 L752.4 952.7 L751.9 952.5 L751.4 951.9 L750.9 951.9 L750.4 951.7 L749.9 951.8 L749.4 952.1 L748.9 952.3 L748.4 953.0 L747.9 953.0 L747.4 953.2 L746.9 953.2 L746.4 953.0 L745.9 952.4 L745.4 952.2 L744.9 951.9 L744.4 951.5 L743.9 951.7 L743.4 951.9 L742.9 952.0 L742.4 952.4 L741.9 952.7 L741.4 952.9 L740.9 953.0 L740.4 953.0 L739.9 952.7 L739.4 952.2 L738.9 951.8 L738.4 951.6 L737.9 951.5 L737.4 951.5 L736.9 951.7 L736.4 952.0 L735.9 952.5 L735.4 952.7 L734.9 953.0 L734.4 952.8 L733.9 952.5 L733.4 952.4 L732.9 952.0 L732.4 951.4 L731.9 951.2 L731.4 951.3 L730.9 951.4 L730.4 951.7 L729.9 952.1 L729.4 952.4 L728.9 952.6 L728.4 952.7 L727.9 952.5 L727.4 952.4 L726.9 952.0 L726.4 951.5 L725.9 951.3 L725.4 951.0 L724.9 951.0 L724.4 951.2 L723.9 951.5 L723.4 951.9 L722.9 952.3 L722.4 952.6 L721.9 952.6 L721.4 952.3 L720.9 952.0 L720.4 951.7 L719.9 951.3 L719.4 951.0 L718.9 950.8 L718.4 950.8 L717.9 951.2 L717.4 951.5 L716.9 952.1 L716.4 952.3 L715.9 952.2 L715.4 952.3 L714.9 951.9 L714.4 951.6 L713.9 951.2 L713.4 950.7 L712.9 950.7 L712.4 950.6 L711.9 950.9 L711.4 951.1 L710.9 951.4 L710.4 951.8 L709.9 951.9 L709.4 952.0 L708.9 951.9 L708.4 951.6 L707.9 951.1 L707.4 950.6 L706.9 950.5 L706.4 950.2 L705.9 950.3 L705.4 950.6 L704.9 951.0 L704.4 951.3 L703.9 951.6 L703.4 951.9 L702.9 951.8 L702.4 951.4 L701.9 951.2 L701.4 950.5 L700.9 949.8 L700.4 949.1 L699.9 948.3 L699.4 947.4 L698.9 946.7 L698.4 946.1 L697.9 945.1 L697.4 944.1 L696.9 942.9 L696.4 940.8 L695.9 938.2 L695.4 934.9 L694.9 931.3 L694.4 927.7 L693.9 924.1 L693.4 920.6 L692.9 917.5 L692.4 914.5 L691.9 911.1 L691.4 907.5 L690.9 903.6 L690.4 899.7 L689.9 895.6 L689.4 891.9 L688.9 888.3 L688.4 885.7 L687.9 883.5 L687.4 881.7 L686.9 880.1 L686.4 878.8 L685.9 878.5 L685.4 877.2 L684.9 875.9 L684.4 874.8 L683.9 873.9 L683.4 873.2 L682.9 872.7 L682.4 872.4 L681.9 872.2 L681.4 872.1 L680.9 871.9 L680.4 871.8 L679.9 871.8 L679.4 871.8 L678.9 871.8 L678.4 871.8 L677.9 871.8 L677.4 871.8 L676.9 871.8 L676.4 871.8 L675.9 871.8 L675.4 871.8 L674.9 871.8 L674.4 871.8 L673.9 871.8 L673.4 871.8 L672.9 871.8 L672.4 871.8 L671.9 871.8 L671.4 871.8 L670.9 871.8 L670.4 871.8 L669.9 871.8 L669.4 871.8 L668.9 871.8 L668.4 871.8 L667.9 871.8 L667.4 871.8 L666.9 871.8 L666.4 871.8 L665.9 871.8 L665.4 871.8 L664.9 871.8 L664.4 871.8 L663.9 871.8 L663.4 871.8 L662.9 871.8 L662.4 871.8 L661.9 871.8 L661.4 871.8 L660.9 871.8 L660.4 871.8 L659.9 871.8 L659.4 871.8 L658.9 871.8 L658.4 871.8 L657.9 871.8 L657.4 871.8 L656.9 871.8 L656.4 871.8 L655.9 871.8 L655.4 871.8 L654.9 871.8 L654.4 871.8 L653.9 871.8 L653.4 871.8 L652.9 871.8 L652.4 871.8 L651.9 871.8 L651.4 871.8 L650.9 871.8 L650.4 871.8 L649.9 871.8 L649.4 871.8 L648.9 871.8 L648.4 871.8 L647.9 871.8 L647.4 871.8 L646.9 871.8 L646.4 871.8 L645.9 871.8 L645.4 871.8 L644.9 871.8 L644.4 871.8 L643.9 871.8 L643.4 871.8 L642.9 871.8 L642.4 871.8 L641.9 871.8 L641.4 871.8 L640.9 871.8 L640.4 871.8 L639.9 871.8 L639.4 871.8 L638.9 871.8 L638.4 871.8 L637.9 871.8 L637.4 871.8 L636.9 871.8 L636.4 871.8 L635.9 871.8 L635.4 871.8 L634.9 871.8 L634.4 871.8 L633.9 871.8 L633.4 871.8 L632.9 871.8 L632.4 871.8 L631.9 871.8 L631.4 871.8 L630.9 871.8 L630.4 871.8 L629.9 871.8 L629.4 871.8 L628.9 871.8 L628.4 871.8 L627.9 871.8 L627.4 871.8 L626.9 871.8 L626.4 871.8 L625.9 871.8 L625.4 871.8 L624.9 871.8 L624.4 871.8 L623.9 871.8 L623.4 871.8 L622.9 871.8 L622.4 871.8 L621.9 871.8 L621.4 871.8 L620.9 871.8 L620.4 871.8 L619.9 871.8 L619.4 871.8 L618.9 871.8 L618.4 871.8 L617.9 871.8 L617.4 871.8 L616.9 871.8 L616.4 871.8 L615.9 871.8 L615.4 871.8 L614.9 871.8 L614.4 871.8 L613.9 871.8 L613.4 871.8 L612.9 871.8 L612.4 871.8 L611.9 871.8 L611.4 871.8 L610.9 871.8 L610.4 871.8 L609.9 871.8 L609.4 871.8 L608.9 871.8 L608.4 871.8 L607.9 871.8 L607.4 871.8 L606.9 871.8 L606.4 871.8 L605.9 871.8 L605.4 871.8 L604.9 871.8 L604.4 871.8 L603.9 871.8 L603.4 871.8 L602.9 871.8 L602.4 871.8 L601.9 871.8 L601.4 871.8 L600.9 871.8 L600.4 871.8 L599.9 871.8 L599.4 871.8 L598.9 871.8 L598.4 871.8 L597.9 871.8 L597.4 871.8 L596.9 871.8 L596.4 871.8 L595.9 871.8 L595.4 871.8 L594.9 871.8 L594.4 871.8 L593.9 871.8 L593.4 871.8 L592.9 871.8 L592.4 871.8 L591.9 871.8 L591.4 871.8 L590.9 871.8 L590.4 871.8 L589.9 871.8 L589.4 871.8 L588.9 871.8 L588.4 871.8 L587.9 871.8 L587.4 871.8 L586.9 871.8 L586.4 871.8 L585.9 871.8 L585.4 871.8 L584.9 871.8 L584.4 871.8 L583.9 871.8 L583.4 871.8 L582.9 871.8 L582.4 871.8 L581.9 871.8 L581.4 871.8 L580.9 871.8 L580.4 871.8 L579.9 871.8 L579.4 871.8 L578.9 871.8 L578.4 871.8 L577.9 871.8 L577.4 871.8 L576.9 871.8 L576.4 871.8 L575.9 871.8 L575.4 871.8 L574.9 871.8 L574.4 871.8 L573.9 871.8 L573.4 871.8 L572.9 871.8 L572.4 871.8 L571.9 871.8 L571.4 871.8 L570.9 871.8 L570.4 871.8 L569.9 871.8 L569.4 871.8 L568.9 871.8 L568.4 871.8 L567.9 871.8 L567.4 871.8 L566.9 871.8 L566.4 871.8 L565.9 871.8 L565.4 871.8 L564.9 871.8 L564.4 871.8 L563.9 871.8 L563.4 871.8 L562.9 871.8 L562.4 871.8 L561.9 871.8 L561.4 871.8 L560.9 871.8 L560.4 871.8 L559.9 871.8 L559.4 871.8 L558.9 871.8 L558.4 871.8 L557.9 871.8 L557.4 871.8 L556.9 871.8 L556.4 871.8 L555.9 871.8 L555.4 871.8 L554.9 871.8 L554.4 871.8 L553.9 871.8 L553.4 871.8 L552.9 871.8 L552.4 871.8 L551.9 871.8 L551.4 871.8 L550.9 871.8 L550.4 871.8 L549.9 871.8 L549.4 871.8 L548.9 871.8 L548.4 871.8 L547.9 871.8 L547.4 871.8 L546.9 871.8 L546.4 871.8 L545.9 871.8 L545.4 871.8 L544.9 871.8 L544.4 871.8 L543.9 871.8 L543.4 871.8 L542.9 871.8 L542.4 871.8 L541.9 871.8 L541.4 871.8 L540.9 871.8 L540.4 871.8 L539.9 871.8 L539.4 871.8 L538.9 871.8 L538.4 871.8 L537.9 871.8 L537.4 871.8 L536.9 871.8 L536.4 871.8 L535.9 871.8 L535.4 871.8 L534.9 871.8 L534.4 871.8 L533.9 871.8 L533.4 871.8 L532.9 871.8 L532.4 871.8 L531.9 871.8 L531.4 871.8 L530.9 871.8 L530.4 871.8 L529.9 871.8 L529.4 871.8 L528.9 871.8 L528.4 871.8 L527.9 871.8 L527.4 871.8 L526.9 871.8 L526.4 871.8 L525.9 871.8 L525.4 871.8 L524.9 871.8 L524.4 871.8 L523.9 871.8 L523.4 871.8 L522.9 871.8 L522.4 871.8 L521.9 871.8 L521.4 871.8 L520.9 871.8 L520.4 871.8 L519.9 871.8 L519.4 871.8 L518.9 871.8 L518.4 871.8 L517.9 871.8 L517.4 871.8 L516.9 871.8 L516.4 871.8 L515.9 871.8 L515.4 871.8 L514.9 871.8 L514.4 871.8 L513.9 871.8 L513.4 871.8 L512.9 871.8 L512.4 871.8 L511.9 871.8 L511.4 871.8 L510.9 871.8 L510.4 871.8 L509.9 871.8 L509.4 871.8 L508.9 871.8 L508.4 871.8 L507.9 871.8 L507.4 871.8 L506.9 871.8 L506.4 871.8 L505.9 871.8 L505.4 871.8 L504.9 871.8 L504.4 871.8 L503.9 871.8 L503.4 871.8 L502.9 871.8 L502.4 871.8 L501.9 871.8 L501.4 871.8 L500.9 871.8 L500.4 871.8 L499.9 871.8 L499.4 871.8 L498.9 871.8 L498.4 871.8 L497.9 871.8 L497.4 871.8 L496.9 871.8 L496.4 871.8 L495.9 871.8 L495.4 871.8 L494.9 871.8 L494.4 871.8 L493.9 871.8 L493.4 871.8 L492.9 871.8 L492.4 871.8 L491.9 871.8 L491.4 871.8 L490.9 871.8 L490.4 871.8 L489.9 871.8 L489.4 871.8 L488.9 871.8 L488.4 871.8 L487.9 871.8 L487.4 871.8 L486.9 871.8 L486.4 871.8 L485.9 871.8 L485.4 871.8 L484.9 871.8 L484.4 871.8 L483.9 871.8 L483.4 871.8 L482.9 871.8 L482.4 871.8 L481.9 871.8 L481.4 871.8 L480.9 871.8 L480.4 871.8 L479.9 871.8 L479.4 871.8 L478.9 871.8 L478.4 871.8 L477.9 871.8 L477.4 871.8 L476.9 871.8 L476.4 871.8 L475.9 871.8 L475.4 871.8 L474.9 871.8 L474.4 871.8 L473.9 871.8 L473.4 871.8 L472.9 871.8 L472.4 871.8 L471.9 871.8 L471.4 871.8 L470.9 871.8 L470.4 871.8 L469.9 871.8 L469.4 871.8 L468.9 871.8 L468.4 871.8 L467.9 871.8 L467.4 871.8 L466.9 871.8 L466.4 871.8 L465.9 871.8 L465.4 871.8 L464.9 871.8 L464.4 871.8 L463.9 871.8 L463.4 871.8 L462.9 871.8 L462.4 871.8 L461.9 871.8 L461.4 871.8 L460.9 871.8 L460.4 871.8 L459.9 871.8 L459.4 871.8 L458.9 871.8 L458.4 871.8 L457.9 871.8 L457.4 871.8 L456.9 871.8 L456.4 871.8 L455.9 871.8 L455.4 871.8 L454.9 871.8 L454.4 871.8 L453.9 871.8 L453.4 871.8 L452.9 871.8 L452.4 871.8 L451.9 871.8 L451.4 871.8 L450.9 871.8 L450.4 871.8 L449.9 871.8 L449.4 871.8 L448.9 871.8 L448.4 871.8 L447.9 871.8 L447.4 871.8 L446.9 871.8 L446.4 871.8 L445.9 871.8 L445.4 871.8 L444.9 871.8 L444.4 871.8 L443.9 871.8 L443.4 871.8 L442.9 871.8 L442.4 871.8 L441.9 871.8 L441.4 871.8 L440.9 871.8 L440.4 871.8 L439.9 871.8 L439.4 871.8 L438.9 871.8 L438.4 871.8 L437.9 871.8 L437.4 871.8 L436.9 871.8 L436.4 871.8 L435.9 871.8 L435.4 871.8 L434.9 871.8 L434.4 871.8 L433.9 871.8 L433.4 871.8 L432.9 871.8 L432.4 871.8 L431.9 871.8 L431.4 871.8 L430.9 871.8 L430.4 871.8 L429.9 871.8 L429.4 871.8 L428.9 871.8 L428.4 871.8 L427.9 871.8 L427.4 871.8 L426.9 871.8 L426.4 871.8 L425.9 871.8 L425.4 871.8 L424.9 871.8 L424.4 871.8 L423.9 871.8 L423.4 871.8 L422.9 871.8 L422.4 871.8 L421.9 871.8 L421.4 871.8 L420.9 871.8 L420.4 871.8 L419.9 871.8 L419.4 871.8 L418.9 871.8 L418.4 871.8 L417.9 871.8 L417.4 871.8 L416.9 871.8 L416.4 871.8 L415.9 871.8 L415.4 871.8 L414.9 871.8 L414.4 871.8 L413.9 871.8 L413.4 871.8 L412.9 871.8 L412.4 871.8 L411.9 871.8 L411.4 871.8 L410.9 871.8 L410.4 871.8 L409.9 871.8 L409.4 871.8 L408.9 871.8 L408.4 871.8 L407.9 871.8 L407.4 871.8 L406.9 871.8 L406.4 871.8 L405.9 871.8 L405.4 871.8 L404.9 871.8 L404.4 871.8 L403.9 871.8 L403.4 871.8 L402.9 871.8 L402.4 871.8 L401.9 871.8 L401.4 871.8 L400.9 871.8 L400.4 871.8 L399.9 871.8 L399.4 871.8 L398.9 871.8 L398.4 871.8 L397.9 871.8 L397.4 871.8 L396.9 871.8 L396.4 871.8 L395.9 871.8 L395.4 871.8 L394.9 871.8 L394.4 871.8 L393.9 871.8 L393.4 871.8 L392.9 871.8 L392.4 871.8 L391.9 871.8 L391.4 871.8 L390.9 871.8 L390.4 871.8 L389.9 871.8 L389.4 871.8 L388.9 871.8 L388.4 871.8 L387.9 871.8 L387.4 871.8 L386.9 871.8 L386.4 871.8 L385.9 871.8 L385.4 871.8 L384.9 871.8 L384.4 871.8 L383.9 871.8 L383.4 871.8 L382.9 871.8 L382.4 871.8 L381.9 871.8 L381.4 871.8 L380.9 871.8 L380.4 871.8 L379.9 871.8 L379.4 871.8 L378.9 871.8 L378.4 871.8 L377.9 871.8 L377.4 871.8 L376.9 871.8 L376.4 871.8 L375.9 871.8 L375.4 871.8 L374.9 871.8 L374.4 871.8 L373.9 871.8 L373.4 871.8 L372.9 871.8 L372.4 871.8 L371.9 871.8 L371.4 871.8 L370.9 871.8 L370.4 871.8 L369.9 871.8 L369.4 871.8 L368.9 871.8 L368.4 871.8 L367.9 871.8 L367.4 871.8 L366.9 871.8 L366.4 871.8 L365.9 871.8 L365.4 871.8 L364.9 871.8 L364.4 871.8 L363.9 871.8 L363.4 871.8 L362.9 871.8 L362.4 871.8 L361.9 871.8 L361.4 871.8 L360.9 871.8 L360.4 871.8 L359.9 871.8 L359.4 871.8 L358.9 871.8 L358.4 871.8 L357.9 871.8 L357.4 871.8 L356.9 871.8 L356.4 871.8 L355.9 871.8 L355.4 871.8 L354.9 871.8 L354.4 871.8 L353.9 871.8 L353.4 871.8 L352.9 871.8 L352.4 871.8 L351.9 871.8 L351.4 871.8 L350.9 871.8 L350.4 871.8 L349.9 871.8 L349.4 871.8 L348.9 871.8 L348.4 871.8 L347.9 871.8 L347.4 871.8 L346.9 871.8 L346.4 871.8 L345.9 871.8 L345.4 871.8 L344.9 871.8 L344.4 871.8 L343.9 871.8 L343.4 871.8 L342.9 871.8 L342.4 871.8 L341.9 871.8 L341.4 871.8 L340.9 871.8 L340.4 871.8 L339.9 871.8 L339.4 871.8 L338.9 871.8 L338.4 871.8 L337.9 871.8 L337.4 871.8 L336.9 871.8 L336.4 871.8 L335.9 871.8 L335.4 871.8 L334.9 871.8 L334.4 871.8 L333.9 871.8 L333.4 871.8 L332.9 871.8 L332.4 871.8 L331.9 871.8 L331.4 871.8 L330.9 871.8 L330.4 871.8 L329.9 871.8 L329.4 871.8 L328.9 871.8 L328.4 871.8 L327.9 871.8 L327.4 871.8 L326.9 871.8 L326.4 871.8 L325.9 871.8 L325.4 871.8 L324.9 871.8 L324.4 871.8 L323.9 871.8 L323.4 871.8 L322.9 871.8 L322.4 871.8 L321.9 871.8 L321.4 871.8 L320.9 871.8 L320.4 871.8 L319.9 871.8 L319.4 871.8 L318.9 871.8 L318.4 871.8 L317.9 871.8 L317.4 871.8 L316.9 871.8 L316.4 871.8 L315.9 871.8 L315.4 871.8 L314.9 871.8 L314.4 871.8 L313.9 871.8 L313.4 871.8 L312.9 871.8 L312.4 871.8 L311.9 871.8 L311.4 871.8 L310.9 871.8 L310.4 871.8 L309.9 871.8 L309.4 871.8 L308.9 871.8 L308.4 871.8 L307.9 871.8 L307.4 871.8 L306.9 871.8 L306.4 871.8 L305.9 871.8 L305.4 871.8 L304.9 871.8 L304.4 871.8 L303.9 871.8 L303.4 871.8 L302.9 871.8 L302.4 871.8 L301.9 871.8 L301.4 871.8 L300.9 871.8 L300.4 871.8 L299.9 871.8 L299.4 871.8 L298.9 871.8 L298.4 871.8 L297.9 871.8 L297.4 871.8 L296.9 871.8 L296.4 871.8 L295.9 871.8 L295.4 871.8 L294.9 871.8 L294.4 871.8 L293.9 871.8 L293.4 871.8 L292.9 871.8 L292.4 871.8 L291.9 871.8 L291.4 871.8 L290.9 871.8 L290.4 871.8 L289.9 871.8 L289.4 871.8 L288.9 871.8 L288.4 871.8 L287.9 871.8 L287.4 871.8 L286.9 871.8 L286.4 871.8 L285.9 871.8 L285.4 871.8 L284.9 871.8 L284.4 871.8 L283.9 871.8 L283.4 871.8 L282.9 871.8 L282.4 871.8 L281.9 871.8 L281.4 871.8 L280.9 871.8 L280.4 871.8 L279.9 871.8 L279.4 871.8 L278.9 871.8 L278.4 871.8 L277.9 871.8 L277.4 871.8 L276.9 871.8 L276.4 871.8 L275.9 871.8 L275.4 871.8 L274.9 871.8 L274.4 871.8 L273.9 871.8 L273.4 871.8 L272.9 871.8 L272.4 871.8 L271.9 871.8 L271.4 871.8 Z" fill="#4565a3"/><rect x="264.9" y="786" width="1.6" height="169" fill="#000"/><rect x="264.9" y="954" width="779.6" height="2" fill="#000"/><rect x="260.4" y="799.6" width="5" height="1" fill="#555"/><text x="258.4" y="804.1" font-size="11" text-anchor="end" font-family="Liberation Sans">4</text><rect x="260.4" y="817.2" width="5" height="1" fill="#555"/><text x="258.4" y="821.8" font-size="11" text-anchor="end" font-family="Liberation Sans">3</text><rect x="260.4" y="834.9" width="5" height="1" fill="#555"/><text x="258.4" y="839.4" font-size="11" text-anchor="end" font-family="Liberation Sans">2</text><rect x="260.4" y="852.6" width="5" height="1" fill="#555"/><text x="258.4" y="857.1" font-size="11" text-anchor="end" font-family="Liberation Sans">1</text><rect x="260.4" y="870.2" width="5" height="1" fill="#555"/><text x="258.4" y="874.7" font-size="11" text-anchor="end" font-family="Liberation Sans">0</text><rect x="260.4" y="887.9" width="5" height="1" fill="#555"/><text x="258.4" y="892.4" font-size="11" text-anchor="end" font-family="Liberation Sans">-1</text><rect x="260.4" y="905.5" width="5" height="1" fill="#555"/><text x="258.4" y="910.0" font-size="11" text-anchor="end" font-family="Liberation Sans">-2</text><rect x="260.4" y="923.2" width="5" height="1" fill="#555"/><text x="258.4" y="927.7" font-size="11" text-anchor="end" font-family="Liberation Sans">-3</text><rect x="260.4" y="940.8" width="5" height="1" fill="#555"/><text x="258.4" y="945.3" font-size="11" text-anchor="end" font-family="Liberation Sans">-4</text><rect x="262.4" y="949.6" width="3" height="1" fill="#555"/><rect x="262.4" y="945.2" width="3" height="1" fill="#555"/><rect x="262.4" y="940.8" width="3" height="1" fill="#555"/><rect x="262.4" y="936.4" width="3" height="1" fill="#555"/><rect x="262.4" y="932.0" width="3" height="1" fill="#555"/><rect x="262.4" y="927.6" width="3" height="1" fill="#555"/><rect x="262.4" y="923.2" width="3" height="1" fill="#555"/><rect x="262.4" y="918.7" width="3" height="1" fill="#555"/><rect x="262.4" y="914.3" width="3" height="1" fill="#555"/><rect x="262.4" y="909.9" width="3" height="1" fill="#555"/><rect x="262.4" y="905.5" width="3" height="1" fill="#555"/><rect x="262.4" y="901.1" width="3" height="1" fill="#555"/><rect x="262.4" y="896.7" width="3" height="1" fill="#555"/><rect x="262.4" y="892.3" width="3" height="1" fill="#555"/><rect x="262.4" y="887.9" width="3" height="1" fill="#555"/><rect x="262.4" y="883.4" width="3" height="1" fill="#555"/><rect x="262.4" y="879.0" width="3" height="1" fill="#555"/><rect x="262.4" y="874.6" width="3" height="1" fill="#555"/><rect x="262.4" y="870.2" width="3" height="1" fill="#555"/><rect x="262.4" y="865.8" width="3" height="1" fill="#555"/><rect x="262.4" y="861.4" width="3" height="1" fill="#555"/><rect x="262.4" y="857.0" width="3" height="1" fill="#555"/><rect x="262.4" y="852.6" width="3" height="1" fill="#555"/><rect x="262.4" y="848.1" width="3" height="1" fill="#555"/><rect x="262.4" y="843.7" width="3" height="1" fill="#555"/><rect x="262.4" y="839.3" width="3" height="1" fill="#555"/><rect x="262.4" y="834.9" width="3" height="1" fill="#555"/><rect x="262.4" y="830.5" width="3" height="1" fill="#555"/><rect x="262.4" y="826.1" width="3" height="1" fill="#555"/><rect x="262.4" y="821.7" width="3" height="1" fill="#555"/><rect x="262.4" y="817.2" width="3" height="1" fill="#555"/><rect x="262.4" y="812.8" width="3" height="1" fill="#555"/><rect x="262.4" y="808.4" width="3" height="1" fill="#555"/><rect x="262.4" y="804.0" width="3" height="1" fill="#555"/><rect x="262.4" y="799.6" width="3" height="1" fill="#555"/><rect x="262.4" y="795.2" width="3" height="1" fill="#555"/><rect x="262.4" y="790.8" width="3" height="1" fill="#555"/><rect x="270.9" y="956" width="1" height="4" fill="#555"/><text x="269.9" y="971" font-size="11" text-anchor="middle" font-family="Liberation Sans">0</text><rect x="281.7" y="956" width="1" height="2.5" fill="#777"/><rect x="292.5" y="956" width="1" height="2.5" fill="#777"/><rect x="303.3" y="956" width="1" height="2.5" fill="#777"/><rect x="314.1" y="956" width="1" height="4" fill="#555"/><text x="313.1" y="971" font-size="11" text-anchor="middle" font-family="Liberation Sans">200</text><rect x="324.9" y="956" width="1" height="2.5" fill="#777"/><rect x="335.7" y="956" width="1" height="2.5" fill="#777"/><rect x="346.5" y="956" width="1" height="2.5" fill="#777"/><rect x="357.3" y="956" width="1" height="4" fill="#555"/><text x="356.3" y="971" font-size="11" text-anchor="middle" font-family="Liberation Sans">400</text><rect x="368.1" y="956" width="1" height="2.5" fill="#777"/><rect x="378.8" y="956" width="1" height="2.5" fill="#777"/><rect x="389.6" y="956" width="1" height="2.5" fill="#777"/><rect x="400.4" y="956" width="1" height="4" fill="#555"/><text x="399.4" y="971" font-size="11" text-anchor="middle" font-family="Liberation Sans">600</text><rect x="411.2" y="956" width="1" height="2.5" fill="#777"/><rect x="422.0" y="956" width="1" height="2.5" fill="#777"/><rect x="432.8" y="956" width="1" height="2.5" fill="#777"/><rect x="443.6" y="956" width="1" height="4" fill="#555"/><text x="442.6" y="971" font-size="11" text-anchor="middle" font-family="Liberation Sans">800</text><rect x="454.4" y="956" width="1" height="2.5" fill="#777"/><rect x="465.2" y="956" width="1" height="2.5" fill="#777"/><rect x="476.0" y="956" width="1" height="2.5" fill="#777"/><rect x="486.8" y="956" width="1" height="4" fill="#555"/><text x="485.8" y="971" font-size="11" text-anchor="middle" font-family="Liberation Sans">1 000</text><rect x="497.6" y="956" width="1" height="2.5" fill="#777"/><rect x="508.4" y="956" width="1" height="2.5" fill="#777"/><rect x="519.2" y="956" width="1" height="2.5" fill="#777"/><rect x="530.0" y="956" width="1" height="4" fill="#555"/><text x="529.0" y="971" font-size="11" text-anchor="middle" font-family="Liberation Sans">1 200</text><rect x="540.8" y="956" width="1" height="2.5" fill="#777"/><rect x="551.6" y="956" width="1" height="2.5" fill="#777"/><rect x="562.4" y="956" width="1" height="2.5" fill="#777"/><rect x="573.2" y="956" width="1" height="4" fill="#555"/><text x="572.2" y="971" font-size="11" text-anchor="middle" font-family="Liberation Sans">1 400</text><rect x="584.0" y="956" width="1" height="2.5" fill="#777"/><rect x="594.8" y="956" width="1" height="2.5" fill="#777"/><rect x="605.5" y="956" width="1" height="2.5" fill="#777"/><rect x="616.3" y="956" width="1" height="4" fill="#555"/><text x="615.3" y="971" font-size="11" text-anchor="middle" font-family="Liberation Sans">1 600</text><rect x="627.1" y="956" width="1" height="2.5" fill="#777"/><rect x="637.9" y="956" width="1" height="2.5" fill="#777"/><rect x="648.7" y="956" width="1" height="2.5" fill="#777"/><rect x="659.5" y="956" width="1" height="4" fill="#555"/><text x="658.5" y="971" font-size="11" text-anchor="middle" font-family="Liberation Sans">1 800</text><rect x="670.3" y="956" width="1" height="2.5" fill="#777"/><rect x="681.1" y="956" width="1" height="2.5" fill="#777"/><rect x="691.9" y="956" width="1" height="2.5" fill="#777"/><rect x="702.7" y="956" width="1" height="4" fill="#555"/><text x="701.7" y="971" font-size="11" text-anchor="middle" font-family="Liberation Sans">2 000</text><rect x="713.5" y="956" width="1" height="2.5" fill="#777"/><rect x="724.3" y="956" width="1" height="2.5" fill="#777"/><rect x="735.1" y="956" width="1" height="2.5" fill="#777"/><rect x="745.9" y="956" width="1" height="4" fill="#555"/><text x="744.9" y="971" font-size="11" text-anchor="middle" font-family="Liberation Sans">2 200</text><rect x="756.7" y="956" width="1" height="2.5" fill="#777"/><rect x="767.5" y="956" width="1" height="2.5" fill="#777"/><rect x="778.3" y="956" width="1" height="2.5" fill="#777"/><rect x="789.1" y="956" width="1" height="4" fill="#555"/><text x="788.1" y="971" font-size="11" text-anchor="middle" font-family="Liberation Sans">2 400</text><rect x="799.9" y="956" width="1" height="2.5" fill="#777"/><rect x="810.6" y="956" width="1" height="2.5" fill="#777"/><rect x="821.4" y="956" width="1" height="2.5" fill="#777"/><rect x="832.2" y="956" width="1" height="4" fill="#555"/><text x="831.2" y="971" font-size="11" text-anchor="middle" font-family="Liberation Sans">2 600</text><rect x="843.0" y="956" width="1" height="2.5" fill="#777"/><rect x="853.8" y="956" width="1" height="2.5" fill="#777"/><rect x="864.6" y="956" width="1" height="2.5" fill="#777"/><rect x="875.4" y="956" width="1" height="4" fill="#555"/><text x="874.4" y="971" font-size="11" text-anchor="middle" font-family="Liberation Sans">2 800</text><rect x="886.2" y="956" width="1" height="2.5" fill="#777"/><rect x="897.0" y="956" width="1" height="2.5" fill="#777"/><rect x="907.8" y="956" width="1" height="2.5" fill="#777"/><rect x="918.6" y="956" width="1" height="4" fill="#555"/><text x="917.6" y="971" font-size="11" text-anchor="middle" font-family="Liberation Sans">3 000</text><rect x="929.4" y="956" width="1" height="2.5" fill="#777"/><rect x="940.2" y="956" width="1" height="2.5" fill="#777"/><rect x="951.0" y="956" width="1" height="2.5" fill="#777"/><rect x="961.8" y="956" width="1" height="4" fill="#555"/><text x="960.8" y="971" font-size="11" text-anchor="middle" font-family="Liberation Sans">3 200</text><rect x="972.6" y="956" width="1" height="2.5" fill="#777"/><rect x="983.4" y="956" width="1" height="2.5" fill="#777"/><rect x="994.2" y="956" width="1" height="2.5" fill="#777"/><rect x="1005.0" y="956" width="1" height="4" fill="#555"/><text x="1004.0" y="971" font-size="11" text-anchor="middle" font-family="Liberation Sans">3 400</text><rect x="1015.8" y="956" width="1" height="2.5" fill="#777"/><rect x="1026.5" y="956" width="1" height="2.5" fill="#777"/><rect x="1037.3" y="956" width="1" height="2.5" fill="#777"/><path d="M656 945 L659 954 L653 954 Z" fill="#f0a040"/></svg>
<div class="a" style="left:43px;top:722px;width:1028px;height:2px;background:#a0a0a0"></div>
<div class="a" style="left:1071px;top:723px;width:25px;height:1px;background:#a0a0a0"></div>
<div class="a" style="left:43px;top:727px;width:1053px;height:1px;background:#a0a0a0"></div>
<div class="a" style="left:43px;top:1002px;width:1053px;height:2px;background:#a0a0a0"></div>
<div class="a" style="left:1097px;top:446px;width:3px;height:558px;background:#ffffff"></div>
<div class="a" style="left:1100px;top:446px;width:1px;height:558px;background:#a0a0a0"></div>
<div class="a" style="left:1101px;top:446px;width:295px;height:558px;background:#f0f0f0"></div>
<div class="a" style="left:1396px;top:446px;width:1px;height:558px;background:#a0a0a0"></div>
<div class="a" style="left:1104px;top:454px;width:291px;height:39px;border:1px solid #dcdcdc;box-shadow:inset 1px 1px 0 #fff"></div>
<div class="a" style="left:1104px;top:500px;width:291px;height:27px;border:1px solid #dcdcdc;box-shadow:inset 1px 1px 0 #fff"></div>
<div class="t" style="left:1110px;top:449px;padding:0 3px;background:#f0f0f0;font-size:11px">Предельно допустимая скорость, км/ч</div>
<div class="t" style="left:1110px;top:495px;padding:0 3px;background:#f0f0f0;font-size:11px">Отображать параметры:</div>
<div class="t" style="left:1109px;width:40px;text-align:center;top:465px;font-size:11px;font-weight:bold">80</div>
<div class="a" style="left:1118px;top:478px;width:22px;height:12px;border-radius:2px;background:linear-gradient(#e4e4e4,#b8b8b8 50%,#a8a8a8);border:1px solid #8c8c8c"></div>
<div class="t" style="left:1157px;width:40px;text-align:center;top:465px;font-size:11px;font-weight:bold">70</div>
<div class="a" style="left:1166px;top:478px;width:22px;height:12px;border-radius:2px;background:linear-gradient(#e4e4e4,#b8b8b8 50%,#a8a8a8);border:1px solid #8c8c8c"></div>
<div class="t" style="left:1205px;width:40px;text-align:center;top:465px;font-size:11px;font-weight:bold">60</div>
<div class="a" style="left:1214px;top:478px;width:22px;height:12px;border-radius:2px;background:linear-gradient(#e4e4e4,#b8b8b8 50%,#a8a8a8);border:1px solid #8c8c8c"></div>
<div class="t" style="left:1253px;width:40px;text-align:center;top:465px;font-size:11px;font-weight:bold">40</div>
<div class="a" style="left:1262px;top:478px;width:22px;height:12px;border-radius:2px;background:linear-gradient(#e4e4e4,#b8b8b8 50%,#a8a8a8);border:1px solid #8c8c8c"></div>
<div class="t" style="left:1301px;width:40px;text-align:center;top:465px;font-size:11px;font-weight:bold">0</div>
<div class="a" style="left:1310px;top:478px;width:22px;height:12px;border-radius:2px;background:linear-gradient(#e4e4e4,#b8b8b8 50%,#a8a8a8);border:1px solid #8c8c8c"></div>
<div class="t" style="left:1349px;width:40px;text-align:center;top:465px;font-size:11px;font-weight:bold">ОЧ</div>
<div class="a" style="left:1358px;top:478px;width:22px;height:12px;border-radius:2px;background:linear-gradient(#f87080,#e8102a 50%,#d00a20);border:1px solid #a8101e"></div>
<div class="a" style="left:1111px;top:509px;width:13px;height:13px;border-radius:50%;background:#fff;border:1px solid #333"></div>
<div class="t" style="left:1127px;top:510px;font-size:11px">Антенны №1 (ПК 1)</div>
<div class="a" style="left:1252px;top:509px;width:13px;height:13px;border-radius:50%;background:#fff;border:1px solid #333"></div>
<div class="a" style="left:1255px;top:512px;width:7px;height:7px;border-radius:50%;background:#1a1a1a"></div>
<div class="t" style="left:1268px;top:510px;font-size:11px">Антенны №2 (ПК 2)</div>
<div class="t" style="left:1101px;width:295px;text-align:center;top:529px;font-size:11px">Параметры сигналов АРС и ТРЦ</div>
<div class="a" style="left:1103px;top:545px;width:292px;height:334px;background:#fff"></div>
<div class="a" style="left:1103px;top:545px;width:292px;height:24px;background:#f0f0f0"></div>
<div class="a" style="left:1103px;top:544px;width:292px;height:1px;background:#a0a0a0"></div>
<div class="a" style="left:1103px;top:544px;width:1px;height:335px;background:#a0a0a0"></div>
<div class="a" style="left:1176px;top:544px;width:1px;height:335px;background:#a0a0a0"></div>
<div class="a" style="left:1250px;top:544px;width:1px;height:335px;background:#a0a0a0"></div>
<div class="a" style="left:1324px;top:544px;width:1px;height:335px;background:#a0a0a0"></div>
<div class="a" style="left:1395px;top:544px;width:1px;height:335px;background:#a0a0a0"></div>
<div class="t" style="left:1103px;width:73px;text-align:center;top:547px;font-size:11px">Ном. fo, Гц</div>
<div class="t" style="left:1176px;width:74px;text-align:center;top:547px;font-size:11px">Изм. fo, Гц</div>
<div class="t" style="left:1250px;width:74px;text-align:center;top:547px;font-size:11px">Модул. F, Гц</div>
<div class="t" style="left:1324px;width:71px;text-align:center;top:547px;font-size:11px">Ток, А</div>
<div class="a" style="left:1103px;top:569px;width:292px;height:1px;background:#a0a0a0"></div>
<div class="t" style="left:1103px;width:73px;text-align:center;top:573px;font-size:11px">50</div>
<div class="a" style="left:1103px;top:595px;width:292px;height:1px;background:#a0a0a0"></div>
<div class="t" style="left:1103px;width:73px;text-align:center;top:599px;font-size:11px">75</div>
<div class="a" style="left:1103px;top:621px;width:292px;height:1px;background:#a0a0a0"></div>
<div class="t" style="left:1103px;width:73px;text-align:center;top:625px;font-size:11px">125</div>
<div class="a" style="left:1103px;top:647px;width:292px;height:1px;background:#a0a0a0"></div>
<div class="t" style="left:1103px;width:73px;text-align:center;top:651px;font-size:11px">175</div>
<div class="a" style="left:1103px;top:673px;width:292px;height:1px;background:#a0a0a0"></div>
<div class="t" style="left:1103px;width:73px;text-align:center;top:677px;font-size:11px">225</div>
<div class="a" style="left:1103px;top:699px;width:292px;height:1px;background:#a0a0a0"></div>
<div class="t" style="left:1103px;width:73px;text-align:center;top:703px;font-size:11px">275</div>
<div class="a" style="left:1103px;top:725px;width:292px;height:1px;background:#a0a0a0"></div>
<div class="t" style="left:1103px;width:73px;text-align:center;top:729px;font-size:11px">325</div>
<div class="a" style="left:1103px;top:751px;width:292px;height:1px;background:#a0a0a0"></div>
<div class="t" style="left:1103px;width:73px;text-align:center;top:755px;font-size:11px">425</div>
<div class="a" style="left:1103px;top:778px;width:292px;height:1px;background:#a0a0a0"></div>
<div class="t" style="left:1103px;width:73px;text-align:center;top:782px;font-size:11px">475</div>
<div class="a" style="left:1103px;top:804px;width:292px;height:1px;background:#a0a0a0"></div>
<div class="t" style="left:1103px;width:73px;text-align:center;top:808px;font-size:11px">580</div>
<div class="a" style="left:1103px;top:830px;width:292px;height:1px;background:#a0a0a0"></div>
<div class="t" style="left:1103px;width:73px;text-align:center;top:834px;font-size:11px">725</div>
<div class="a" style="left:1103px;top:856px;width:292px;height:1px;background:#a0a0a0"></div>
<div class="t" style="left:1103px;width:73px;text-align:center;top:860px;font-size:11px">775</div>
<div class="t" style="left:1176px;width:74px;text-align:center;top:573px;font-size:11px">50,0</div>
<div class="t" style="left:1324px;width:71px;text-align:center;top:573px;font-size:11px">4,94</div>
<div class="a" style="left:1101px;top:879px;width:295px;height:16px;background:#f0f0f0"></div>
<div class="t" style="left:1101px;width:295px;text-align:center;top:881px;font-size:11px">Среднеквадратическое значение тока помех</div>
<div class="a" style="left:1103px;top:895px;width:292px;height:109px;background:#fff"></div>
<div class="a" style="left:1103px;top:896px;width:292px;height:27px;background:#f0f0f0"></div>
<div class="a" style="left:1103px;top:895px;width:292px;height:1px;background:#a0a0a0"></div>
<div class="a" style="left:1103px;top:895px;width:1px;height:109px;background:#a0a0a0"></div>
<div class="a" style="left:1249px;top:895px;width:1px;height:109px;background:#a0a0a0"></div>
<div class="a" style="left:1395px;top:895px;width:1px;height:109px;background:#a0a0a0"></div>
<div class="t" style="left:1103px;width:146px;text-align:center;top:899px;font-size:11px">Полоса частот, Гц</div>
<div class="t" style="left:1249px;width:146px;text-align:center;top:899px;font-size:11px">Ток "шум + сигн", А</div>
<div class="a" style="left:1103px;top:923px;width:292px;height:1px;background:#a0a0a0"></div>
<div class="t" style="left:1103px;width:146px;text-align:center;top:927px;font-size:11px">20 -&nbsp; 350</div>
<div class="a" style="left:1103px;top:951px;width:292px;height:1px;background:#a0a0a0"></div>
<div class="t" style="left:1103px;width:146px;text-align:center;top:955px;font-size:11px">350 - 4000</div>
<div class="a" style="left:1103px;top:979px;width:292px;height:1px;background:#a0a0a0"></div>
<div class="t" style="left:1103px;width:146px;text-align:center;top:983px;font-size:11px">4000 - 6000</div>
<div class="t" style="left:1249px;width:146px;text-align:center;top:983px;font-size:11px">0,04</div>
<div class="a" style="left:41px;top:1003px;width:1356px;height:1px;background:#a0a0a0"></div>
<div class="a" style="left:0;top:1004px;width:1400px;height:3px;background:#fafafa"></div>
<div class="a" style="left:0;top:1007px;width:1400px;height:1px;background:#a8a8a8"></div>
<div class="a" style="left:0;top:1008px;width:1400px;height:1px;background:#f4f4f4"></div>
<div class="a" style="left:0;top:1009px;width:1400px;height:5px;background:linear-gradient(90deg,#c98a2c 0%,#c88a30 40%,#b4884a 57%,#c9b080 57.2%,#cbb487 100%)"></div>
<div class="a" style="left:176px;top:1010px;width:58px;height:4px;background:#e2b676;border:1px solid #f0d0a0;border-bottom:none"></div>
<div class="a" style="left:424px;top:1010px;width:58px;height:4px;background:#e2b676;border:1px solid #f0d0a0;border-bottom:none"></div>
<div class="a" style="left:486px;top:1010px;width:59px;height:4px;background:#e2b676;border:1px solid #f0d0a0;border-bottom:none"></div>
</body></html>
